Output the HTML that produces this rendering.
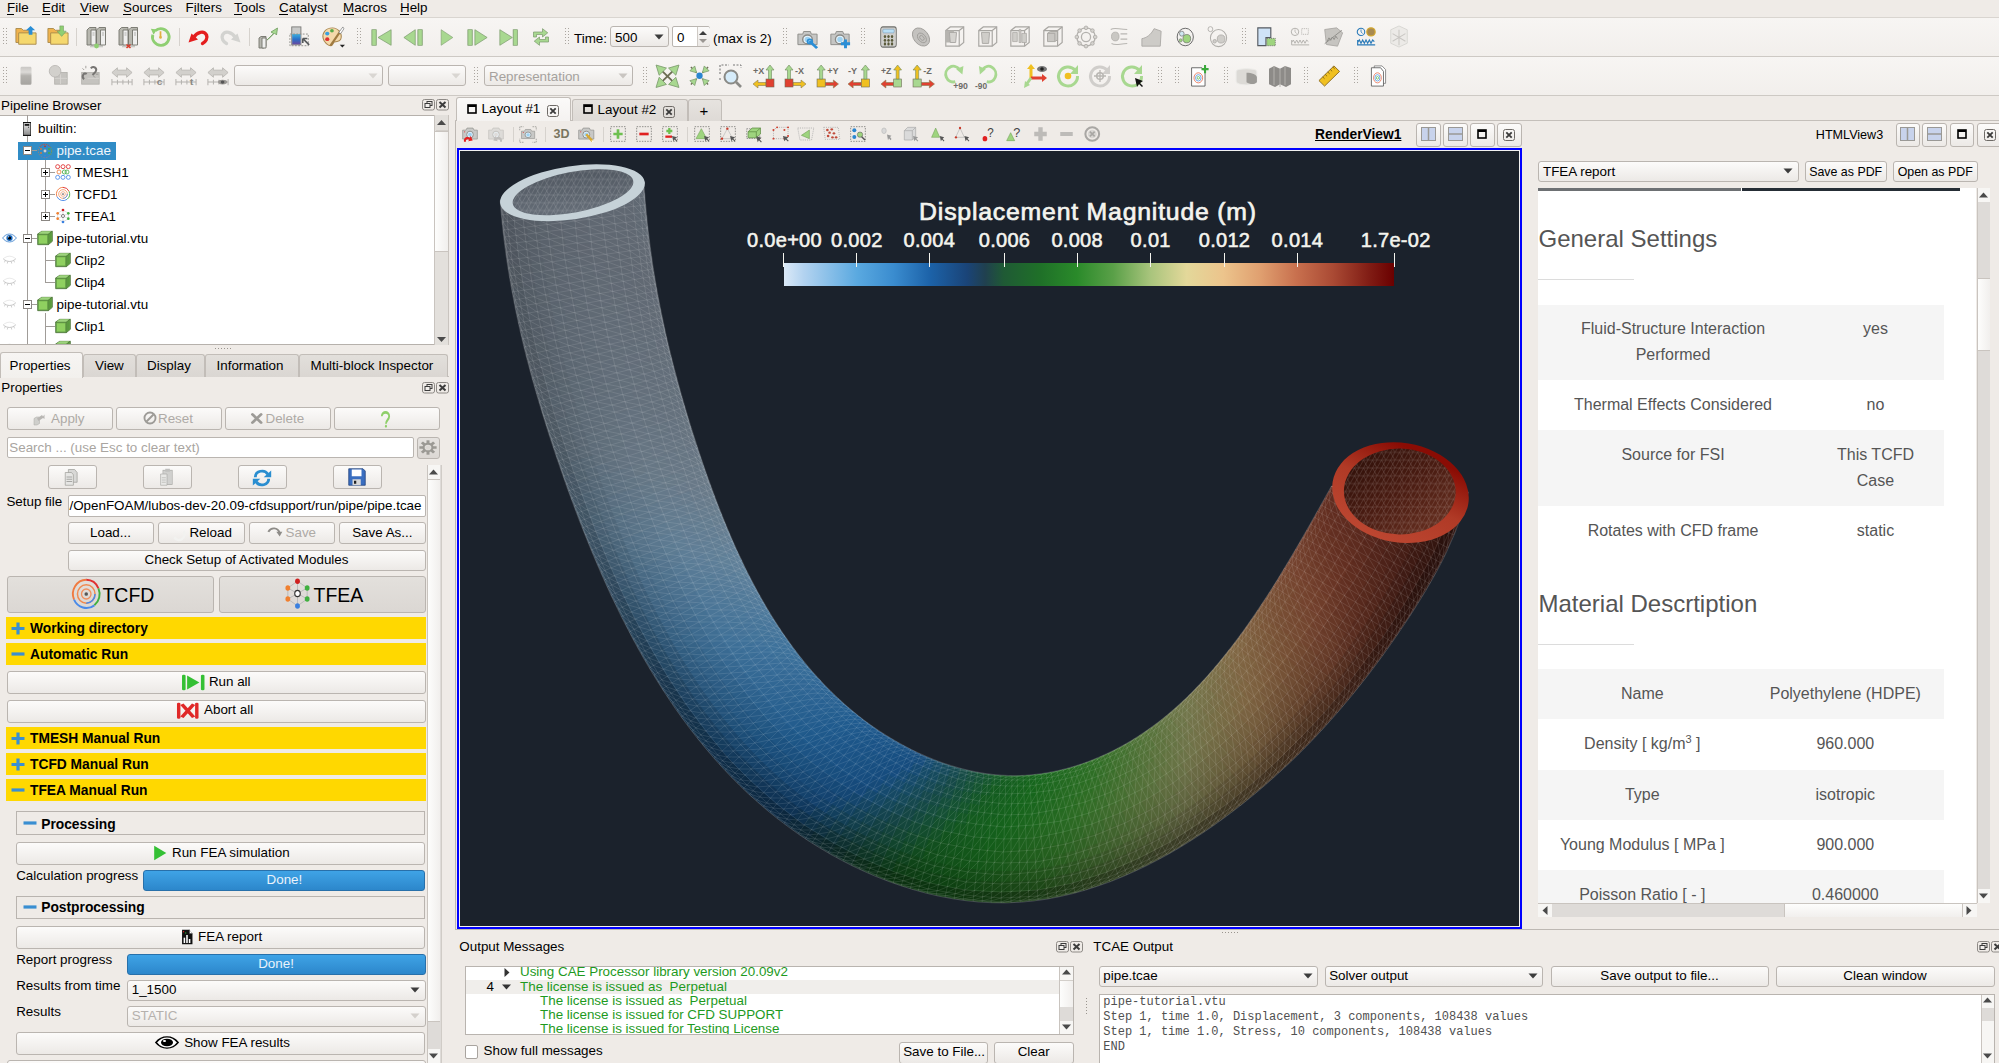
<!DOCTYPE html>
<html><head><meta charset="utf-8"><style>
html,body{margin:0;padding:0;width:1999px;height:1063px;overflow:hidden;background:#efebe7;}
.a{position:absolute;}
.t{white-space:nowrap;}
.btn{background:linear-gradient(#fcfbfa,#ece9e6);border:1px solid #bab5b0;border-radius:3px;box-sizing:border-box;}
.edit{background:#fff;border:1px solid #bab5b0;border-radius:2px;box-sizing:border-box;}
svg{overflow:visible}
</style></head><body>
<div class="a" style="left:0px;top:0px;width:1999px;height:17px;background:#efebe7"></div>
<div class="a" style="left:0px;top:17px;width:1999px;height:1px;background:#d9d5d0"></div>
<div class="a t" style="left:7px;top:-2px;font:normal 13.4px 'Liberation Sans',sans-serif;line-height:19px;color:#000;">File</div>
<div class="a t" style="left:42px;top:-2px;font:normal 13.4px 'Liberation Sans',sans-serif;line-height:19px;color:#000;">Edit</div>
<div class="a t" style="left:80px;top:-2px;font:normal 13.4px 'Liberation Sans',sans-serif;line-height:19px;color:#000;">View</div>
<div class="a t" style="left:123px;top:-2px;font:normal 13.4px 'Liberation Sans',sans-serif;line-height:19px;color:#000;">Sources</div>
<div class="a t" style="left:185.5px;top:-2px;font:normal 13.4px 'Liberation Sans',sans-serif;line-height:19px;color:#000;">Filters</div>
<div class="a t" style="left:234px;top:-2px;font:normal 13.4px 'Liberation Sans',sans-serif;line-height:19px;color:#000;">Tools</div>
<div class="a t" style="left:279px;top:-2px;font:normal 13.4px 'Liberation Sans',sans-serif;line-height:19px;color:#000;">Catalyst</div>
<div class="a t" style="left:343px;top:-2px;font:normal 13.4px 'Liberation Sans',sans-serif;line-height:19px;color:#000;">Macros</div>
<div class="a t" style="left:400px;top:-2px;font:normal 13.4px 'Liberation Sans',sans-serif;line-height:19px;color:#000;">Help</div>
<div class="a" style="left:7px;top:14px;width:7px;height:1px;background:#000"></div>
<div class="a" style="left:42px;top:14px;width:8px;height:1px;background:#000"></div>
<div class="a" style="left:80px;top:14px;width:9px;height:1px;background:#000"></div>
<div class="a" style="left:123px;top:14px;width:8px;height:1px;background:#000"></div>
<div class="a" style="left:194px;top:14px;width:3px;height:1px;background:#000"></div>
<div class="a" style="left:234px;top:14px;width:8px;height:1px;background:#000"></div>
<div class="a" style="left:279px;top:14px;width:9px;height:1px;background:#000"></div>
<div class="a" style="left:343px;top:14px;width:11px;height:1px;background:#000"></div>
<div class="a" style="left:400px;top:14px;width:9px;height:1px;background:#000"></div>
<div class="a" style="left:0px;top:18px;width:1999px;height:38px;background:linear-gradient(#f7f5f3,#f2efec)"></div>
<div class="a" style="left:0px;top:56px;width:1999px;height:1px;background:#cdc9c4"></div>
<div class="a" style="left:0px;top:57px;width:1999px;height:38px;background:linear-gradient(#f7f5f3,#f2efec)"></div>
<div class="a" style="left:0px;top:95px;width:1999px;height:1px;background:#cdc9c4"></div>
<svg class="a" style="left:3px;top:28px;" width="5" height="17" viewBox="0 0 5 17"><rect x="0" y="0" width="1" height="1" fill="#aaa59f"/><rect x="3" y="0" width="1" height="1" fill="#aaa59f"/><rect x="0" y="3" width="1" height="1" fill="#aaa59f"/><rect x="3" y="3" width="1" height="1" fill="#aaa59f"/><rect x="0" y="6" width="1" height="1" fill="#aaa59f"/><rect x="3" y="6" width="1" height="1" fill="#aaa59f"/><rect x="0" y="9" width="1" height="1" fill="#aaa59f"/><rect x="3" y="9" width="1" height="1" fill="#aaa59f"/><rect x="0" y="12" width="1" height="1" fill="#aaa59f"/><rect x="3" y="12" width="1" height="1" fill="#aaa59f"/><rect x="0" y="15" width="1" height="1" fill="#aaa59f"/><rect x="3" y="15" width="1" height="1" fill="#aaa59f"/></svg>
<div class="a" style="left:76px;top:28px;width:1px;height:18px;background:#d6d2cd"></div>
<div class="a" style="left:179px;top:28px;width:1px;height:18px;background:#d6d2cd"></div>
<div class="a" style="left:249px;top:28px;width:1px;height:18px;background:#d6d2cd"></div>
<svg class="a" style="left:357px;top:28px;" width="5" height="17" viewBox="0 0 5 17"><rect x="0" y="0" width="1" height="1" fill="#aaa59f"/><rect x="3" y="0" width="1" height="1" fill="#aaa59f"/><rect x="0" y="3" width="1" height="1" fill="#aaa59f"/><rect x="3" y="3" width="1" height="1" fill="#aaa59f"/><rect x="0" y="6" width="1" height="1" fill="#aaa59f"/><rect x="3" y="6" width="1" height="1" fill="#aaa59f"/><rect x="0" y="9" width="1" height="1" fill="#aaa59f"/><rect x="3" y="9" width="1" height="1" fill="#aaa59f"/><rect x="0" y="12" width="1" height="1" fill="#aaa59f"/><rect x="3" y="12" width="1" height="1" fill="#aaa59f"/><rect x="0" y="15" width="1" height="1" fill="#aaa59f"/><rect x="3" y="15" width="1" height="1" fill="#aaa59f"/></svg>
<svg class="a" style="left:565px;top:28px;" width="5" height="17" viewBox="0 0 5 17"><rect x="0" y="0" width="1" height="1" fill="#aaa59f"/><rect x="3" y="0" width="1" height="1" fill="#aaa59f"/><rect x="0" y="3" width="1" height="1" fill="#aaa59f"/><rect x="3" y="3" width="1" height="1" fill="#aaa59f"/><rect x="0" y="6" width="1" height="1" fill="#aaa59f"/><rect x="3" y="6" width="1" height="1" fill="#aaa59f"/><rect x="0" y="9" width="1" height="1" fill="#aaa59f"/><rect x="3" y="9" width="1" height="1" fill="#aaa59f"/><rect x="0" y="12" width="1" height="1" fill="#aaa59f"/><rect x="3" y="12" width="1" height="1" fill="#aaa59f"/><rect x="0" y="15" width="1" height="1" fill="#aaa59f"/><rect x="3" y="15" width="1" height="1" fill="#aaa59f"/></svg>
<svg class="a" style="left:783px;top:28px;" width="5" height="17" viewBox="0 0 5 17"><rect x="0" y="0" width="1" height="1" fill="#aaa59f"/><rect x="3" y="0" width="1" height="1" fill="#aaa59f"/><rect x="0" y="3" width="1" height="1" fill="#aaa59f"/><rect x="3" y="3" width="1" height="1" fill="#aaa59f"/><rect x="0" y="6" width="1" height="1" fill="#aaa59f"/><rect x="3" y="6" width="1" height="1" fill="#aaa59f"/><rect x="0" y="9" width="1" height="1" fill="#aaa59f"/><rect x="3" y="9" width="1" height="1" fill="#aaa59f"/><rect x="0" y="12" width="1" height="1" fill="#aaa59f"/><rect x="3" y="12" width="1" height="1" fill="#aaa59f"/><rect x="0" y="15" width="1" height="1" fill="#aaa59f"/><rect x="3" y="15" width="1" height="1" fill="#aaa59f"/></svg>
<svg class="a" style="left:861px;top:28px;" width="5" height="17" viewBox="0 0 5 17"><rect x="0" y="0" width="1" height="1" fill="#aaa59f"/><rect x="3" y="0" width="1" height="1" fill="#aaa59f"/><rect x="0" y="3" width="1" height="1" fill="#aaa59f"/><rect x="3" y="3" width="1" height="1" fill="#aaa59f"/><rect x="0" y="6" width="1" height="1" fill="#aaa59f"/><rect x="3" y="6" width="1" height="1" fill="#aaa59f"/><rect x="0" y="9" width="1" height="1" fill="#aaa59f"/><rect x="3" y="9" width="1" height="1" fill="#aaa59f"/><rect x="0" y="12" width="1" height="1" fill="#aaa59f"/><rect x="3" y="12" width="1" height="1" fill="#aaa59f"/><rect x="0" y="15" width="1" height="1" fill="#aaa59f"/><rect x="3" y="15" width="1" height="1" fill="#aaa59f"/></svg>
<svg class="a" style="left:1242px;top:28px;" width="5" height="17" viewBox="0 0 5 17"><rect x="0" y="0" width="1" height="1" fill="#aaa59f"/><rect x="3" y="0" width="1" height="1" fill="#aaa59f"/><rect x="0" y="3" width="1" height="1" fill="#aaa59f"/><rect x="3" y="3" width="1" height="1" fill="#aaa59f"/><rect x="0" y="6" width="1" height="1" fill="#aaa59f"/><rect x="3" y="6" width="1" height="1" fill="#aaa59f"/><rect x="0" y="9" width="1" height="1" fill="#aaa59f"/><rect x="3" y="9" width="1" height="1" fill="#aaa59f"/><rect x="0" y="12" width="1" height="1" fill="#aaa59f"/><rect x="3" y="12" width="1" height="1" fill="#aaa59f"/><rect x="0" y="15" width="1" height="1" fill="#aaa59f"/><rect x="3" y="15" width="1" height="1" fill="#aaa59f"/></svg>
<svg class="a" style="left:3px;top:67px;" width="5" height="17" viewBox="0 0 5 17"><rect x="0" y="0" width="1" height="1" fill="#aaa59f"/><rect x="3" y="0" width="1" height="1" fill="#aaa59f"/><rect x="0" y="3" width="1" height="1" fill="#aaa59f"/><rect x="3" y="3" width="1" height="1" fill="#aaa59f"/><rect x="0" y="6" width="1" height="1" fill="#aaa59f"/><rect x="3" y="6" width="1" height="1" fill="#aaa59f"/><rect x="0" y="9" width="1" height="1" fill="#aaa59f"/><rect x="3" y="9" width="1" height="1" fill="#aaa59f"/><rect x="0" y="12" width="1" height="1" fill="#aaa59f"/><rect x="3" y="12" width="1" height="1" fill="#aaa59f"/><rect x="0" y="15" width="1" height="1" fill="#aaa59f"/><rect x="3" y="15" width="1" height="1" fill="#aaa59f"/></svg>
<svg class="a" style="left:474px;top:67px;" width="5" height="17" viewBox="0 0 5 17"><rect x="0" y="0" width="1" height="1" fill="#aaa59f"/><rect x="3" y="0" width="1" height="1" fill="#aaa59f"/><rect x="0" y="3" width="1" height="1" fill="#aaa59f"/><rect x="3" y="3" width="1" height="1" fill="#aaa59f"/><rect x="0" y="6" width="1" height="1" fill="#aaa59f"/><rect x="3" y="6" width="1" height="1" fill="#aaa59f"/><rect x="0" y="9" width="1" height="1" fill="#aaa59f"/><rect x="3" y="9" width="1" height="1" fill="#aaa59f"/><rect x="0" y="12" width="1" height="1" fill="#aaa59f"/><rect x="3" y="12" width="1" height="1" fill="#aaa59f"/><rect x="0" y="15" width="1" height="1" fill="#aaa59f"/><rect x="3" y="15" width="1" height="1" fill="#aaa59f"/></svg>
<svg class="a" style="left:643px;top:67px;" width="5" height="17" viewBox="0 0 5 17"><rect x="0" y="0" width="1" height="1" fill="#aaa59f"/><rect x="3" y="0" width="1" height="1" fill="#aaa59f"/><rect x="0" y="3" width="1" height="1" fill="#aaa59f"/><rect x="3" y="3" width="1" height="1" fill="#aaa59f"/><rect x="0" y="6" width="1" height="1" fill="#aaa59f"/><rect x="3" y="6" width="1" height="1" fill="#aaa59f"/><rect x="0" y="9" width="1" height="1" fill="#aaa59f"/><rect x="3" y="9" width="1" height="1" fill="#aaa59f"/><rect x="0" y="12" width="1" height="1" fill="#aaa59f"/><rect x="3" y="12" width="1" height="1" fill="#aaa59f"/><rect x="0" y="15" width="1" height="1" fill="#aaa59f"/><rect x="3" y="15" width="1" height="1" fill="#aaa59f"/></svg>
<svg class="a" style="left:1011px;top:67px;" width="5" height="17" viewBox="0 0 5 17"><rect x="0" y="0" width="1" height="1" fill="#aaa59f"/><rect x="3" y="0" width="1" height="1" fill="#aaa59f"/><rect x="0" y="3" width="1" height="1" fill="#aaa59f"/><rect x="3" y="3" width="1" height="1" fill="#aaa59f"/><rect x="0" y="6" width="1" height="1" fill="#aaa59f"/><rect x="3" y="6" width="1" height="1" fill="#aaa59f"/><rect x="0" y="9" width="1" height="1" fill="#aaa59f"/><rect x="3" y="9" width="1" height="1" fill="#aaa59f"/><rect x="0" y="12" width="1" height="1" fill="#aaa59f"/><rect x="3" y="12" width="1" height="1" fill="#aaa59f"/><rect x="0" y="15" width="1" height="1" fill="#aaa59f"/><rect x="3" y="15" width="1" height="1" fill="#aaa59f"/></svg>
<svg class="a" style="left:1158px;top:67px;" width="5" height="17" viewBox="0 0 5 17"><rect x="0" y="0" width="1" height="1" fill="#aaa59f"/><rect x="3" y="0" width="1" height="1" fill="#aaa59f"/><rect x="0" y="3" width="1" height="1" fill="#aaa59f"/><rect x="3" y="3" width="1" height="1" fill="#aaa59f"/><rect x="0" y="6" width="1" height="1" fill="#aaa59f"/><rect x="3" y="6" width="1" height="1" fill="#aaa59f"/><rect x="0" y="9" width="1" height="1" fill="#aaa59f"/><rect x="3" y="9" width="1" height="1" fill="#aaa59f"/><rect x="0" y="12" width="1" height="1" fill="#aaa59f"/><rect x="3" y="12" width="1" height="1" fill="#aaa59f"/><rect x="0" y="15" width="1" height="1" fill="#aaa59f"/><rect x="3" y="15" width="1" height="1" fill="#aaa59f"/></svg>
<svg class="a" style="left:1175px;top:67px;" width="5" height="17" viewBox="0 0 5 17"><rect x="0" y="0" width="1" height="1" fill="#aaa59f"/><rect x="3" y="0" width="1" height="1" fill="#aaa59f"/><rect x="0" y="3" width="1" height="1" fill="#aaa59f"/><rect x="3" y="3" width="1" height="1" fill="#aaa59f"/><rect x="0" y="6" width="1" height="1" fill="#aaa59f"/><rect x="3" y="6" width="1" height="1" fill="#aaa59f"/><rect x="0" y="9" width="1" height="1" fill="#aaa59f"/><rect x="3" y="9" width="1" height="1" fill="#aaa59f"/><rect x="0" y="12" width="1" height="1" fill="#aaa59f"/><rect x="3" y="12" width="1" height="1" fill="#aaa59f"/><rect x="0" y="15" width="1" height="1" fill="#aaa59f"/><rect x="3" y="15" width="1" height="1" fill="#aaa59f"/></svg>
<svg class="a" style="left:1224px;top:67px;" width="5" height="17" viewBox="0 0 5 17"><rect x="0" y="0" width="1" height="1" fill="#aaa59f"/><rect x="3" y="0" width="1" height="1" fill="#aaa59f"/><rect x="0" y="3" width="1" height="1" fill="#aaa59f"/><rect x="3" y="3" width="1" height="1" fill="#aaa59f"/><rect x="0" y="6" width="1" height="1" fill="#aaa59f"/><rect x="3" y="6" width="1" height="1" fill="#aaa59f"/><rect x="0" y="9" width="1" height="1" fill="#aaa59f"/><rect x="3" y="9" width="1" height="1" fill="#aaa59f"/><rect x="0" y="12" width="1" height="1" fill="#aaa59f"/><rect x="3" y="12" width="1" height="1" fill="#aaa59f"/><rect x="0" y="15" width="1" height="1" fill="#aaa59f"/><rect x="3" y="15" width="1" height="1" fill="#aaa59f"/></svg>
<svg class="a" style="left:1304px;top:67px;" width="5" height="17" viewBox="0 0 5 17"><rect x="0" y="0" width="1" height="1" fill="#aaa59f"/><rect x="3" y="0" width="1" height="1" fill="#aaa59f"/><rect x="0" y="3" width="1" height="1" fill="#aaa59f"/><rect x="3" y="3" width="1" height="1" fill="#aaa59f"/><rect x="0" y="6" width="1" height="1" fill="#aaa59f"/><rect x="3" y="6" width="1" height="1" fill="#aaa59f"/><rect x="0" y="9" width="1" height="1" fill="#aaa59f"/><rect x="3" y="9" width="1" height="1" fill="#aaa59f"/><rect x="0" y="12" width="1" height="1" fill="#aaa59f"/><rect x="3" y="12" width="1" height="1" fill="#aaa59f"/><rect x="0" y="15" width="1" height="1" fill="#aaa59f"/><rect x="3" y="15" width="1" height="1" fill="#aaa59f"/></svg>
<svg class="a" style="left:1354px;top:67px;" width="5" height="17" viewBox="0 0 5 17"><rect x="0" y="0" width="1" height="1" fill="#aaa59f"/><rect x="3" y="0" width="1" height="1" fill="#aaa59f"/><rect x="0" y="3" width="1" height="1" fill="#aaa59f"/><rect x="3" y="3" width="1" height="1" fill="#aaa59f"/><rect x="0" y="6" width="1" height="1" fill="#aaa59f"/><rect x="3" y="6" width="1" height="1" fill="#aaa59f"/><rect x="0" y="9" width="1" height="1" fill="#aaa59f"/><rect x="3" y="9" width="1" height="1" fill="#aaa59f"/><rect x="0" y="12" width="1" height="1" fill="#aaa59f"/><rect x="3" y="12" width="1" height="1" fill="#aaa59f"/><rect x="0" y="15" width="1" height="1" fill="#aaa59f"/><rect x="3" y="15" width="1" height="1" fill="#aaa59f"/></svg>
<div class="a t" style="left:574px;top:29px;font:normal 13.4px 'Liberation Sans',sans-serif;line-height:19px;color:#000;">Time:</div>
<div class="a btn" style="left:610px;top:26px;width:59px;height:21px;"></div>
<div class="a t" style="left:615px;top:28px;font:normal 13.4px 'Liberation Sans',sans-serif;line-height:19px;color:#000;">500</div>
<svg class="a" style="left:653.5px;top:33.5px;" width="10" height="6" viewBox="0 0 10 6"><path d="M0.5 0.5h9l-4.5 5z" fill="#3c3c3c"/></svg>
<div class="a edit" style="left:672px;top:26px;width:38px;height:21px;"></div>
<div class="a" style="left:696.5px;top:27px;width:12.5px;height:19px;background:linear-gradient(#fbfaf9,#ebe8e5);border-left:1px solid #cfcac5;border-radius:0 2px 2px 0"></div>
<svg class="a" style="left:698px;top:29px;" width="10" height="16" viewBox="0 0 10 16"><path d="M1 6l4-4 4 4z" fill="#3c3c3c"/><path d="M1 10l4 4 4-4z" fill="#9a9692"/></svg>
<div class="a t" style="left:677px;top:28px;font:normal 13.4px 'Liberation Sans',sans-serif;line-height:19px;color:#000;">0</div>
<div class="a t" style="left:713px;top:29px;font:normal 13.4px 'Liberation Sans',sans-serif;line-height:19px;color:#000;">(max is 2)</div>
<div class="a btn" style="left:234px;top:65px;width:149px;height:21px;"></div>
<svg class="a" style="left:367.5px;top:72.5px;" width="10" height="6" viewBox="0 0 10 6"><path d="M0.5 0.5h9l-4.5 5z" fill="#d9d6d2"/></svg>
<div class="a btn" style="left:388px;top:65px;width:78px;height:21px;"></div>
<svg class="a" style="left:450.5px;top:72.5px;" width="10" height="6" viewBox="0 0 10 6"><path d="M0.5 0.5h9l-4.5 5z" fill="#d9d6d2"/></svg>
<div class="a btn" style="left:484px;top:65px;width:149px;height:21px;"></div>
<div class="a t" style="left:489px;top:67px;font:normal 13.4px 'Liberation Sans',sans-serif;line-height:19px;color:#a6a29e;">Representation</div>
<svg class="a" style="left:617.5px;top:72.5px;" width="10" height="6" viewBox="0 0 10 6"><path d="M0.5 0.5h9l-4.5 5z" fill="#c9c5c1"/></svg>
<div class="a t" style="left:1px;top:96px;font:normal 13.4px 'Liberation Sans',sans-serif;line-height:19px;color:#000;">Pipeline Browser</div>
<svg class="a" style="left:422px;top:99px;" width="28" height="12" viewBox="0 0 28 12"><rect x="0.5" y="0.5" width="12" height="10.5" rx="2" fill="none" stroke="#8e8a86"/><rect x="5" y="2.5" width="5" height="4" fill="none" stroke="#3c3c3c"/><rect x="3" y="4.5" width="5" height="4" fill="#f2efec" stroke="#3c3c3c"/><rect x="14.5" y="0.5" width="12" height="10.5" rx="2" fill="none" stroke="#8e8a86"/><path d="M17.5 3l6 5.5M23.5 3l-6 5.5" stroke="#3c3c3c" stroke-width="2"/></svg>
<div class="a" style="left:0px;top:115px;width:449px;height:230px;background:#fff;border-top:1px solid #b6b1ac;box-sizing:border-box"></div>
<div class="a" style="left:434px;top:115px;width:15px;height:230px;background:#e3e0dc;border-left:1px solid #c9c4bf;border-right:1px solid #c9c4bf;box-sizing:border-box"></div>
<div class="a" style="left:435px;top:131px;width:13px;height:121px;background:linear-gradient(90deg,#fdfdfc,#f1efed);border-top:1px solid #c9c4bf;border-bottom:1px solid #c9c4bf;box-sizing:border-box"></div>
<svg class="a" style="left:436px;top:118px;" width="11" height="10" viewBox="0 0 11 10"><path d="M1 7l4.5-5 4.5 5z" fill="#4a4a4a"/></svg>
<svg class="a" style="left:436px;top:335px;" width="11" height="10" viewBox="0 0 11 10"><path d="M1 2l4.5 5 4.5-5z" fill="#4a4a4a"/></svg>
<div class="a" style="left:436px;top:116px;width:12px;height:15px;border-bottom:1px solid #d3cfca;box-sizing:border-box"></div>
<div class="a" style="left:27px;top:115px;width:1px;height:230px;background:#a09c98"></div>
<div class="a" style="left:45px;top:159px;width:1px;height:62px;background:#a09c98"></div>
<div class="a" style="left:45px;top:172px;width:10px;height:1px;background:#a09c98"></div>
<div class="a" style="left:45px;top:194px;width:10px;height:1px;background:#a09c98"></div>
<div class="a" style="left:45px;top:216px;width:10px;height:1px;background:#a09c98"></div>
<div class="a" style="left:45px;top:247px;width:1px;height:35px;background:#a09c98"></div>
<div class="a" style="left:45px;top:260px;width:10px;height:1px;background:#a09c98"></div>
<div class="a" style="left:45px;top:282px;width:10px;height:1px;background:#a09c98"></div>
<div class="a" style="left:45px;top:313px;width:1px;height:32px;background:#a09c98"></div>
<div class="a" style="left:45px;top:326px;width:10px;height:1px;background:#a09c98"></div>
<div class="a" style="left:31px;top:238px;width:6px;height:1px;background:#a09c98"></div>
<div class="a" style="left:31px;top:304px;width:6px;height:1px;background:#a09c98"></div>
<div class="a" style="left:18px;top:142px;width:98px;height:18px;background:#308cc6"></div>
<div class="a t" style="left:38px;top:118.5px;font:normal 13.4px 'Liberation Sans',sans-serif;line-height:19px;color:#000;">builtin:</div>
<div class="a t" style="left:56.5px;top:141px;font:normal 13.4px 'Liberation Sans',sans-serif;line-height:19px;color:#f0f6fb;">pipe.tcae</div>
<div class="a t" style="left:74.4px;top:162.7px;font:normal 13.4px 'Liberation Sans',sans-serif;line-height:19px;color:#000;">TMESH1</div>
<div class="a t" style="left:74.4px;top:184.6px;font:normal 13.4px 'Liberation Sans',sans-serif;line-height:19px;color:#000;">TCFD1</div>
<div class="a t" style="left:74.4px;top:206.5px;font:normal 13.4px 'Liberation Sans',sans-serif;line-height:19px;color:#000;">TFEA1</div>
<div class="a t" style="left:56.6px;top:228.5px;font:normal 13.4px 'Liberation Sans',sans-serif;line-height:19px;color:#000;">pipe-tutorial.vtu</div>
<div class="a t" style="left:74.4px;top:250.5px;font:normal 13.4px 'Liberation Sans',sans-serif;line-height:19px;color:#000;">Clip2</div>
<div class="a t" style="left:74.4px;top:272.5px;font:normal 13.4px 'Liberation Sans',sans-serif;line-height:19px;color:#000;">Clip4</div>
<div class="a t" style="left:56.6px;top:294.5px;font:normal 13.4px 'Liberation Sans',sans-serif;line-height:19px;color:#000;">pipe-tutorial.vtu</div>
<div class="a t" style="left:74.4px;top:316.5px;font:normal 13.4px 'Liberation Sans',sans-serif;line-height:19px;color:#000;">Clip1</div>
<svg class="a" style="left:23px;top:146px;" width="9" height="9" viewBox="0 0 9 9"><rect x="0.5" y="0.5" width="8" height="8" fill="#fff" stroke="#8a8682"/><path d="M2 4.5h5" stroke="#000"/></svg>
<svg class="a" style="left:41px;top:168px;" width="9" height="9" viewBox="0 0 9 9"><rect x="0.5" y="0.5" width="8" height="8" fill="#fff" stroke="#8a8682"/><path d="M2 4.5h5" stroke="#000"/><path d="M4.5 2v5" stroke="#000"/></svg>
<svg class="a" style="left:41px;top:190px;" width="9" height="9" viewBox="0 0 9 9"><rect x="0.5" y="0.5" width="8" height="8" fill="#fff" stroke="#8a8682"/><path d="M2 4.5h5" stroke="#000"/><path d="M4.5 2v5" stroke="#000"/></svg>
<svg class="a" style="left:41px;top:212px;" width="9" height="9" viewBox="0 0 9 9"><rect x="0.5" y="0.5" width="8" height="8" fill="#fff" stroke="#8a8682"/><path d="M2 4.5h5" stroke="#000"/><path d="M4.5 2v5" stroke="#000"/></svg>
<svg class="a" style="left:23px;top:234px;" width="9" height="9" viewBox="0 0 9 9"><rect x="0.5" y="0.5" width="8" height="8" fill="#fff" stroke="#8a8682"/><path d="M2 4.5h5" stroke="#000"/></svg>
<svg class="a" style="left:23px;top:300px;" width="9" height="9" viewBox="0 0 9 9"><rect x="0.5" y="0.5" width="8" height="8" fill="#fff" stroke="#8a8682"/><path d="M2 4.5h5" stroke="#000"/></svg>
<div class="a" style="left:32px;top:150px;width:5px;height:1px;background:#a09c98"></div>
<div class="a" style="left:50px;top:172px;width:5px;height:1px;background:#a09c98"></div>
<div class="a" style="left:50px;top:194px;width:5px;height:1px;background:#a09c98"></div>
<div class="a" style="left:50px;top:216px;width:5px;height:1px;background:#a09c98"></div>
<svg class="a" style="left:215px;top:348px;" width="18" height="2" viewBox="0 0 18 2"><rect x="0" y="0" width="1" height="1" fill="#9a958f"/><rect x="3" y="0" width="1" height="1" fill="#9a958f"/><rect x="6" y="0" width="1" height="1" fill="#9a958f"/><rect x="9" y="0" width="1" height="1" fill="#9a958f"/><rect x="12" y="0" width="1" height="1" fill="#9a958f"/><rect x="15" y="0" width="1" height="1" fill="#9a958f"/></svg>
<div class="a" style="left:0px;top:376px;width:449px;height:1px;background:#c4bfba"></div>
<div class="a" style="left:83px;top:354px;width:52.5px;height:23px;background:linear-gradient(#e2dfdb,#dad6d2);border:1px solid #c2bdb8;border-bottom:none;border-radius:3px 3px 0 0;box-sizing:border-box"></div>
<div class="a t" style="left:95px;top:356px;font:normal 13.4px 'Liberation Sans',sans-serif;line-height:19px;color:#000;">View</div>
<div class="a" style="left:135.5px;top:354px;width:69.0px;height:23px;background:linear-gradient(#e2dfdb,#dad6d2);border:1px solid #c2bdb8;border-bottom:none;border-radius:3px 3px 0 0;box-sizing:border-box"></div>
<div class="a t" style="left:147px;top:356px;font:normal 13.4px 'Liberation Sans',sans-serif;line-height:19px;color:#000;">Display</div>
<div class="a" style="left:204.5px;top:354px;width:94.0px;height:23px;background:linear-gradient(#e2dfdb,#dad6d2);border:1px solid #c2bdb8;border-bottom:none;border-radius:3px 3px 0 0;box-sizing:border-box"></div>
<div class="a t" style="left:216.5px;top:356px;font:normal 13.4px 'Liberation Sans',sans-serif;line-height:19px;color:#000;">Information</div>
<div class="a" style="left:298.5px;top:354px;width:149.5px;height:23px;background:linear-gradient(#e2dfdb,#dad6d2);border:1px solid #c2bdb8;border-bottom:none;border-radius:3px 3px 0 0;box-sizing:border-box"></div>
<div class="a t" style="left:310.5px;top:356px;font:normal 13.4px 'Liberation Sans',sans-serif;line-height:19px;color:#000;">Multi-block Inspector</div>
<div class="a" style="left:0px;top:352px;width:82.5px;height:26px;background:linear-gradient(#f7f5f3,#f2f0ed);border:1px solid #c2bdb8;border-bottom:none;border-radius:3px 3px 0 0;box-sizing:border-box"></div>
<div class="a t" style="left:9.5px;top:356px;font:normal 13.4px 'Liberation Sans',sans-serif;line-height:19px;color:#000;">Properties</div>
<div class="a t" style="left:1.3px;top:377.8px;font:normal 13.4px 'Liberation Sans',sans-serif;line-height:19px;color:#000;">Properties</div>
<svg class="a" style="left:422px;top:382px;" width="28" height="12" viewBox="0 0 28 12"><rect x="0.5" y="0.5" width="12" height="10.5" rx="2" fill="none" stroke="#8e8a86"/><rect x="5" y="2.5" width="5" height="4" fill="none" stroke="#3c3c3c"/><rect x="3" y="4.5" width="5" height="4" fill="#f2efec" stroke="#3c3c3c"/><rect x="14.5" y="0.5" width="12" height="10.5" rx="2" fill="none" stroke="#8e8a86"/><path d="M17.5 3l6 5.5M23.5 3l-6 5.5" stroke="#3c3c3c" stroke-width="2"/></svg>
<div class="a btn" style="left:6.5px;top:406.5px;width:106.0px;height:23.0px;"></div>
<div class="a btn" style="left:115.5px;top:406.5px;width:106.0px;height:23.0px;"></div>
<div class="a btn" style="left:224.5px;top:406.5px;width:106.0px;height:23.0px;"></div>
<div class="a btn" style="left:333.5px;top:406.5px;width:106.0px;height:23.0px;"></div>
<div class="a t" style="left:51px;top:408.6px;font:normal 13.4px 'Liberation Sans',sans-serif;line-height:19px;color:#aeaaa6;">Apply</div>
<div class="a t" style="left:158px;top:408.6px;font:normal 13.4px 'Liberation Sans',sans-serif;line-height:19px;color:#aeaaa6;">Reset</div>
<div class="a t" style="left:265.5px;top:408.6px;font:normal 13.4px 'Liberation Sans',sans-serif;line-height:19px;color:#aeaaa6;">Delete</div>
<div class="a edit" style="left:6.5px;top:436.5px;width:407.0px;height:21.0px;"></div>
<div class="a t" style="left:9.3px;top:437.5px;font:normal 13.4px 'Liberation Sans',sans-serif;line-height:19px;color:#a9a5a1;">Search ... (use Esc to clear text)</div>
<div class="a btn" style="left:416.5px;top:436.5px;width:23.0px;height:22.0px;background:linear-gradient(#e6e3e0,#dcd8d4)"></div>
<div class="a" style="left:426.5px;top:465px;width:14px;height:598px;background:#dedbd8;border-left:1px solid #c9c4bf;box-sizing:border-box"></div>
<div class="a" style="left:427.5px;top:479px;width:12px;height:543px;background:linear-gradient(90deg,#fdfdfc,#f1efed);border-top:1px solid #c9c4bf;border-bottom:1px solid #c9c4bf;box-sizing:border-box"></div>
<div class="a" style="left:427.5px;top:465px;width:12px;height:14px;background:#f7f6f4"></div>
<svg class="a" style="left:428px;top:468px;" width="11" height="8" viewBox="0 0 11 8"><path d="M1 6.5l4.5-5 4.5 5z" fill="#4a4a4a"/></svg>
<div class="a" style="left:427.5px;top:1049px;width:12px;height:14px;background:#f7f6f4"></div>
<svg class="a" style="left:428px;top:1052px;" width="11" height="8" viewBox="0 0 11 8"><path d="M1 1.5l4.5 5 4.5-5z" fill="#4a4a4a"/></svg>
<div class="a" style="left:441px;top:465px;width:1px;height:598px;background:#d0ccc7"></div>
<div class="a btn" style="left:47.5px;top:465px;width:49.0px;height:23.5px;"></div>
<div class="a btn" style="left:142.5px;top:465px;width:49.0px;height:23.5px;"></div>
<div class="a btn" style="left:237.5px;top:465px;width:49.0px;height:23.5px;"></div>
<div class="a btn" style="left:332.5px;top:465px;width:49.0px;height:23.5px;"></div>
<div class="a t" style="left:6.4px;top:492.4px;font:normal 13.4px 'Liberation Sans',sans-serif;line-height:19px;color:#000;">Setup file</div>
<div class="a edit" style="left:67.5px;top:495px;width:358.0px;height:21.5px;"></div>
<div class="a" style="left:68.5px;top:496px;width:356px;height:20px;overflow:hidden"><div class="a t" style="right:3px;top:0px;font:13.4px 'Liberation Sans',sans-serif;line-height:20px;white-space:nowrap">/OpenFOAM/lubos-dev-20.09-cfdsupport/run/pipe/pipe.tcae</div></div>
<div class="a btn" style="left:67.5px;top:521.5px;width:86.0px;height:22.5px;"></div>
<div class="a btn" style="left:158px;top:521.5px;width:86.5px;height:22.5px;"></div>
<div class="a btn" style="left:249px;top:521.5px;width:85.5px;height:22.5px;"></div>
<div class="a btn" style="left:339px;top:521.5px;width:86.5px;height:22.5px;"></div>
<div class="a t" style="left:-189.5px;width:600px;text-align:center;top:523.4px;font:normal 13.4px 'Liberation Sans',sans-serif;line-height:19px;color:#000;">Load...</div>
<div class="a t" style="left:189.4px;top:523.4px;font:normal 13.4px 'Liberation Sans',sans-serif;line-height:19px;color:#000;">Reload</div>
<div class="a t" style="left:285.5px;top:523.4px;font:normal 13.4px 'Liberation Sans',sans-serif;line-height:19px;color:#aeaaa6;">Save</div>
<div class="a t" style="left:82.30000000000001px;width:600px;text-align:center;top:523.4px;font:normal 13.4px 'Liberation Sans',sans-serif;line-height:19px;color:#000;">Save As...</div>
<div class="a btn" style="left:67.5px;top:549.5px;width:358.0px;height:21.0px;"></div>
<div class="a t" style="left:-53.5px;width:600px;text-align:center;top:550.4px;font:normal 13.4px 'Liberation Sans',sans-serif;line-height:19px;color:#000;">Check Setup of Activated Modules</div>
<div class="a btn" style="left:6.5px;top:575.5px;width:207.0px;height:37.0px;background:linear-gradient(#e3e0dc,#dbd7d3)"></div>
<div class="a btn" style="left:218.5px;top:575.5px;width:207.0px;height:37.0px;background:linear-gradient(#e3e0dc,#dbd7d3)"></div>
<div class="a t" style="left:102.4px;top:581px;font:normal 19.5px 'Liberation Sans',sans-serif;line-height:28px;color:#000;">TCFD</div>
<div class="a t" style="left:313.5px;top:581px;font:normal 19.5px 'Liberation Sans',sans-serif;line-height:28px;color:#000;">TFEA</div>
<div class="a" style="left:6px;top:617px;width:420px;height:22px;background:#ffd800"></div>
<svg class="a" style="left:11px;top:621.5px;" width="14" height="13" viewBox="0 0 14 13"><path d="M7 0.5v12M0.5 6.5h13" stroke="#3a8fd2" stroke-width="3.2"/></svg>
<div class="a t" style="left:30px;top:619px;font:bold 13.8px 'Liberation Sans',sans-serif;line-height:20px;color:#000;">Working directory</div>
<div class="a" style="left:6px;top:643px;width:420px;height:22px;background:#ffd800"></div>
<svg class="a" style="left:11px;top:652.0px;" width="14" height="4" viewBox="0 0 14 4"><path d="M0.5 2h13" stroke="#3a8fd2" stroke-width="3.2"/></svg>
<div class="a t" style="left:30px;top:645px;font:bold 13.8px 'Liberation Sans',sans-serif;line-height:20px;color:#000;">Automatic Run</div>
<div class="a btn" style="left:6.5px;top:671px;width:419.0px;height:23px;"></div>
<div class="a t" style="left:208.9px;top:672.4px;font:normal 13.4px 'Liberation Sans',sans-serif;line-height:19px;color:#000;">Run all</div>
<div class="a btn" style="left:6.5px;top:699.5px;width:419.0px;height:23.0px;"></div>
<div class="a t" style="left:204px;top:700.3px;font:normal 13.4px 'Liberation Sans',sans-serif;line-height:19px;color:#000;">Abort all</div>
<div class="a" style="left:6px;top:727px;width:420px;height:22px;background:#ffd800"></div>
<svg class="a" style="left:11px;top:731.5px;" width="14" height="13" viewBox="0 0 14 13"><path d="M7 0.5v12M0.5 6.5h13" stroke="#3a8fd2" stroke-width="3.2"/></svg>
<div class="a t" style="left:30px;top:729px;font:bold 13.8px 'Liberation Sans',sans-serif;line-height:20px;color:#000;">TMESH Manual Run</div>
<div class="a" style="left:6px;top:753px;width:420px;height:22px;background:#ffd800"></div>
<svg class="a" style="left:11px;top:757.5px;" width="14" height="13" viewBox="0 0 14 13"><path d="M7 0.5v12M0.5 6.5h13" stroke="#3a8fd2" stroke-width="3.2"/></svg>
<div class="a t" style="left:30px;top:755px;font:bold 13.8px 'Liberation Sans',sans-serif;line-height:20px;color:#000;">TCFD Manual Run</div>
<div class="a" style="left:6px;top:779px;width:420px;height:22px;background:#ffd800"></div>
<svg class="a" style="left:11px;top:788.0px;" width="14" height="4" viewBox="0 0 14 4"><path d="M0.5 2h13" stroke="#3a8fd2" stroke-width="3.2"/></svg>
<div class="a t" style="left:30px;top:781px;font:bold 13.8px 'Liberation Sans',sans-serif;line-height:20px;color:#000;">TFEA Manual Run</div>
<div class="a" style="left:16.2px;top:811px;width:409.3px;height:24px;background:#efebe7;border:1px solid #b9b4af;box-sizing:border-box"></div>
<svg class="a" style="left:22.5px;top:821.0px;" width="14" height="4" viewBox="0 0 14 4"><path d="M0.5 2h13" stroke="#3a8fd2" stroke-width="3.2"/></svg>
<div class="a t" style="left:41.2px;top:814.7px;font:bold 13.8px 'Liberation Sans',sans-serif;line-height:20px;color:#000;">Processing</div>
<div class="a btn" style="left:16.2px;top:841.5px;width:409.3px;height:23.0px;"></div>
<div class="a t" style="left:172px;top:843px;font:normal 13.4px 'Liberation Sans',sans-serif;line-height:19px;color:#000;">Run FEA simulation</div>
<div class="a t" style="left:16.2px;top:865.7px;font:normal 13.4px 'Liberation Sans',sans-serif;line-height:19px;color:#000;">Calculation progress</div>
<div class="a" style="left:143.3px;top:869.5px;width:282.2px;height:21.0px;background:linear-gradient(#3fa3e6,#2c87cb);border:1px solid #2870aa;border-radius:3px;box-sizing:border-box"></div>
<div class="a t" style="left:-15.600000000000023px;width:600px;text-align:center;top:869.5px;font:normal 13.4px 'Liberation Sans',sans-serif;line-height:19px;color:#eaf3fb;">Done!</div>
<div class="a" style="left:16.2px;top:895.5px;width:409.3px;height:23.200000000000045px;background:#efebe7;border:1px solid #b9b4af;box-sizing:border-box"></div>
<svg class="a" style="left:22.5px;top:905.1px;" width="14" height="4" viewBox="0 0 14 4"><path d="M0.5 2h13" stroke="#3a8fd2" stroke-width="3.2"/></svg>
<div class="a t" style="left:41.2px;top:898.4000000000001px;font:bold 13.8px 'Liberation Sans',sans-serif;line-height:20px;color:#000;">Postprocessing</div>
<div class="a btn" style="left:16.2px;top:925.5px;width:409.3px;height:23.0px;"></div>
<div class="a t" style="left:198.1px;top:927.3px;font:normal 13.4px 'Liberation Sans',sans-serif;line-height:19px;color:#000;">FEA report</div>
<div class="a t" style="left:16.2px;top:949.8px;font:normal 13.4px 'Liberation Sans',sans-serif;line-height:19px;color:#000;">Report progress</div>
<div class="a" style="left:126.5px;top:953.5px;width:299.0px;height:21.5px;background:linear-gradient(#3fa3e6,#2c87cb);border:1px solid #2870aa;border-radius:3px;box-sizing:border-box"></div>
<div class="a t" style="left:-24.0px;width:600px;text-align:center;top:954px;font:normal 13.4px 'Liberation Sans',sans-serif;line-height:19px;color:#eaf3fb;">Done!</div>
<div class="a t" style="left:16.2px;top:975.7px;font:normal 13.4px 'Liberation Sans',sans-serif;line-height:19px;color:#000;">Results from time</div>
<div class="a btn" style="left:126.5px;top:979.5px;width:299.0px;height:21.5px;"></div>
<div class="a t" style="left:131.7px;top:980px;font:normal 13.4px 'Liberation Sans',sans-serif;line-height:19px;color:#000;">1_1500</div>
<svg class="a" style="left:410.0px;top:987.25px;" width="10" height="6" viewBox="0 0 10 6"><path d="M0.5 0.5h9l-4.5 5z" fill="#3c3c3c"/></svg>
<div class="a t" style="left:16.2px;top:1002px;font:normal 13.4px 'Liberation Sans',sans-serif;line-height:19px;color:#000;">Results</div>
<div class="a btn" style="left:126.5px;top:1005.5px;width:299.0px;height:21.0px;"></div>
<div class="a t" style="left:131.7px;top:1006px;font:normal 13.4px 'Liberation Sans',sans-serif;line-height:19px;color:#b5b1ad;">STATIC</div>
<svg class="a" style="left:410.0px;top:1013.0px;" width="10" height="6" viewBox="0 0 10 6"><path d="M0.5 0.5h9l-4.5 5z" fill="#d4d0cc"/></svg>
<div class="a btn" style="left:16.2px;top:1031.5px;width:409.3px;height:23.0px;"></div>
<div class="a t" style="left:184.2px;top:1033px;font:normal 13.4px 'Liberation Sans',sans-serif;line-height:19px;color:#000;">Show FEA results</div>
<div class="a btn" style="left:6.5px;top:1059.5px;width:419.0px;height:20.5px;"></div>
<div class="a" style="left:455px;top:120px;width:1544px;height:1px;background:#c4bfba"></div>
<div class="a" style="left:571.5px;top:99px;width:116.0px;height:22px;background:linear-gradient(#e6e3df,#dedad6);border:1px solid #c2bdb8;border-bottom:none;border-radius:3px 3px 0 0;box-sizing:border-box"></div>
<div class="a" style="left:687.5px;top:99px;width:34.0px;height:22px;background:linear-gradient(#e6e3df,#dedad6);border:1px solid #c2bdb8;border-bottom:none;border-radius:3px 3px 0 0;box-sizing:border-box"></div>
<div class="a" style="left:455.8px;top:97px;width:115.69999999999999px;height:25px;background:linear-gradient(#fbfaf9,#f4f2f0);border:1px solid #c2bdb8;border-bottom:none;border-radius:3px 3px 0 0;box-sizing:border-box"></div>
<svg class="a" style="left:467px;top:104px;" width="10" height="10" viewBox="0 0 10 10"><rect x="1" y="1" width="8" height="8" fill="none" stroke="#000" stroke-width="1.6"/><rect x="1" y="1" width="8" height="2" fill="#000"/></svg>
<div class="a t" style="left:481.5px;top:98.8px;font:normal 13.4px 'Liberation Sans',sans-serif;line-height:19px;color:#000;">Layout #1</div>
<svg class="a" style="left:547px;top:104.5px;" width="12" height="12" viewBox="0 0 12 12"><rect x="0.5" y="0.5" width="11" height="11" rx="2" fill="none" stroke="#6e6a66"/><path d="M3.3 3.3l5.4 5.4M8.7 3.3l-5.4 5.4" stroke="#3a3a3a" stroke-width="1.8"/></svg>
<svg class="a" style="left:583px;top:104px;" width="10" height="10" viewBox="0 0 10 10"><rect x="1" y="1" width="8" height="8" fill="none" stroke="#000" stroke-width="1.6"/><rect x="1" y="1" width="8" height="2" fill="#000"/></svg>
<div class="a t" style="left:597.5px;top:100px;font:normal 13.4px 'Liberation Sans',sans-serif;line-height:19px;color:#000;">Layout #2</div>
<svg class="a" style="left:663px;top:105.5px;" width="12" height="12" viewBox="0 0 12 12"><rect x="0.5" y="0.5" width="11" height="11" rx="2" fill="none" stroke="#6e6a66"/><path d="M3.3 3.3l5.4 5.4M8.7 3.3l-5.4 5.4" stroke="#3a3a3a" stroke-width="1.8"/></svg>
<div class="a t" style="left:404px;width:600px;text-align:center;top:99.5px;font:normal 15px 'Liberation Sans',sans-serif;line-height:21px;color:#000;">+</div>
<div class="a" style="left:456px;top:121px;width:1543px;height:27px;background:#efebe7"></div>
<div class="a" style="left:455px;top:121px;width:1px;height:808px;background:#bdb8b3"></div>
<div class="a t" style="left:1315px;top:125px;font:bold 13.8px 'Liberation Sans',sans-serif;line-height:20px;color:#000;text-decoration:underline">RenderView1</div>
<div class="a btn" style="left:1415.5px;top:122.5px;width:25.0px;height:24.0px;"></div>
<svg class="a" style="left:1420.5px;top:127px;" width="15" height="14" viewBox="0 0 15 14"><rect x="0.5" y="0.5" width="14" height="13" fill="#c8d3ec" stroke="#9a9996"/><path d="M7.5 0.5v13" stroke="#9a9996" stroke-width="1.5"/></svg>
<div class="a btn" style="left:1442.5px;top:122.5px;width:25.0px;height:24.0px;"></div>
<svg class="a" style="left:1447.5px;top:127px;" width="15" height="14" viewBox="0 0 15 14"><rect x="0.5" y="0.5" width="14" height="13" fill="#c8d3ec" stroke="#9a9996"/><path d="M0.5 7h14" stroke="#9a9996" stroke-width="1.5"/></svg>
<div class="a btn" style="left:1469.5px;top:122.5px;width:25.0px;height:24.0px;"></div>
<svg class="a" style="left:1477.0px;top:129px;" width="10" height="10" viewBox="0 0 10 10"><rect x="1" y="1" width="8" height="8" fill="none" stroke="#000" stroke-width="1.6"/><rect x="1" y="1" width="8" height="2" fill="#000"/></svg>
<div class="a btn" style="left:1496.5px;top:122.5px;width:25.0px;height:24.0px;"></div>
<svg class="a" style="left:1503.0px;top:128.5px;" width="12" height="12" viewBox="0 0 12 12"><rect x="0.5" y="0.5" width="11" height="11" rx="2" fill="none" stroke="#6e6a66"/><path d="M3.3 3.3l5.4 5.4M8.7 3.3l-5.4 5.4" stroke="#3a3a3a" stroke-width="1.8"/></svg>
<div class="a t" style="left:1815.8px;top:126px;font:normal 12.6px 'Liberation Sans',sans-serif;line-height:18px;color:#000;">HTMLView3</div>
<div class="a btn" style="left:1895.5px;top:122.5px;width:24.5px;height:24.0px;"></div>
<svg class="a" style="left:1900.25px;top:127px;" width="15" height="14" viewBox="0 0 15 14"><rect x="0.5" y="0.5" width="14" height="13" fill="#c8d3ec" stroke="#9a9996"/><path d="M7.5 0.5v13" stroke="#9a9996" stroke-width="1.5"/></svg>
<div class="a btn" style="left:1922px;top:122.5px;width:24.5px;height:24.0px;"></div>
<svg class="a" style="left:1926.75px;top:127px;" width="15" height="14" viewBox="0 0 15 14"><rect x="0.5" y="0.5" width="14" height="13" fill="#c8d3ec" stroke="#9a9996"/><path d="M0.5 7h14" stroke="#9a9996" stroke-width="1.5"/></svg>
<div class="a btn" style="left:1949.5px;top:122.5px;width:24.5px;height:24.0px;"></div>
<svg class="a" style="left:1956.75px;top:129px;" width="10" height="10" viewBox="0 0 10 10"><rect x="1" y="1" width="8" height="8" fill="none" stroke="#000" stroke-width="1.6"/><rect x="1" y="1" width="8" height="2" fill="#000"/></svg>
<div class="a btn" style="left:1977px;top:122.5px;width:25px;height:24.0px;"></div>
<svg class="a" style="left:1983.5px;top:128.5px;" width="12" height="12" viewBox="0 0 12 12"><rect x="0.5" y="0.5" width="11" height="11" rx="2" fill="none" stroke="#6e6a66"/><path d="M3.3 3.3l5.4 5.4M8.7 3.3l-5.4 5.4" stroke="#3a3a3a" stroke-width="1.8"/></svg>
<div class="a" style="left:457px;top:148px;width:1065px;height:781px;background:#0000ff"></div>
<div class="a" style="left:459px;top:150px;width:1061px;height:777px;background:#f2f2f2"></div>
<div class="a" style="left:460px;top:151px;width:1059px;height:775px;background:#1b222c"></div>
<svg class="a" style="left:460px;top:151px" width="1059" height="775" viewBox="460 151 1059 775"><defs><clipPath id="tube"><path d="M500.2 200.5 L501.0 211.0 L502.0 221.5 L503.1 231.9 L504.4 242.4 L505.9 254.0 L507.6 265.6 L509.5 277.1 L511.5 288.6 L513.7 300.1 L515.7 310.5 L518.2 321.9 L520.7 333.3 L523.4 344.7 L526.2 356.1 L529.2 367.4 L532.2 378.7 L535.4 389.9 L538.6 400.8 L541.7 411.2 L545.2 422.4 L548.7 433.6 L552.4 444.7 L555.7 454.7 L559.5 465.8 L563.3 476.8 L567.1 487.6 L570.8 497.7 L574.9 508.7 L579.0 519.6 L583.2 530.3 L587.2 540.3 L591.6 551.1 L596.2 561.9 L600.8 572.7 L605.6 583.4 L610.4 594.0 L615.5 604.6 L620.6 615.1 L625.9 625.5 L631.8 636.9 L637.4 647.2 L643.1 657.4 L649.0 667.5 L655.7 678.5 L661.9 688.4 L668.3 698.2 L675.5 708.9 L682.3 718.4 L690.0 728.8 L697.4 738.3 L705.3 748.0 L713.6 757.8 L721.4 766.5 L730.2 775.9 L739.3 785.1 L747.7 793.2 L757.3 801.8 L767.0 810.2 L777.0 818.3 L787.3 826.1 L797.7 833.6 L808.2 840.7 L818.4 847.1 L830.4 854.2 L841.4 860.2 L852.1 865.7 L864.8 871.7 L876.2 876.6 L888.6 881.4 L900.8 885.7 L913.1 889.6 L925.5 893.0 L938.2 896.0 L951.8 898.6 L964.5 900.5 L978.5 902.0 L991.4 902.7 L1005.4 902.9 L1019.5 902.3 L1032.3 901.1 L1045.8 899.3 L1058.9 896.8 L1072.5 893.7 L1085.0 890.2 L1097.2 886.3 L1110.5 881.6 L1122.4 876.8 L1134.2 871.6 L1145.8 866.1 L1157.3 860.2 L1168.6 854.1 L1179.7 847.6 L1190.7 840.8 L1201.5 833.8 L1212.1 826.6 L1221.9 819.6 L1232.0 812.1 L1242.2 804.2 L1252.2 796.1 L1261.5 788.3 L1270.9 780.1 L1279.5 772.3 L1289.0 763.5 L1297.4 755.4 L1306.5 746.3 L1314.6 737.8 L1322.6 729.3 L1330.4 720.6 L1338.2 711.8 L1345.9 702.7 L1353.6 693.4 L1361.1 684.0 L1368.5 674.6 L1374.8 666.2 L1381.8 656.8 L1388.6 647.3 L1395.3 637.7 L1401.9 628.0 L1407.8 619.3 L1414.1 609.5 L1419.7 600.5 L1425.8 590.5 L1431.1 581.4 L1436.8 571.2 L1441.7 561.9 L1446.3 552.5 L1454.8 533.2 L1462.4 512.9 L1468.4 492.0 L1331.5 486.0 L1331.5 486.0 L1331.5 486.0 L1331.2 486.6 L1325.7 496.4 L1320.2 506.2 L1315.3 514.9 L1309.8 524.7 L1304.8 533.4 L1299.2 543.1 L1294.1 551.8 L1288.4 561.4 L1283.2 570.0 L1278.0 578.6 L1272.7 587.1 L1267.3 595.5 L1261.1 604.9 L1255.7 613.0 L1250.2 621.0 L1244.6 629.0 L1238.8 636.9 L1232.8 644.9 L1226.6 652.8 L1220.3 660.6 L1213.9 668.3 L1208.1 675.0 L1201.3 682.4 L1195.2 688.8 L1188.1 696.0 L1181.4 702.4 L1174.3 708.8 L1167.6 714.6 L1160.7 720.2 L1153.4 725.7 L1145.5 731.3 L1138.1 736.3 L1130.6 741.0 L1122.9 745.4 L1115.1 749.6 L1107.2 753.5 L1099.1 757.1 L1090.9 760.5 L1082.6 763.6 L1074.2 766.3 L1066.8 768.4 L1058.2 770.6 L1049.5 772.3 L1041.9 773.6 L1033.5 774.6 L1025.5 775.3 L1016.6 775.6 L1008.9 775.5 L1001.3 775.2 L992.5 774.4 L984.8 773.4 L976.1 771.9 L968.5 770.3 L960.0 768.2 L951.5 765.7 L943.1 763.0 L934.8 759.9 L927.0 756.7 L918.5 752.9 L911.6 749.6 L903.0 745.1 L895.0 740.6 L888.3 736.6 L880.1 731.4 L872.6 726.3 L865.4 721.1 L858.4 715.7 L851.6 710.1 L844.8 704.3 L838.3 698.3 L831.1 691.4 L824.8 685.1 L818.8 678.6 L812.1 671.2 L806.4 664.4 L800.6 657.2 L794.7 649.6 L789.5 642.4 L783.7 634.2 L778.8 626.9 L773.3 618.4 L768.1 609.9 L763.6 602.2 L758.7 593.5 L753.9 584.7 L749.3 575.8 L745.3 567.9 L741.0 558.8 L736.7 549.7 L732.6 540.6 L728.7 531.3 L724.8 522.1 L721.1 512.8 L717.4 503.4 L713.9 494.1 L710.1 483.7 L706.6 474.1 L703.3 464.6 L700.1 455.1 L696.7 444.7 L693.5 434.9 L690.5 425.4 L687.6 415.8 L684.4 405.0 L681.6 395.4 L678.9 385.7 L676.3 376.0 L673.5 365.6 L671.0 355.5 L668.6 345.7 L666.3 336.0 L664.2 326.2 L662.1 316.3 L660.1 306.5 L658.2 296.7 L656.4 286.8 L654.5 275.7 L652.9 265.8 L651.5 255.9 L650.1 246.0 L648.9 236.0 L647.7 226.1 L646.6 214.9 L645.5 203.8 L644.6 192.6 L643.9 181.4z"/></clipPath><pattern id="mesh" width="9" height="7.8" patternUnits="userSpaceOnUse"><path d="M0 0H9M0 7.8H9M0 7.8L4.5 0L9 7.8M-4.5 0L0 7.8M4.5 7.8L9 0" stroke="#fff" stroke-width="0.5" fill="none"/></pattern><linearGradient id="rring" x1="0" y1="0" x2="1" y2="0.4"><stop offset="0" stop-color="#c04a34"/><stop offset="0.6" stop-color="#b03a26"/><stop offset="1" stop-color="#8a0c04"/></linearGradient><linearGradient id="rin" x1="1" y1="0" x2="0" y2="1"><stop offset="0" stop-color="#2a0e08"/><stop offset="0.5" stop-color="#4a1c12"/><stop offset="1" stop-color="#6e3424"/></linearGradient><linearGradient id="tin" x1="0" y1="0" x2="1" y2="0.3"><stop offset="0" stop-color="#4e555e"/><stop offset="1" stop-color="#646c76"/></linearGradient></defs><g clip-path="url(#tube)"><g stroke-width="0.7"><path d="M500.2 200.5L501.3 214.7 517.5 212.6 516.4 198.3z" fill="#50565f"/><path d="M512.2 198.9L513.3 213.1 529.5 211.1 528.3 196.8z" fill="#545b64"/><path d="M524.1 197.3L525.3 211.6 541.4 209.6 540.3 195.2z" fill="#575f68"/><path d="M536.1 195.7L537.2 210.1 553.4 208.1 552.3 193.6z" fill="#5a626b"/><path d="M548.1 194.1L549.2 208.6 565.3 206.6 564.3 192.0z" fill="#5c646d"/><path d="M560.1 192.5L561.2 207.1 577.3 205.0 576.2 190.4z" fill="#5d656f"/><path d="M572.0 190.9L573.1 205.6 589.3 203.5 588.2 188.8z" fill="#5f6670"/><path d="M584.0 189.4L585.1 204.1 601.2 202.0 600.2 187.2z" fill="#606872"/><path d="M596.0 187.8L597.1 202.5 613.2 200.5 612.2 185.6z" fill="#606872"/><path d="M608.0 186.2L609.0 201.0 625.2 199.0 624.1 184.0z" fill="#606872"/><path d="M619.9 184.6L621.0 199.5 637.1 197.5 636.1 182.4z" fill="#606872"/><path d="M631.9 183.0L632.9 198.0 644.9 196.5 643.9 181.4z" fill="#606873"/><path d="M501.0 211.0L502.4 225.1 518.5 223.2 517.2 208.9z" fill="#4f565e"/><path d="M513.0 209.5L514.3 223.7 530.5 221.7 529.2 207.4z" fill="#545b64"/><path d="M525.0 207.9L526.3 222.2 542.4 220.3 541.1 205.8z" fill="#575e68"/><path d="M536.9 206.4L538.2 220.8 554.4 218.8 553.1 204.3z" fill="#5a626b"/><path d="M548.9 204.9L550.2 219.3 566.3 217.3 565.1 202.8z" fill="#5c646d"/><path d="M560.9 203.3L562.2 217.9 578.3 215.9 577.0 201.2z" fill="#5d656f"/><path d="M572.8 201.8L574.1 216.4 590.2 214.4 589.0 199.7z" fill="#5f6670"/><path d="M584.8 200.2L586.1 214.9 602.2 213.0 601.0 198.2z" fill="#606872"/><path d="M596.8 198.7L598.0 213.5 614.2 211.5 612.9 196.6z" fill="#606872"/><path d="M608.7 197.2L610.0 212.0 626.1 210.1 624.9 195.1z" fill="#606872"/><path d="M620.7 195.6L621.9 210.6 638.1 208.6 636.9 193.6z" fill="#606872"/><path d="M632.7 194.1L633.9 209.1 645.8 207.7 644.6 192.6z" fill="#606973"/><path d="M502.0 221.5L503.5 235.6 519.7 233.7 518.2 219.5z" fill="#4f565f"/><path d="M514.0 220.0L515.5 234.2 531.6 232.3 530.1 218.0z" fill="#545b64"/><path d="M525.9 218.5L527.4 232.8 543.6 230.9 542.1 216.5z" fill="#575e67"/><path d="M537.9 217.0L539.4 231.4 555.5 229.5 554.0 215.0z" fill="#5a626b"/><path d="M549.9 215.6L551.3 230.0 567.5 228.1 566.0 213.6z" fill="#5c636d"/><path d="M561.8 214.1L563.3 228.6 579.4 226.7 578.0 212.1z" fill="#5d656f"/><path d="M573.8 212.6L575.2 227.2 591.4 225.3 589.9 210.6z" fill="#5f6670"/><path d="M585.7 211.1L587.2 225.8 603.3 223.9 601.9 209.1z" fill="#606872"/><path d="M597.7 209.7L599.1 224.4 615.2 222.5 613.8 207.7z" fill="#606872"/><path d="M609.7 208.2L611.1 223.0 627.2 221.1 625.8 206.2z" fill="#606872"/><path d="M621.6 206.7L623.0 221.6 639.1 219.7 637.8 204.7z" fill="#606872"/><path d="M633.6 205.2L635.0 220.2 646.9 218.8 645.5 203.8z" fill="#606973"/><path d="M503.1 231.9L504.8 246.0 520.9 244.2 519.3 230.0z" fill="#4f565f"/><path d="M515.1 230.5L516.8 244.7 532.9 242.9 531.2 228.6z" fill="#545b64"/><path d="M527.0 229.1L528.7 243.4 544.8 241.5 543.2 227.2z" fill="#575f68"/><path d="M539.0 227.7L540.7 242.0 556.8 240.2 555.1 225.8z" fill="#5a626b"/><path d="M550.9 226.3L552.6 240.7 568.7 238.9 567.1 224.3z" fill="#5c636d"/><path d="M562.9 224.8L564.5 239.3 580.7 237.5 579.0 222.9z" fill="#5d656f"/><path d="M574.8 223.4L576.5 238.0 592.6 236.2 591.0 221.5z" fill="#5f6670"/><path d="M586.8 222.0L588.4 236.7 604.5 234.8 602.9 220.1z" fill="#606872"/><path d="M598.8 220.6L600.4 235.3 616.5 233.5 614.9 218.7z" fill="#606872"/><path d="M610.7 219.2L612.3 234.0 628.4 232.2 626.8 217.2z" fill="#606872"/><path d="M622.7 217.7L624.2 232.6 640.4 230.8 638.8 215.8z" fill="#606872"/><path d="M634.6 216.3L636.2 231.3 648.1 230.0 646.6 214.9z" fill="#606973"/><path d="M504.4 242.4L506.5 258.0 522.5 256.0 520.5 240.5z" fill="#4f565f"/><path d="M516.3 241.0L518.4 256.5 534.4 254.4 532.5 239.2z" fill="#545c65"/><path d="M528.3 239.7L530.3 254.9 546.3 252.9 544.4 237.8z" fill="#575f68"/><path d="M540.2 238.3L542.2 253.4 558.2 251.3 556.3 236.5z" fill="#5a626c"/><path d="M552.2 236.9L554.1 251.9 570.1 249.8 568.3 235.1z" fill="#5c646d"/><path d="M564.1 235.6L566.0 250.3 582.0 248.2 580.2 233.7z" fill="#5d656f"/><path d="M576.1 234.2L577.9 248.8 593.9 246.7 592.2 232.4z" fill="#5e6670"/><path d="M588.0 232.9L589.8 247.2 605.8 245.1 604.1 231.0z" fill="#606872"/><path d="M599.9 231.5L601.7 245.7 617.7 243.6 616.1 229.7z" fill="#606872"/><path d="M611.9 230.1L613.6 244.1 629.6 242.1 628.0 228.3z" fill="#606872"/><path d="M623.8 228.8L625.5 242.6 641.5 240.5 639.9 226.9z" fill="#606872"/><path d="M635.8 227.4L637.4 241.1 649.3 239.5 647.7 226.1z" fill="#606973"/><path d="M505.9 254.0L508.2 269.6 524.2 267.3 522.0 252.0z" fill="#4f565f"/><path d="M517.8 252.5L520.1 267.9 536.1 265.7 533.9 250.5z" fill="#545c65"/><path d="M529.8 251.0L532.0 266.2 548.0 264.0 545.8 249.0z" fill="#575f69"/><path d="M541.7 249.5L543.8 264.6 559.8 262.3 557.7 247.5z" fill="#5b636c"/><path d="M553.6 248.0L555.7 262.9 571.7 260.6 569.7 246.0z" fill="#5c646e"/><path d="M565.5 246.5L567.5 261.2 583.5 258.9 581.6 244.5z" fill="#5d656f"/><path d="M577.4 245.0L579.4 259.5 595.4 257.3 593.5 243.0z" fill="#5f6670"/><path d="M589.3 243.5L591.3 257.9 607.3 255.6 605.4 241.5z" fill="#606872"/><path d="M601.2 242.0L603.1 256.2 619.1 253.9 617.3 240.0z" fill="#606872"/><path d="M613.1 240.5L615.0 254.5 631.0 252.2 629.2 238.5z" fill="#606872"/><path d="M625.0 239.0L626.8 252.8 642.8 250.5 641.1 237.0z" fill="#606872"/><path d="M637.0 237.5L638.7 251.1 650.6 249.5 648.9 236.0z" fill="#616973"/><path d="M507.6 265.6L510.1 281.1 526.1 278.7 523.7 263.4z" fill="#4f575f"/><path d="M519.5 263.9L522.0 279.3 537.9 276.9 535.5 261.7z" fill="#545c65"/><path d="M531.4 262.3L533.8 277.5 549.7 275.1 547.4 260.1z" fill="#576069"/><path d="M543.3 260.7L545.6 275.7 561.5 273.3 559.3 258.5z" fill="#5b636d"/><path d="M555.1 259.0L557.4 273.9 573.4 271.4 571.2 256.8z" fill="#5c656f"/><path d="M567.0 257.4L569.2 272.1 585.2 269.6 583.0 255.2z" fill="#5d6670"/><path d="M578.9 255.8L581.0 270.3 597.0 267.8 594.9 253.6z" fill="#5f6771"/><path d="M590.7 254.1L592.9 268.5 608.8 266.0 606.8 251.9z" fill="#606872"/><path d="M602.6 252.5L604.7 266.6 620.6 264.2 618.7 250.3z" fill="#606872"/><path d="M614.5 250.9L616.5 264.8 632.5 262.4 630.5 248.7z" fill="#606872"/><path d="M626.4 249.2L628.3 263.0 644.3 260.6 642.4 247.0z" fill="#606872"/><path d="M638.2 247.6L640.1 261.2 652.0 259.4 650.1 246.0z" fill="#616973"/><path d="M509.5 277.1L512.2 292.7 528.1 290.0 525.5 274.7z" fill="#4f575f"/><path d="M521.3 275.3L524.0 290.7 539.9 288.1 537.3 273.0z" fill="#545c66"/><path d="M533.2 273.6L535.7 288.8 551.6 286.1 549.1 271.2z" fill="#57606a"/><path d="M545.0 271.8L547.5 286.8 563.4 284.2 561.0 269.4z" fill="#5b646d"/><path d="M556.8 270.0L559.3 284.9 575.2 282.3 572.8 267.7z" fill="#5c656f"/><path d="M568.7 268.3L571.1 282.9 587.0 280.3 584.6 265.9z" fill="#5e6670"/><path d="M580.5 266.5L582.8 281.0 598.7 278.4 596.5 264.1z" fill="#5f6872"/><path d="M592.3 264.7L594.6 279.0 610.5 276.4 608.3 262.4z" fill="#606873"/><path d="M604.2 263.0L606.4 277.1 622.3 274.5 620.1 260.6z" fill="#606872"/><path d="M616.0 261.2L618.1 275.1 634.0 272.5 632.0 258.8z" fill="#606872"/><path d="M627.8 259.4L629.9 273.2 645.8 270.6 643.8 257.1z" fill="#606872"/><path d="M639.6 257.7L641.7 271.3 653.5 269.3 651.5 255.9z" fill="#616973"/><path d="M511.5 288.6L514.4 304.2 530.2 301.3 527.4 286.1z" fill="#4e5760"/><path d="M523.3 286.7L526.1 302.1 542.0 299.3 539.2 284.2z" fill="#545d66"/><path d="M535.1 284.8L537.9 300.0 553.7 297.2 551.0 282.3z" fill="#57606a"/><path d="M546.9 282.9L549.6 297.9 565.4 295.1 562.8 280.4z" fill="#5b646e"/><path d="M558.6 281.0L561.3 295.8 577.1 293.0 574.6 278.5z" fill="#5d6570"/><path d="M570.4 279.1L573.0 293.8 588.8 291.0 586.3 276.6z" fill="#5e6771"/><path d="M582.2 277.2L584.7 291.7 600.6 288.9 598.1 274.7z" fill="#5f6872"/><path d="M594.0 275.3L596.5 289.6 612.3 286.8 609.9 272.8z" fill="#606973"/><path d="M605.8 273.4L608.2 287.5 624.0 284.7 621.7 270.9z" fill="#606973"/><path d="M617.6 271.5L619.9 285.4 635.7 282.6 633.5 269.0z" fill="#606973"/><path d="M629.4 269.6L631.6 283.4 647.5 280.6 645.3 267.1z" fill="#606873"/><path d="M641.2 267.7L643.4 281.3 655.1 279.2 652.9 265.8z" fill="#616973"/><path d="M513.7 300.1L516.4 314.1 532.3 311.4 529.5 297.4z" fill="#4e5760"/><path d="M525.4 298.1L528.2 312.1 544.0 309.5 541.2 295.4z" fill="#545d66"/><path d="M537.1 296.1L539.9 310.2 555.7 307.5 553.0 293.3z" fill="#58616a"/><path d="M548.9 294.0L551.6 308.2 567.4 305.6 564.7 291.3z" fill="#5b646f"/><path d="M560.6 292.0L563.3 306.3 579.1 303.6 576.5 289.3z" fill="#5d6670"/><path d="M572.4 290.0L575.0 304.3 590.9 301.7 588.2 287.2z" fill="#5e6772"/><path d="M584.1 287.9L586.8 302.4 602.6 299.7 599.9 285.2z" fill="#606973"/><path d="M595.8 285.9L598.5 300.4 614.3 297.8 611.7 283.2z" fill="#616a74"/><path d="M607.6 283.9L610.2 298.5 626.0 295.8 623.4 281.1z" fill="#616974"/><path d="M619.3 281.8L621.9 296.5 637.7 293.9 635.2 279.1z" fill="#616974"/><path d="M631.0 279.8L633.6 294.6 649.4 291.9 646.9 277.1z" fill="#616973"/><path d="M642.8 277.8L645.3 292.6 657.1 290.7 654.5 275.7z" fill="#616973"/><path d="M515.7 310.5L519.0 325.9 534.7 323.0 531.5 307.8z" fill="#4e5760"/><path d="M527.4 308.5L530.7 323.8 546.4 320.9 543.3 305.8z" fill="#545d67"/><path d="M539.2 306.5L542.3 321.6 558.0 318.7 555.0 303.8z" fill="#58616b"/><path d="M550.9 304.5L554.0 319.5 569.7 316.6 566.7 301.9z" fill="#5b656f"/><path d="M562.6 302.6L565.6 317.3 581.3 314.4 578.4 299.9z" fill="#5d6671"/><path d="M574.3 300.6L577.3 315.2 593.0 312.3 590.2 297.9z" fill="#5e6872"/><path d="M586.1 298.6L588.9 313.0 604.6 310.1 601.9 296.0z" fill="#606974"/><path d="M597.8 296.6L600.6 310.9 616.3 308.0 613.6 294.0z" fill="#616a75"/><path d="M609.5 294.7L612.2 308.7 627.9 305.8 625.3 292.0z" fill="#616a74"/><path d="M621.2 292.7L623.9 306.6 639.6 303.7 637.1 290.0z" fill="#616a74"/><path d="M633.0 290.7L635.5 304.4 651.2 301.5 648.8 288.1z" fill="#616a74"/><path d="M644.7 288.8L647.2 302.3 658.8 300.1 656.4 286.8z" fill="#616974"/><path d="M518.2 321.9L521.6 337.3 537.3 334.2 533.9 319.1z" fill="#4e5760"/><path d="M529.8 319.8L533.2 335.0 548.9 332.0 545.6 317.0z" fill="#545d67"/><path d="M541.5 317.7L544.8 332.8 560.5 329.7 557.2 314.9z" fill="#58616b"/><path d="M553.2 315.6L556.4 330.5 572.0 327.4 568.9 312.7z" fill="#5b6570"/><path d="M564.8 313.5L568.0 328.2 583.6 325.1 580.6 310.6z" fill="#5d6771"/><path d="M576.5 311.4L579.6 325.9 595.2 322.8 592.3 308.5z" fill="#5f6873"/><path d="M588.2 309.3L591.2 323.6 606.8 320.6 603.9 306.4z" fill="#606a74"/><path d="M599.8 307.2L602.8 321.4 618.4 318.3 615.6 304.3z" fill="#616b75"/><path d="M611.5 305.1L614.4 319.1 630.0 316.0 627.3 302.2z" fill="#616b75"/><path d="M623.2 303.0L626.0 316.8 641.6 313.7 638.9 300.1z" fill="#616a75"/><path d="M634.9 300.9L637.6 314.5 653.2 311.4 650.6 298.0z" fill="#616a75"/><path d="M646.5 298.8L649.1 312.2 660.7 310.0 658.2 296.7z" fill="#616a75"/><path d="M520.7 333.3L524.4 348.7 539.9 345.4 536.4 330.3z" fill="#4e5760"/><path d="M532.3 331.1L535.9 346.3 551.5 343.0 548.0 328.1z" fill="#545d67"/><path d="M543.9 328.8L547.4 343.9 563.0 340.6 559.6 325.8z" fill="#58616c"/><path d="M555.6 326.6L559.0 341.5 574.5 338.2 571.2 323.6z" fill="#5c6670"/><path d="M567.2 324.4L570.5 339.1 586.1 335.8 582.8 321.4z" fill="#5d6772"/><path d="M578.8 322.1L582.0 336.6 597.6 333.4 594.5 319.1z" fill="#5f6974"/><path d="M590.4 319.9L593.6 334.2 609.1 331.0 606.1 316.9z" fill="#606a75"/><path d="M602.0 317.7L605.1 331.8 620.7 328.6 617.7 314.7z" fill="#616b76"/><path d="M613.6 315.4L616.6 329.4 632.2 326.2 629.3 312.4z" fill="#616b76"/><path d="M625.2 313.2L628.2 327.0 643.7 323.8 640.9 310.2z" fill="#626b76"/><path d="M636.9 311.0L639.7 324.6 655.3 321.4 652.5 308.0z" fill="#626b76"/><path d="M648.5 308.7L651.2 322.2 662.8 319.8 660.1 306.5z" fill="#626b75"/><path d="M523.4 344.7L527.2 360.0 542.7 356.6 539.0 341.5z" fill="#4e5760"/><path d="M535.0 342.3L538.7 357.5 554.2 354.1 550.6 339.1z" fill="#545e67"/><path d="M546.5 340.0L550.2 355.0 565.7 351.5 562.1 336.8z" fill="#58626c"/><path d="M558.1 337.6L561.6 352.4 577.1 349.0 573.7 334.4z" fill="#5c6671"/><path d="M569.6 335.2L573.1 349.9 588.6 346.5 585.2 332.1z" fill="#5e6873"/><path d="M581.2 332.9L584.6 347.3 600.1 343.9 596.8 329.7z" fill="#5f6974"/><path d="M592.7 330.5L596.1 344.8 611.5 341.4 608.3 327.3z" fill="#616b76"/><path d="M604.3 328.2L607.5 342.3 623.0 338.9 619.9 325.0z" fill="#626c77"/><path d="M615.8 325.8L619.0 339.7 634.5 336.3 631.4 322.6z" fill="#626c77"/><path d="M627.4 323.4L630.5 337.2 646.0 333.8 643.0 320.2z" fill="#626c76"/><path d="M639.0 321.1L641.9 334.7 657.4 331.2 654.6 317.9z" fill="#626b76"/><path d="M650.5 318.7L653.4 332.1 664.9 329.6 662.1 316.3z" fill="#626b76"/><path d="M526.2 356.1L530.2 371.3 545.6 367.7 541.7 352.7z" fill="#4e5760"/><path d="M537.7 353.6L541.6 368.7 557.0 365.1 553.2 350.2z" fill="#545e68"/><path d="M549.2 351.1L553.0 366.0 568.4 362.4 564.7 347.7z" fill="#58626d"/><path d="M560.7 348.6L564.4 363.4 579.8 359.8 576.2 345.2z" fill="#5c6671"/><path d="M572.2 346.1L575.8 360.7 591.2 357.1 587.7 342.7z" fill="#5e6873"/><path d="M583.7 343.6L587.2 358.0 602.6 354.4 599.2 340.2z" fill="#5f6a75"/><path d="M595.2 341.1L598.7 355.4 614.1 351.8 610.7 337.7z" fill="#616b76"/><path d="M606.7 338.6L610.1 352.7 625.5 349.1 622.2 335.3z" fill="#626c78"/><path d="M618.2 336.1L621.5 350.0 636.9 346.4 633.7 332.8z" fill="#626c77"/><path d="M629.7 333.6L632.9 347.4 648.3 343.8 645.2 330.3z" fill="#626c77"/><path d="M641.2 331.1L644.3 344.7 659.7 341.1 656.7 327.8z" fill="#626c77"/><path d="M652.7 328.6L655.7 342.0 667.1 339.4 664.2 326.2z" fill="#626c77"/><path d="M529.2 367.4L533.3 382.6 548.6 378.9 544.6 363.8z" fill="#4e5761"/><path d="M540.6 364.8L544.6 379.8 560.0 376.1 556.0 361.2z" fill="#545e68"/><path d="M552.0 362.1L556.0 377.0 571.3 373.3 567.5 358.6z" fill="#58626d"/><path d="M563.5 359.5L567.3 374.3 582.6 370.5 578.9 356.0z" fill="#5c6772"/><path d="M574.9 356.9L578.7 371.5 594.0 367.7 590.3 353.4z" fill="#5e6974"/><path d="M586.3 354.3L590.0 368.7 605.3 364.9 601.8 350.7z" fill="#606a75"/><path d="M597.8 351.7L601.4 365.9 616.7 362.1 613.2 348.1z" fill="#616c77"/><path d="M609.2 349.0L612.7 363.1 628.0 359.3 624.6 345.5z" fill="#626d78"/><path d="M620.6 346.4L624.0 360.3 639.3 356.5 636.0 342.9z" fill="#626d78"/><path d="M632.0 343.8L635.4 357.5 650.7 353.7 647.5 340.3z" fill="#626d78"/><path d="M643.5 341.2L646.7 354.7 662.0 351.0 658.9 337.7z" fill="#626d78"/><path d="M654.9 338.6L658.1 351.9 669.4 349.1 666.3 336.0z" fill="#636c78"/><path d="M532.2 378.7L536.5 393.9 551.7 389.9 547.6 375.0z" fill="#4e5861"/><path d="M543.6 375.9L547.8 391.0 563.0 387.0 558.9 372.2z" fill="#545f69"/><path d="M555.0 373.2L559.1 388.0 574.3 384.1 570.3 369.5z" fill="#58636d"/><path d="M566.3 370.4L570.3 385.1 585.6 381.2 581.7 366.7z" fill="#5c6772"/><path d="M577.7 367.7L581.6 382.2 596.8 378.3 593.0 364.0z" fill="#5e6974"/><path d="M589.1 364.9L592.9 379.3 608.1 375.4 604.4 361.2z" fill="#606b76"/><path d="M600.4 362.2L604.2 376.4 619.4 372.4 615.8 358.5z" fill="#616c78"/><path d="M611.8 359.5L615.4 373.5 630.6 369.5 627.1 355.7z" fill="#636e79"/><path d="M623.1 356.7L626.7 370.5 641.9 366.6 638.5 353.0z" fill="#636d79"/><path d="M634.5 354.0L638.0 367.6 653.2 363.7 649.9 350.3z" fill="#636d79"/><path d="M645.9 351.2L649.2 364.7 664.5 360.8 661.2 347.5z" fill="#636d78"/><path d="M657.2 348.5L660.5 361.8 671.8 358.9 668.6 345.7z" fill="#636d78"/><path d="M535.4 389.9L539.7 404.6 554.8 400.6 550.7 386.1z" fill="#4e5862"/><path d="M546.7 387.1L550.9 401.6 566.1 397.7 562.0 383.2z" fill="#545f6a"/><path d="M558.0 384.2L562.1 398.7 577.3 394.7 573.3 380.3z" fill="#58646e"/><path d="M569.3 381.3L573.4 395.7 588.5 391.7 584.5 377.4z" fill="#5c6873"/><path d="M580.6 378.4L584.6 392.8 599.7 388.8 595.8 374.6z" fill="#5e6a75"/><path d="M591.9 375.6L595.8 389.8 611.0 385.8 607.1 371.7z" fill="#606b77"/><path d="M603.2 372.7L607.0 386.9 622.2 382.9 618.4 368.8z" fill="#626d79"/><path d="M614.5 369.8L618.3 383.9 633.4 379.9 629.7 366.0z" fill="#636e7a"/><path d="M625.8 367.0L629.5 380.9 644.7 376.9 641.0 363.1z" fill="#636e7a"/><path d="M637.1 364.1L640.7 378.0 655.9 374.0 652.3 360.2z" fill="#636e79"/><path d="M648.4 361.2L651.9 375.0 667.1 371.0 663.6 357.3z" fill="#636e79"/><path d="M659.7 358.3L663.2 372.1 674.4 369.1 671.0 355.5z" fill="#636e79"/><path d="M538.6 400.8L542.8 414.9 557.9 410.9 553.8 396.8z" fill="#4e5963"/><path d="M549.8 397.9L554.0 412.0 569.1 408.0 565.0 393.9z" fill="#54606b"/><path d="M561.1 394.9L565.2 409.0 580.3 405.1 576.2 391.0z" fill="#59646f"/><path d="M572.3 392.0L576.4 406.1 591.5 402.1 587.5 388.0z" fill="#5d6974"/><path d="M583.6 389.1L587.6 403.2 602.7 399.2 598.7 385.1z" fill="#5f6a76"/><path d="M594.8 386.1L598.8 400.2 613.9 396.3 610.0 382.2z" fill="#606c77"/><path d="M606.0 383.2L610.0 397.3 625.1 393.3 621.2 379.2z" fill="#626e79"/><path d="M617.3 380.3L621.2 394.4 636.3 390.4 632.5 376.3z" fill="#636f7a"/><path d="M628.5 377.3L632.4 391.4 647.5 387.5 643.7 373.4z" fill="#636f7a"/><path d="M639.8 374.4L643.6 388.5 658.7 384.5 655.0 370.4z" fill="#636e7a"/><path d="M651.0 371.4L654.8 385.6 669.9 381.6 666.2 367.5z" fill="#636e7a"/><path d="M662.3 368.5L666.0 382.6 677.2 379.7 673.5 365.6z" fill="#636e7a"/><path d="M541.7 411.2L546.4 426.3 561.4 422.2 556.8 407.3z" fill="#4e5963"/><path d="M552.9 408.3L557.5 423.2 572.5 419.0 568.1 404.4z" fill="#55606b"/><path d="M564.1 405.4L568.6 420.1 583.6 415.9 579.3 401.4z" fill="#596570"/><path d="M575.3 402.4L579.7 417.0 594.7 412.8 590.5 398.5z" fill="#5d6a75"/><path d="M586.6 399.5L590.9 413.9 605.9 409.7 601.7 395.6z" fill="#5f6b77"/><path d="M597.8 396.6L602.0 410.8 617.0 406.6 612.9 392.6z" fill="#616d79"/><path d="M609.0 393.6L613.1 407.7 628.1 403.5 624.1 389.7z" fill="#626e7a"/><path d="M620.2 390.7L624.2 404.6 639.2 400.4 635.3 386.8z" fill="#636f7b"/><path d="M631.4 387.8L635.3 401.5 650.3 397.3 646.5 383.8z" fill="#646f7b"/><path d="M642.6 384.8L646.4 398.4 661.5 394.2 657.8 380.9z" fill="#646f7b"/><path d="M653.8 381.9L657.6 395.3 672.6 391.1 669.0 378.0z" fill="#646f7b"/><path d="M665.0 379.0L668.7 392.2 679.8 389.1 676.3 376.0z" fill="#646f7b"/><path d="M545.2 422.4L550.0 437.5 564.9 433.1 560.2 418.3z" fill="#4d5963"/><path d="M556.3 419.4L561.0 434.3 575.9 429.9 571.4 415.2z" fill="#54616c"/><path d="M567.5 416.3L572.1 431.0 587.0 426.7 582.5 412.2z" fill="#596671"/><path d="M578.6 413.3L583.1 427.8 598.0 423.4 593.6 409.1z" fill="#5d6a76"/><path d="M589.7 410.2L594.2 424.6 609.1 420.2 604.8 406.1z" fill="#5f6c78"/><path d="M600.9 407.1L605.2 421.3 620.1 417.0 615.9 403.0z" fill="#616e7a"/><path d="M612.0 404.1L616.3 418.1 631.2 413.8 627.1 399.9z" fill="#636f7b"/><path d="M623.2 401.0L627.3 414.9 642.2 410.5 638.2 396.9z" fill="#64707c"/><path d="M634.3 398.0L638.3 411.7 653.3 407.3 649.4 393.8z" fill="#64707c"/><path d="M645.5 394.9L649.4 408.4 664.3 404.1 660.5 390.8z" fill="#64707c"/><path d="M656.6 391.8L660.4 405.2 675.4 400.9 671.6 387.7z" fill="#64707b"/><path d="M667.7 388.8L671.5 402.0 682.5 398.8 678.9 385.7z" fill="#64707b"/><path d="M548.7 433.6L553.6 448.6 568.4 444.1 563.7 429.3z" fill="#4d5963"/><path d="M559.8 430.4L564.6 445.2 579.4 440.7 574.7 426.1z" fill="#54616c"/><path d="M570.9 427.2L575.6 441.9 590.4 437.4 585.8 422.9z" fill="#596672"/><path d="M581.9 424.0L586.6 438.5 601.4 434.0 596.9 419.7z" fill="#5e6b77"/><path d="M593.0 420.8L597.5 435.2 612.4 430.7 608.0 416.5z" fill="#606d79"/><path d="M604.1 417.7L608.5 431.8 623.3 427.3 619.0 413.4z" fill="#626f7b"/><path d="M615.2 414.5L619.5 428.5 634.3 424.0 630.1 410.2z" fill="#63707d"/><path d="M626.2 411.3L630.5 425.1 645.3 420.6 641.2 407.0z" fill="#64717e"/><path d="M637.3 408.1L641.4 421.8 656.3 417.3 652.2 403.8z" fill="#64717d"/><path d="M648.4 404.9L652.4 418.4 667.2 413.9 663.3 400.6z" fill="#64707c"/><path d="M659.4 401.8L663.4 415.1 678.2 410.6 674.4 397.5z" fill="#64707c"/><path d="M670.5 398.6L674.4 411.7 685.4 408.4 681.6 395.4z" fill="#64707c"/><path d="M552.4 444.7L556.9 458.2 571.7 453.8 567.2 440.2z" fill="#4b5863"/><path d="M563.4 441.4L567.8 455.0 582.7 450.6 578.2 436.9z" fill="#54616c"/><path d="M574.4 438.1L578.8 451.7 593.7 447.4 589.2 433.6z" fill="#596672"/><path d="M585.4 434.8L589.8 448.5 604.7 444.2 600.2 430.3z" fill="#5e6c78"/><path d="M596.4 431.5L600.8 445.3 615.6 440.9 611.2 427.0z" fill="#606e7a"/><path d="M607.4 428.2L611.8 442.1 626.6 437.7 622.2 423.7z" fill="#62707c"/><path d="M618.4 424.9L622.8 438.8 637.6 434.5 633.2 420.4z" fill="#64717e"/><path d="M629.4 421.6L633.8 435.6 648.6 431.3 644.2 417.1z" fill="#65727f"/><path d="M640.4 418.2L644.8 432.4 659.6 428.1 655.2 413.8z" fill="#65727e"/><path d="M651.4 414.9L655.7 429.2 670.6 424.8 666.2 410.5z" fill="#65717e"/><path d="M662.4 411.6L666.7 426.0 681.6 421.6 677.2 407.2z" fill="#65717d"/><path d="M673.4 408.3L677.7 422.7 688.7 419.5 684.4 405.0z" fill="#65717d"/><path d="M555.7 454.7L560.8 469.6 575.5 465.0 570.5 450.3z" fill="#4a5863"/><path d="M566.7 451.4L571.7 466.2 586.4 461.6 581.5 447.1z" fill="#53616d"/><path d="M577.7 448.2L582.6 462.8 597.3 458.2 592.5 443.8z" fill="#596773"/><path d="M588.7 445.0L593.5 459.4 608.2 454.8 603.5 440.6z" fill="#5e6c79"/><path d="M599.7 441.7L604.4 456.0 619.1 451.4 614.5 437.3z" fill="#606f7b"/><path d="M610.6 438.5L615.3 452.6 630.0 448.0 625.5 434.1z" fill="#62717d"/><path d="M621.6 435.2L626.2 449.2 640.9 444.6 636.5 430.8z" fill="#64727f"/><path d="M632.6 432.0L637.1 445.8 651.8 441.2 647.5 427.6z" fill="#667380"/><path d="M643.6 428.7L648.0 442.4 662.7 437.7 658.5 424.4z" fill="#657380"/><path d="M654.6 425.5L658.9 438.9 673.6 434.3 669.4 421.1z" fill="#65737f"/><path d="M665.6 422.2L669.8 435.5 684.5 430.9 680.4 417.9z" fill="#65727f"/><path d="M676.6 419.0L680.7 432.1 691.5 428.7 687.6 415.8z" fill="#65727e"/><path d="M559.5 465.8L564.7 480.7 579.3 475.9 574.2 461.2z" fill="#485763"/><path d="M570.4 462.4L575.5 477.1 590.1 472.4 585.1 457.8z" fill="#51616e"/><path d="M581.3 459.0L586.3 473.6 600.9 468.8 596.1 454.5z" fill="#576774"/><path d="M592.2 455.7L597.1 470.1 611.8 465.3 607.0 451.1z" fill="#5e6d7a"/><path d="M603.2 452.3L608.0 466.5 622.6 461.8 617.9 447.7z" fill="#61707d"/><path d="M614.1 448.9L618.8 463.0 633.4 458.2 628.8 444.4z" fill="#63727f"/><path d="M625.0 445.6L629.6 459.5 644.2 454.7 639.7 441.0z" fill="#657381"/><path d="M635.9 442.2L640.4 455.9 655.1 451.2 650.7 437.6z" fill="#667582"/><path d="M646.8 438.8L651.3 452.4 665.9 447.6 661.6 434.3z" fill="#667481"/><path d="M657.8 435.5L662.1 448.9 676.7 444.1 672.5 430.9z" fill="#667481"/><path d="M668.7 432.1L672.9 445.3 687.5 440.6 683.4 427.5z" fill="#667380"/><path d="M679.6 428.7L683.8 441.8 694.6 438.3 690.5 425.4z" fill="#66737f"/><path d="M563.3 476.8L568.5 491.3 583.0 486.5 578.0 472.1z" fill="#465664"/><path d="M574.2 473.3L579.3 487.7 593.8 482.9 588.8 468.6z" fill="#50616e"/><path d="M585.0 469.8L590.0 484.1 604.6 479.3 599.7 465.1z" fill="#566775"/><path d="M595.9 466.3L600.8 480.5 615.4 475.7 610.5 461.6z" fill="#5c6d7c"/><path d="M606.7 462.8L611.6 477.0 626.1 472.1 621.4 458.1z" fill="#60707e"/><path d="M617.6 459.4L622.4 473.4 636.9 468.5 632.2 454.6z" fill="#637280"/><path d="M628.4 455.9L633.1 469.8 647.7 464.9 643.1 451.2z" fill="#657482"/><path d="M639.3 452.4L643.9 466.2 658.5 461.3 653.9 447.7z" fill="#677683"/><path d="M650.1 448.9L654.7 462.6 669.2 457.7 664.8 444.2z" fill="#677583"/><path d="M661.0 445.4L665.5 459.0 680.0 454.1 675.6 440.7z" fill="#677582"/><path d="M671.8 441.9L676.2 455.4 690.8 450.5 686.5 437.2z" fill="#677582"/><path d="M682.7 438.4L687.0 451.8 697.8 448.2 693.5 434.9z" fill="#677481"/><path d="M567.1 487.6L572.1 501.3 586.6 496.5 581.7 482.8z" fill="#455664"/><path d="M577.9 484.0L582.9 497.7 597.4 492.9 592.5 479.2z" fill="#4e606f"/><path d="M588.7 480.4L593.6 494.2 608.2 489.4 603.3 475.6z" fill="#556776"/><path d="M599.5 476.9L604.4 490.6 619.0 485.9 614.1 472.0z" fill="#5b6e7d"/><path d="M610.3 473.3L615.2 487.1 629.7 482.3 624.9 468.5z" fill="#5f7180"/><path d="M621.1 469.7L625.9 483.6 640.5 478.8 635.7 464.9z" fill="#627382"/><path d="M631.9 466.2L636.7 480.0 651.3 475.2 646.5 461.3z" fill="#667683"/><path d="M642.7 462.6L647.5 476.5 662.0 471.7 657.3 457.8z" fill="#677785"/><path d="M653.5 459.0L658.3 472.9 672.8 468.1 668.1 454.2z" fill="#677784"/><path d="M664.3 455.4L669.0 469.4 683.6 464.6 678.9 450.6z" fill="#677684"/><path d="M675.1 451.9L679.8 465.8 694.3 461.1 689.7 447.1z" fill="#677683"/><path d="M685.9 448.3L690.6 462.3 701.3 458.7 696.7 444.7z" fill="#677583"/><path d="M570.8 497.7L576.3 512.5 590.7 507.5 585.4 492.9z" fill="#435564"/><path d="M581.6 494.2L587.0 508.8 601.4 503.8 596.1 489.4z" fill="#4c6070"/><path d="M592.4 490.6L597.7 505.1 612.1 500.1 606.9 485.8z" fill="#536777"/><path d="M603.1 487.1L608.4 501.4 622.8 496.4 617.7 482.3z" fill="#5a6e7e"/><path d="M613.9 483.5L619.0 497.7 633.4 492.7 628.5 478.7z" fill="#5e7181"/><path d="M624.7 480.0L629.7 494.0 644.1 488.9 639.2 475.2z" fill="#617483"/><path d="M635.5 476.4L640.4 490.2 654.8 485.2 650.0 471.6z" fill="#647685"/><path d="M646.2 472.9L651.1 486.5 665.5 481.5 660.8 468.1z" fill="#677886"/><path d="M657.0 469.3L661.7 482.8 676.2 477.8 671.6 464.5z" fill="#687886"/><path d="M667.8 465.8L672.4 479.1 686.8 474.1 682.3 461.0z" fill="#687785"/><path d="M678.6 462.2L683.1 475.4 697.5 470.4 693.1 457.4z" fill="#687785"/><path d="M689.3 458.7L693.8 471.7 704.5 467.9 700.1 455.1z" fill="#687784"/><path d="M574.9 508.7L580.5 523.5 594.8 518.3 589.3 503.7z" fill="#415564"/><path d="M585.6 505.0L591.1 519.6 605.4 514.4 600.0 500.1z" fill="#4b6070"/><path d="M596.3 501.3L601.7 515.8 616.0 510.6 610.7 496.4z" fill="#526778"/><path d="M607.0 497.7L612.3 511.9 626.6 506.8 621.5 492.7z" fill="#596e80"/><path d="M617.7 494.0L622.9 508.1 637.2 502.9 632.2 489.0z" fill="#5c7183"/><path d="M628.4 490.3L633.5 504.3 647.9 499.1 642.9 485.4z" fill="#607485"/><path d="M639.1 486.7L644.1 500.4 658.5 495.3 653.6 481.7z" fill="#637787"/><path d="M649.8 483.0L654.7 496.6 669.1 491.4 664.3 478.0z" fill="#667988"/><path d="M660.5 479.3L665.4 492.8 679.7 487.6 675.0 474.3z" fill="#677987"/><path d="M671.2 475.6L676.0 488.9 690.3 483.7 685.7 470.7z" fill="#687987"/><path d="M681.9 472.0L686.6 485.1 700.9 479.9 696.4 467.0z" fill="#687886"/><path d="M692.6 468.3L697.2 481.2 707.8 477.4 703.3 464.6z" fill="#687886"/><path d="M579.0 519.6L584.7 534.1 598.9 528.8 593.4 514.5z" fill="#405464"/><path d="M589.7 515.8L595.2 530.2 609.5 524.9 604.0 510.7z" fill="#496071"/><path d="M600.3 512.0L605.8 526.3 620.0 521.0 614.7 506.9z" fill="#506779"/><path d="M610.9 508.2L616.3 522.3 630.6 517.1 625.3 503.1z" fill="#576f81"/><path d="M621.6 504.5L626.9 518.4 641.1 513.1 635.9 499.3z" fill="#5b7284"/><path d="M632.2 500.7L637.4 514.5 651.7 509.2 646.6 495.5z" fill="#5f7587"/><path d="M642.8 496.9L648.0 510.6 662.2 505.3 657.2 491.7z" fill="#627889"/><path d="M653.5 493.1L658.5 506.7 672.8 501.4 667.8 487.9z" fill="#65798a"/><path d="M664.1 489.3L669.1 502.8 683.3 497.5 678.5 484.1z" fill="#66798a"/><path d="M674.7 485.5L679.6 498.9 693.9 493.6 689.1 480.4z" fill="#687989"/><path d="M685.4 481.7L690.2 495.0 704.4 489.7 699.7 476.6z" fill="#697988"/><path d="M696.0 477.9L700.7 491.0 711.3 487.1 706.6 474.1z" fill="#697987"/><path d="M583.2 530.3L588.6 543.8 602.8 538.6 597.5 525.1z" fill="#3d5263"/><path d="M593.8 526.5L599.1 540.0 613.4 534.8 608.1 521.2z" fill="#485f72"/><path d="M604.4 522.6L609.7 536.1 623.9 530.9 618.6 517.3z" fill="#4f677a"/><path d="M614.9 518.7L620.2 532.3 634.5 527.1 629.2 513.4z" fill="#566f83"/><path d="M625.5 514.8L630.8 528.4 645.0 523.2 639.8 509.6z" fill="#5a7286"/><path d="M636.1 510.9L641.3 524.6 655.6 519.4 650.3 505.7z" fill="#5d7588"/><path d="M646.6 507.0L651.9 520.7 666.1 515.5 660.9 501.8z" fill="#61788b"/><path d="M657.2 503.2L662.4 516.9 676.7 511.7 671.5 497.9z" fill="#647a8c"/><path d="M667.8 499.3L673.0 513.1 687.2 507.9 682.1 494.0z" fill="#657a8c"/><path d="M678.4 495.4L683.5 509.2 697.8 504.0 692.6 490.2z" fill="#667a8b"/><path d="M688.9 491.5L694.1 505.4 708.3 500.2 703.2 486.3z" fill="#687a8a"/><path d="M699.5 487.6L704.6 501.5 715.2 497.7 710.1 483.7z" fill="#697a89"/><path d="M587.2 540.3L593.2 554.9 607.3 549.5 601.4 535.1z" fill="#3a5062"/><path d="M597.7 536.5L603.6 550.9 617.7 545.5 612.0 531.3z" fill="#455e71"/><path d="M608.3 532.6L614.1 546.9 628.2 541.5 622.6 527.4z" fill="#4d677b"/><path d="M618.9 528.7L624.5 542.9 638.7 537.5 633.1 523.5z" fill="#556f84"/><path d="M629.4 524.9L635.0 538.9 649.1 533.4 643.7 519.7z" fill="#597387"/><path d="M640.0 521.0L645.5 534.8 659.6 529.4 654.2 515.8z" fill="#5c768a"/><path d="M650.5 517.2L655.9 530.8 670.0 525.4 664.8 512.0z" fill="#60798d"/><path d="M661.1 513.3L666.4 526.8 680.5 521.4 675.3 508.1z" fill="#637b8e"/><path d="M671.6 509.5L676.8 522.8 690.9 517.4 685.9 504.3z" fill="#647b8e"/><path d="M682.2 505.6L687.3 518.8 701.4 513.4 696.4 500.4z" fill="#657b8d"/><path d="M692.7 501.8L697.7 514.8 711.9 509.3 707.0 496.6z" fill="#677b8c"/><path d="M703.3 497.9L708.2 510.7 718.7 506.7 713.9 494.1z" fill="#687b8b"/><path d="M591.6 551.1L597.7 565.7 611.8 560.1 605.8 545.8z" fill="#374e61"/><path d="M602.1 547.2L608.1 561.6 622.1 556.0 616.3 541.8z" fill="#425c70"/><path d="M612.6 543.2L618.5 557.4 632.5 551.8 626.7 537.8z" fill="#4a657a"/><path d="M623.1 539.2L628.9 553.3 642.9 547.7 637.2 533.9z" fill="#536f85"/><path d="M633.6 535.2L639.3 549.2 653.3 543.6 647.7 529.9z" fill="#577389"/><path d="M644.0 531.3L649.7 545.0 663.7 539.4 658.2 525.9z" fill="#5b768c"/><path d="M654.5 527.3L660.0 540.9 674.1 535.3 668.7 521.9z" fill="#5f7a8f"/><path d="M665.0 523.3L670.4 536.7 684.4 531.2 679.1 518.0z" fill="#627c90"/><path d="M675.5 519.3L680.8 532.6 694.8 527.0 689.6 514.0z" fill="#637c90"/><path d="M686.0 515.4L691.2 528.5 705.2 522.9 700.1 510.0z" fill="#647c8f"/><path d="M696.4 511.4L701.6 524.3 715.6 518.7 710.6 506.0z" fill="#667c8e"/><path d="M706.9 507.4L712.0 520.2 722.3 516.1 717.4 503.4z" fill="#677c8d"/><path d="M596.2 561.9L602.4 576.4 616.3 570.7 610.2 556.4z" fill="#344c5f"/><path d="M606.6 557.8L612.7 572.2 626.7 566.4 620.6 552.3z" fill="#3f5a6f"/><path d="M617.0 553.7L623.0 567.9 637.0 562.2 631.0 548.2z" fill="#47647a"/><path d="M627.4 549.6L633.4 563.7 647.3 557.9 641.4 544.1z" fill="#4f6d84"/><path d="M637.8 545.5L643.7 559.4 657.6 553.7 651.8 540.0z" fill="#557289"/><path d="M648.2 541.5L654.0 555.1 667.9 549.4 662.3 535.9z" fill="#5a778e"/><path d="M658.6 537.4L664.3 550.9 678.2 545.1 672.7 531.8z" fill="#5d7a91"/><path d="M669.0 533.3L674.6 546.6 688.5 540.9 683.1 527.7z" fill="#607c92"/><path d="M679.4 529.2L684.9 542.4 698.8 536.6 693.5 523.6z" fill="#627c92"/><path d="M689.8 525.1L695.2 538.1 709.1 532.4 703.9 519.5z" fill="#637d91"/><path d="M700.2 521.0L705.5 533.9 719.4 528.1 714.3 515.4z" fill="#647d90"/><path d="M710.6 516.9L715.8 529.6 726.1 525.3 721.1 512.8z" fill="#667d8f"/><path d="M600.8 572.7L607.2 587.1 621.0 581.2 614.8 567.0z" fill="#314a5e"/><path d="M611.1 568.4L617.5 582.7 631.3 576.8 625.1 562.8z" fill="#3c586e"/><path d="M621.5 564.2L627.7 578.3 641.5 572.4 635.4 558.5z" fill="#446279"/><path d="M631.8 560.0L637.9 574.0 651.7 568.1 645.8 554.3z" fill="#4c6c84"/><path d="M642.1 555.8L648.2 569.6 662.0 563.7 656.1 550.1z" fill="#527189"/><path d="M652.5 551.6L658.4 565.2 672.2 559.3 666.4 545.9z" fill="#57768e"/><path d="M662.8 547.4L668.6 560.8 682.4 554.9 676.8 541.7z" fill="#5c7b92"/><path d="M673.1 543.2L678.9 556.5 692.7 550.6 687.1 537.5z" fill="#5f7d94"/><path d="M683.5 538.9L689.1 552.1 702.9 546.2 697.4 533.3z" fill="#617d94"/><path d="M693.8 534.7L699.3 547.7 713.1 541.8 707.8 529.0z" fill="#627d93"/><path d="M704.1 530.5L709.6 543.3 723.4 537.4 718.1 524.8z" fill="#637d92"/><path d="M714.5 526.3L719.8 539.0 730.0 534.6 724.8 522.1z" fill="#657d91"/><path d="M605.6 583.4L612.2 597.7 625.9 591.6 619.4 577.5z" fill="#2f485d"/><path d="M615.8 579.0L622.3 593.2 636.0 587.1 629.7 573.2z" fill="#39566e"/><path d="M626.1 574.7L632.5 588.7 646.2 582.7 639.9 568.8z" fill="#416079"/><path d="M636.3 570.4L642.6 584.2 656.3 578.2 650.2 564.5z" fill="#496a84"/><path d="M646.6 566.0L652.8 579.7 666.5 573.7 660.4 560.2z" fill="#4e6f89"/><path d="M656.9 561.7L662.9 575.2 676.7 569.2 670.7 555.8z" fill="#54748e"/><path d="M667.1 557.4L673.1 570.7 686.8 564.7 681.0 551.5z" fill="#597992"/><path d="M677.4 553.0L683.3 566.3 697.0 560.2 691.2 547.2z" fill="#5d7d96"/><path d="M687.6 548.7L693.4 561.8 707.1 555.7 701.5 542.8z" fill="#607e96"/><path d="M697.9 544.3L703.6 557.3 717.3 551.2 711.7 538.5z" fill="#617e95"/><path d="M708.2 540.0L713.7 552.8 727.4 546.7 722.0 534.2z" fill="#627e94"/><path d="M718.4 535.7L723.9 548.3 734.0 543.8 728.7 531.3z" fill="#647e93"/><path d="M610.4 594.0L617.2 608.3 630.8 602.0 624.2 588.0z" fill="#2c465c"/><path d="M620.6 589.5L627.3 603.6 640.9 597.4 634.4 583.5z" fill="#36556d"/><path d="M630.8 585.1L637.4 599.0 651.0 592.8 644.6 579.1z" fill="#3e5e78"/><path d="M641.0 580.6L647.4 594.4 661.1 588.2 654.7 574.6z" fill="#466884"/><path d="M651.2 576.2L657.5 589.8 671.1 583.6 664.9 570.2z" fill="#4b6e89"/><path d="M661.4 571.7L667.6 585.2 681.2 579.0 675.1 565.7z" fill="#50738e"/><path d="M671.5 567.3L677.7 580.6 691.3 574.4 685.3 561.3z" fill="#557893"/><path d="M681.7 562.8L687.8 576.0 701.4 569.8 695.5 556.8z" fill="#5a7c96"/><path d="M691.9 558.4L697.9 571.4 711.5 565.1 705.7 552.4z" fill="#5d7d97"/><path d="M702.1 553.9L707.9 566.8 721.5 560.5 715.8 547.9z" fill="#607f97"/><path d="M712.3 549.5L718.0 562.1 731.6 555.9 726.0 543.5z" fill="#617f96"/><path d="M722.5 545.0L728.1 557.5 738.2 552.9 732.6 540.6z" fill="#637f96"/><path d="M615.5 604.6L622.4 618.7 635.9 612.4 629.1 598.4z" fill="#29455a"/><path d="M625.6 600.0L632.4 614.0 645.9 607.6 639.2 593.8z" fill="#33536c"/><path d="M635.7 595.4L642.4 609.3 655.9 602.9 649.3 589.2z" fill="#3b5d78"/><path d="M645.8 590.8L652.4 604.6 665.9 598.2 659.4 584.7z" fill="#436783"/><path d="M655.9 586.3L662.4 599.8 675.9 593.4 669.5 580.1z" fill="#486c89"/><path d="M666.0 581.7L672.4 595.1 685.9 588.7 679.6 575.5z" fill="#4d718e"/><path d="M676.1 577.1L682.4 590.4 695.9 584.0 689.7 571.0z" fill="#527693"/><path d="M686.2 572.6L692.4 585.6 705.9 579.3 699.9 566.4z" fill="#577a96"/><path d="M696.3 568.0L702.4 580.9 715.9 574.5 710.0 561.8z" fill="#5a7c97"/><path d="M706.4 563.4L712.4 576.2 725.9 569.8 720.1 557.3z" fill="#5d7e98"/><path d="M716.5 558.9L722.4 571.5 735.9 565.1 730.2 552.7z" fill="#608098"/><path d="M726.6 554.3L732.4 566.7 742.4 562.0 736.7 549.7z" fill="#618098"/><path d="M620.6 615.1L627.7 629.2 641.1 622.6 634.1 608.7z" fill="#274359"/><path d="M630.6 610.4L637.6 624.3 651.0 617.8 644.2 604.1z" fill="#30516b"/><path d="M640.7 605.7L647.6 619.5 661.0 612.9 654.2 599.4z" fill="#385b77"/><path d="M650.7 601.0L657.5 614.6 670.9 608.1 664.2 594.7z" fill="#406583"/><path d="M660.7 596.3L667.4 609.8 680.8 603.2 674.3 590.0z" fill="#456b89"/><path d="M670.7 591.6L677.4 604.9 690.8 598.4 684.3 585.3z" fill="#4a708e"/><path d="M680.8 586.9L687.3 600.1 700.7 593.5 694.3 580.6z" fill="#4f7593"/><path d="M690.8 582.3L697.2 595.2 710.6 588.7 704.4 575.9z" fill="#547996"/><path d="M700.8 577.6L707.1 590.4 720.5 583.9 714.4 571.2z" fill="#567b97"/><path d="M710.9 572.9L717.1 585.6 730.5 579.0 724.4 566.5z" fill="#597c98"/><path d="M720.9 568.2L727.0 580.7 740.4 574.2 734.4 561.9z" fill="#5c7e98"/><path d="M730.9 563.5L736.9 575.9 746.8 571.0 741.0 558.8z" fill="#608099"/><path d="M625.9 625.5L633.9 640.9 647.1 633.9 639.3 619.0z" fill="#244158"/><path d="M635.8 620.7L643.6 635.7 656.8 628.7 649.3 614.2z" fill="#2e4f6a"/><path d="M645.8 615.9L653.4 630.5 666.5 623.5 659.2 609.4z" fill="#355a77"/><path d="M655.7 611.1L663.1 625.3 676.2 618.3 669.2 604.6z" fill="#3d6483"/><path d="M665.7 606.3L672.8 620.1 686.0 613.1 679.1 599.8z" fill="#426989"/><path d="M675.6 601.5L682.6 614.9 695.7 607.9 689.1 595.0z" fill="#476e8e"/><path d="M685.6 596.7L692.3 609.7 705.4 602.7 699.0 590.2z" fill="#4c7393"/><path d="M695.5 591.9L702.0 604.5 715.2 597.5 709.0 585.4z" fill="#507897"/><path d="M705.5 587.1L711.8 599.3 724.9 592.3 718.9 580.6z" fill="#537997"/><path d="M715.5 582.3L721.5 594.1 734.6 587.1 728.9 575.8z" fill="#567b98"/><path d="M725.4 577.5L731.2 588.9 744.3 581.9 738.9 571.0z" fill="#597d99"/><path d="M735.4 572.7L740.9 583.7 750.7 578.5 745.3 567.9z" fill="#5c7f99"/><path d="M631.8 636.9L639.4 650.8 652.4 643.7 645.0 630.0z" fill="#223f56"/><path d="M641.6 631.8L649.0 645.6 662.1 638.5 654.8 624.9z" fill="#2b4e69"/><path d="M651.4 626.7L658.7 640.3 671.8 633.2 664.6 619.9z" fill="#325876"/><path d="M661.2 621.6L668.4 635.1 681.5 628.0 674.4 614.8z" fill="#3a6283"/><path d="M671.0 616.5L678.1 629.8 691.1 622.7 684.2 609.7z" fill="#3f6889"/><path d="M680.8 611.4L687.8 624.6 700.8 617.5 694.0 604.6z" fill="#436d8e"/><path d="M690.6 606.3L697.4 619.3 710.5 612.2 703.8 599.5z" fill="#487293"/><path d="M700.3 601.3L707.1 614.0 720.2 607.0 713.6 594.4z" fill="#4d7697"/><path d="M710.1 596.2L716.8 608.8 729.9 601.7 723.3 589.3z" fill="#507898"/><path d="M719.9 591.1L726.5 603.5 739.6 596.5 733.1 584.2z" fill="#537a98"/><path d="M729.7 586.0L736.2 598.3 749.2 591.2 742.9 579.1z" fill="#567b99"/><path d="M739.5 580.9L745.8 593.0 755.5 587.8 749.3 575.8z" fill="#597d9a"/><path d="M637.4 647.2L645.1 661.0 658.1 653.7 650.5 640.2z" fill="#203d54"/><path d="M647.1 642.0L654.7 655.6 667.7 648.4 660.2 635.0z" fill="#294c68"/><path d="M656.8 636.8L664.3 650.2 677.3 643.0 669.9 629.8z" fill="#2f5675"/><path d="M666.5 631.6L673.9 644.9 686.9 637.6 679.6 624.5z" fill="#376182"/><path d="M676.2 626.4L683.5 639.5 696.5 632.3 689.3 619.3z" fill="#3c6688"/><path d="M685.9 621.2L693.1 634.1 706.1 626.9 699.1 614.1z" fill="#406b8e"/><path d="M695.7 615.9L702.7 628.8 715.7 621.5 708.8 608.9z" fill="#457193"/><path d="M705.4 610.7L712.3 623.4 725.3 616.2 718.5 603.7z" fill="#4a7597"/><path d="M715.1 605.5L721.9 618.0 734.9 610.8 728.2 598.5z" fill="#4d7798"/><path d="M724.8 600.3L731.5 612.7 744.5 605.4 737.9 593.3z" fill="#4f7898"/><path d="M734.5 595.1L741.1 607.3 754.1 600.1 747.6 588.1z" fill="#527a99"/><path d="M744.2 589.9L750.8 601.9 760.4 596.6 753.9 584.7z" fill="#567c9a"/><path d="M643.1 657.4L651.1 671.1 663.9 663.7 656.1 650.2z" fill="#1e3b52"/><path d="M652.8 652.1L660.6 665.6 673.4 658.2 665.8 644.9z" fill="#264a66"/><path d="M662.4 646.8L670.1 660.1 683.0 652.7 675.4 639.6z" fill="#2d5474"/><path d="M672.0 641.4L679.6 654.6 692.5 647.2 685.0 634.2z" fill="#345f82"/><path d="M681.6 636.1L689.2 649.1 702.0 641.7 694.6 628.9z" fill="#386588"/><path d="M691.3 630.8L698.7 643.7 711.5 636.3 704.3 623.6z" fill="#3d6a8e"/><path d="M700.9 625.5L708.2 638.2 721.1 630.8 713.9 618.3z" fill="#426f93"/><path d="M710.5 620.1L717.7 632.7 730.6 625.3 723.5 612.9z" fill="#467397"/><path d="M720.2 614.8L727.2 627.2 740.1 619.8 733.2 607.6z" fill="#497598"/><path d="M729.8 609.5L736.8 621.7 749.6 614.3 742.8 602.3z" fill="#4c7799"/><path d="M739.4 604.1L746.3 616.2 759.1 608.8 752.4 597.0z" fill="#4f7999"/><path d="M749.1 598.8L755.8 610.8 765.3 605.3 758.7 593.5z" fill="#527a9a"/><path d="M649.0 667.5L658.0 682.4 670.6 674.5 661.9 660.2z" fill="#1c3850"/><path d="M658.6 662.1L667.3 676.6 679.9 668.7 671.5 654.7z" fill="#244864"/><path d="M668.1 656.6L676.6 670.8 689.2 662.9 681.0 649.3z" fill="#2b5272"/><path d="M677.7 651.2L685.9 664.9 698.5 657.1 690.6 643.9z" fill="#315d80"/><path d="M687.2 645.8L695.2 659.1 707.8 651.3 700.1 638.4z" fill="#366387"/><path d="M696.8 640.3L704.5 653.3 717.1 645.4 709.7 633.0z" fill="#3a688e"/><path d="M706.3 634.9L713.8 647.5 726.4 639.6 719.2 627.5z" fill="#3f6e93"/><path d="M715.9 629.4L723.1 641.6 735.7 633.8 728.8 622.1z" fill="#437297"/><path d="M725.4 624.0L732.4 635.8 745.0 628.0 738.3 616.6z" fill="#467498"/><path d="M735.0 618.6L741.8 630.0 754.3 622.1 747.9 611.2z" fill="#497699"/><path d="M744.5 613.1L751.1 624.2 763.6 616.3 757.4 605.8z" fill="#4c779a"/><path d="M754.1 607.7L760.4 618.4 769.7 612.5 763.6 602.2z" fill="#4f799b"/><path d="M655.7 678.5L664.1 691.9 676.6 684.0 668.3 670.8z" fill="#1a364e"/><path d="M665.0 672.8L673.3 686.0 685.8 678.1 677.7 665.1z" fill="#224663"/><path d="M674.4 667.1L682.6 680.2 695.1 672.2 687.1 659.4z" fill="#285071"/><path d="M683.8 661.4L691.9 674.3 704.4 666.4 696.4 653.6z" fill="#2f5b7f"/><path d="M693.1 655.6L701.1 668.4 713.6 660.5 705.8 647.9z" fill="#336186"/><path d="M702.5 649.9L710.4 662.5 722.9 654.6 715.2 642.2z" fill="#37678d"/><path d="M711.9 644.2L719.6 656.7 732.1 648.7 724.5 636.5z" fill="#3c6c93"/><path d="M721.3 638.5L728.9 650.8 741.4 642.9 733.9 630.8z" fill="#407198"/><path d="M730.6 632.8L738.1 644.9 750.6 637.0 743.3 625.0z" fill="#437298"/><path d="M740.0 627.0L747.4 639.0 759.9 631.1 752.6 619.3z" fill="#467499"/><path d="M749.4 621.3L756.7 633.2 769.2 625.2 762.0 613.6z" fill="#48769a"/><path d="M758.7 615.6L765.9 627.3 775.2 621.4 768.1 609.9z" fill="#4b789b"/><path d="M661.9 688.4L670.5 701.7 682.9 693.6 674.4 680.6z" fill="#18354d"/><path d="M671.2 682.6L679.7 695.7 692.1 687.6 683.7 674.7z" fill="#204461"/><path d="M680.5 676.8L688.9 689.7 701.3 681.6 693.0 668.9z" fill="#264e6f"/><path d="M689.8 670.9L698.1 683.7 710.5 675.6 702.3 663.1z" fill="#2c597e"/><path d="M699.0 665.1L707.2 677.7 719.6 669.6 711.6 657.2z" fill="#315f85"/><path d="M708.3 659.3L716.4 671.7 728.8 663.6 720.9 651.4z" fill="#35658c"/><path d="M717.6 653.4L725.6 665.7 738.0 657.7 730.2 645.6z" fill="#396a92"/><path d="M726.9 647.6L734.8 659.8 747.2 651.7 739.4 639.7z" fill="#3d6f97"/><path d="M736.2 641.8L744.0 653.8 756.3 645.7 748.7 633.9z" fill="#3f7199"/><path d="M745.5 635.9L753.1 647.8 765.5 639.7 758.0 628.0z" fill="#427399"/><path d="M754.8 630.1L762.3 641.8 774.7 633.7 767.3 622.2z" fill="#45759a"/><path d="M764.1 624.2L771.5 635.8 780.7 629.8 773.3 618.4z" fill="#48769b"/><path d="M668.3 698.2L678.1 712.6 690.2 704.1 680.7 690.2z" fill="#17344c"/><path d="M677.5 692.3L687.0 706.3 699.1 697.8 689.9 684.3z" fill="#1e4261"/><path d="M686.7 686.3L696.0 700.0 708.0 691.4 699.1 678.3z" fill="#244d6f"/><path d="M695.9 680.4L704.9 693.7 717.0 685.1 708.3 672.4z" fill="#2a577d"/><path d="M705.1 674.4L713.9 687.3 725.9 678.8 717.5 666.4z" fill="#2e5d84"/><path d="M714.3 668.5L722.8 681.0 734.9 672.5 726.8 660.5z" fill="#32638b"/><path d="M723.5 662.5L731.8 674.7 743.8 666.2 736.0 654.5z" fill="#366891"/><path d="M732.7 656.6L740.7 668.4 752.8 659.8 745.2 648.6z" fill="#3a6d96"/><path d="M741.9 650.6L749.6 662.1 761.7 653.5 754.4 642.6z" fill="#3c6f98"/><path d="M751.1 644.7L758.6 655.7 770.7 647.2 763.6 636.7z" fill="#3f719a"/><path d="M760.4 638.8L767.5 649.4 779.6 640.9 772.8 630.7z" fill="#42739a"/><path d="M769.6 632.8L776.5 643.1 785.4 636.8 778.8 626.9z" fill="#45759b"/><path d="M675.5 708.9L684.7 721.8 696.7 713.2 687.7 700.5z" fill="#15334c"/><path d="M684.6 702.7L693.6 715.4 705.6 706.8 696.7 694.3z" fill="#1c4160"/><path d="M693.6 696.4L702.5 709.0 714.5 700.4 705.7 688.0z" fill="#224b6e"/><path d="M702.6 690.2L711.4 702.6 723.4 694.0 714.8 681.8z" fill="#28567c"/><path d="M711.6 684.0L720.3 696.3 732.3 687.7 723.8 675.6z" fill="#2c5b83"/><path d="M720.6 677.8L729.2 689.9 741.2 681.3 732.8 669.4z" fill="#30618a"/><path d="M729.6 671.5L738.1 683.5 750.1 674.9 741.8 663.1z" fill="#346690"/><path d="M738.6 665.3L747.0 677.2 759.0 668.6 750.8 656.9z" fill="#376b95"/><path d="M747.6 659.1L755.9 670.8 767.9 662.2 759.8 650.7z" fill="#3a6d97"/><path d="M756.7 652.9L764.8 664.4 776.8 655.8 768.8 644.5z" fill="#3c6f99"/><path d="M765.7 646.7L773.7 658.0 785.7 649.4 777.8 638.3z" fill="#3e729b"/><path d="M774.7 640.4L782.6 651.7 791.5 645.3 783.7 634.2z" fill="#41739b"/><path d="M682.3 718.4L692.7 732.4 704.4 723.3 694.4 709.9z" fill="#14324b"/><path d="M691.3 712.1L701.3 725.7 713.0 716.6 703.3 703.5z" fill="#1b405f"/><path d="M700.2 705.8L710.0 719.0 721.7 710.0 712.2 697.2z" fill="#204a6d"/><path d="M709.1 699.4L718.6 712.3 730.3 703.3 721.2 690.9z" fill="#25547b"/><path d="M718.0 693.1L727.3 705.6 739.0 696.6 730.1 684.5z" fill="#295a82"/><path d="M727.0 686.8L736.0 698.9 747.6 689.9 739.0 678.2z" fill="#2d5f88"/><path d="M735.9 680.4L744.6 692.2 756.3 683.2 747.9 671.9z" fill="#31648f"/><path d="M744.8 674.1L753.3 685.5 764.9 676.5 756.9 665.5z" fill="#346994"/><path d="M753.7 667.8L761.9 678.8 773.6 669.8 765.8 659.2z" fill="#376b96"/><path d="M762.7 661.4L770.6 672.1 782.3 663.1 774.7 652.9z" fill="#396d98"/><path d="M771.6 655.1L779.2 665.4 790.9 656.4 783.7 646.5z" fill="#3c7099"/><path d="M780.5 648.8L787.9 658.8 796.5 652.1 789.5 642.4z" fill="#3e729b"/><path d="M690.0 728.8L700.0 741.6 711.5 732.4 701.8 719.8z" fill="#12314a"/><path d="M698.7 722.2L708.5 734.8 720.1 725.6 710.5 713.2z" fill="#193e5e"/><path d="M707.4 715.6L717.1 728.0 728.6 718.8 719.2 706.6z" fill="#1e486c"/><path d="M716.2 709.0L725.6 721.2 737.2 712.0 727.9 700.0z" fill="#23527a"/><path d="M724.9 702.4L734.2 714.4 745.8 705.2 736.7 693.4z" fill="#275881"/><path d="M733.6 695.8L742.8 707.6 754.3 698.4 745.4 686.8z" fill="#2a5d87"/><path d="M742.3 689.2L751.3 700.8 762.9 691.6 754.1 680.2z" fill="#2e628e"/><path d="M751.1 682.6L759.9 694.0 771.4 684.8 762.8 673.6z" fill="#326793"/><path d="M759.8 676.0L768.4 687.1 780.0 678.0 771.6 667.0z" fill="#346995"/><path d="M768.5 669.4L777.0 680.3 788.5 671.2 780.3 660.4z" fill="#366b97"/><path d="M777.2 662.8L785.6 673.5 797.1 664.3 789.0 653.8z" fill="#396d98"/><path d="M786.0 656.2L794.1 666.7 802.7 659.9 794.7 649.6z" fill="#3b709a"/><path d="M697.4 738.3L708.0 751.4 719.3 741.9 709.0 729.2z" fill="#11304a"/><path d="M706.0 731.5L716.4 744.4 727.7 734.9 717.6 722.4z" fill="#173d5e"/><path d="M714.6 724.8L724.8 737.3 736.1 727.8 726.2 715.7z" fill="#1c476b"/><path d="M723.2 718.0L733.1 730.3 744.4 720.8 734.8 708.9z" fill="#215179"/><path d="M731.8 711.3L741.5 723.2 752.8 713.7 743.4 702.1z" fill="#245680"/><path d="M740.4 704.5L749.9 716.2 761.2 706.7 752.0 695.4z" fill="#285b86"/><path d="M749.0 697.8L758.2 709.2 769.5 699.6 760.6 688.6z" fill="#2c618d"/><path d="M757.6 691.0L766.6 702.1 777.9 692.6 769.2 681.9z" fill="#2f6592"/><path d="M766.2 684.2L775.0 695.1 786.2 685.6 777.8 675.1z" fill="#316794"/><path d="M774.8 677.5L783.3 688.0 794.6 678.5 786.4 668.4z" fill="#346995"/><path d="M783.4 670.7L791.7 681.0 803.0 671.5 795.0 661.6z" fill="#366b97"/><path d="M792.0 664.0L800.0 673.9 808.4 666.9 800.6 657.2z" fill="#396e99"/><path d="M705.3 748.0L716.6 761.2 727.5 751.4 716.7 738.6z" fill="#102e49"/><path d="M713.7 741.0L724.7 753.9 735.7 744.1 725.1 731.6z" fill="#153c5d"/><path d="M722.1 734.1L732.8 746.6 743.8 736.7 733.5 724.7z" fill="#1a456b"/><path d="M730.6 727.1L740.9 739.3 751.9 729.4 741.9 717.7z" fill="#1e4f78"/><path d="M739.0 720.1L749.1 732.0 760.0 722.1 750.4 710.7z" fill="#22547f"/><path d="M747.4 713.2L757.2 724.7 768.2 714.8 758.8 703.8z" fill="#255985"/><path d="M755.8 706.2L765.3 717.4 776.3 707.5 767.2 696.8z" fill="#295f8c"/><path d="M764.3 699.2L773.5 710.1 784.4 700.2 775.6 689.8z" fill="#2c6391"/><path d="M772.7 692.3L781.6 702.8 792.6 692.9 784.1 682.9z" fill="#2f6593"/><path d="M781.1 685.3L789.7 695.4 800.7 685.6 792.5 675.9z" fill="#316794"/><path d="M789.5 678.3L797.8 688.1 808.8 678.3 800.9 668.9z" fill="#336996"/><path d="M798.0 671.4L806.0 680.8 814.1 673.5 806.4 664.4z" fill="#366c98"/><path d="M713.6 757.8L724.2 769.6 735.1 759.6 724.7 748.1z" fill="#0f2d48"/><path d="M721.8 750.6L732.2 762.2 743.1 752.3 732.9 740.8z" fill="#143a5c"/><path d="M730.0 743.4L740.3 754.9 751.2 744.9 741.1 733.6z" fill="#18446a"/><path d="M738.2 736.1L748.4 747.5 759.3 737.6 749.3 726.4z" fill="#1c4d77"/><path d="M746.5 728.9L756.5 740.1 767.4 730.2 757.5 719.2z" fill="#1f537e"/><path d="M754.7 721.7L764.6 732.8 775.5 722.8 765.7 711.9z" fill="#235884"/><path d="M762.9 714.5L772.6 725.4 783.5 715.5 773.9 704.7z" fill="#265d8b"/><path d="M771.1 707.3L780.7 718.1 791.6 708.1 782.2 697.5z" fill="#296190"/><path d="M779.3 700.0L788.8 710.7 799.7 700.8 790.4 690.3z" fill="#2c6391"/><path d="M787.5 692.8L796.9 703.3 807.8 693.4 798.6 683.1z" fill="#2e6593"/><path d="M795.7 685.6L805.0 696.0 815.9 686.0 806.8 675.8z" fill="#316795"/><path d="M803.9 678.4L813.0 688.6 821.1 681.3 812.1 671.2z" fill="#336a97"/><path d="M721.4 766.5L733.3 779.2 743.9 768.9 732.4 756.6z" fill="#0f2d47"/><path d="M729.5 759.2L741.1 771.5 751.7 761.2 740.5 749.3z" fill="#13395b"/><path d="M737.6 751.9L748.9 763.9 759.5 753.6 748.6 742.0z" fill="#174268"/><path d="M745.8 744.6L756.7 756.2 767.3 745.9 756.7 734.7z" fill="#1a4b76"/><path d="M753.9 737.2L764.5 748.6 775.1 738.3 764.8 727.3z" fill="#1d517d"/><path d="M762.0 729.9L772.3 740.9 782.9 730.6 772.9 720.0z" fill="#205683"/><path d="M770.1 722.6L780.1 733.3 790.7 722.9 781.1 712.7z" fill="#245b8a"/><path d="M778.2 715.3L787.9 725.6 798.5 715.3 789.2 705.4z" fill="#275f8f"/><path d="M786.3 707.9L795.7 718.0 806.3 707.6 797.3 698.0z" fill="#296190"/><path d="M794.4 700.6L803.5 710.3 814.1 700.0 805.4 690.7z" fill="#2b6392"/><path d="M802.6 693.3L811.3 702.7 821.9 692.3 813.5 683.4z" fill="#2e6594"/><path d="M810.7 686.0L819.2 695.0 827.0 687.4 818.8 678.6z" fill="#306796"/><path d="M730.2 775.9L742.5 788.3 752.7 777.6 740.9 765.7z" fill="#0e2c46"/><path d="M738.1 768.3L750.0 780.4 760.2 769.7 748.8 758.1z" fill="#123859"/><path d="M746.0 760.8L757.6 772.5 767.8 761.8 756.6 750.6z" fill="#164167"/><path d="M753.9 753.2L765.2 764.6 775.4 754.0 764.5 743.0z" fill="#194a74"/><path d="M761.8 745.6L772.7 756.7 782.9 746.1 772.4 735.4z" fill="#1b4f7c"/><path d="M769.7 738.1L780.3 748.8 790.5 738.2 780.3 727.9z" fill="#1e5482"/><path d="M777.5 730.5L787.8 740.9 798.1 730.3 788.2 720.3z" fill="#215989"/><path d="M785.4 722.9L795.4 733.0 805.6 722.4 796.1 712.7z" fill="#245d8e"/><path d="M793.3 715.4L803.0 725.2 813.2 714.5 803.9 705.2z" fill="#265f8f"/><path d="M801.2 707.8L810.5 717.3 820.7 706.6 811.8 697.6z" fill="#296191"/><path d="M809.1 700.2L818.1 709.4 828.3 698.7 819.7 690.0z" fill="#2b6393"/><path d="M817.0 692.7L825.7 701.5 833.2 693.6 824.8 685.1z" fill="#2d6594"/><path d="M739.3 785.1L750.7 796.0 760.8 785.3 749.6 774.5z" fill="#0d2b45"/><path d="M746.9 777.3L758.2 788.1 768.4 777.4 757.3 766.7z" fill="#123758"/><path d="M754.6 769.4L765.7 780.1 775.9 769.4 764.9 758.9z" fill="#153f65"/><path d="M762.2 761.6L773.2 772.2 783.4 761.5 772.6 751.1z" fill="#184873"/><path d="M769.9 753.8L780.7 764.3 790.9 753.5 780.2 743.3z" fill="#1a4d7a"/><path d="M777.5 746.0L788.2 756.3 798.4 745.6 787.8 735.5z" fill="#1c5281"/><path d="M785.2 738.2L795.8 748.4 805.9 737.7 795.5 727.7z" fill="#1e5787"/><path d="M792.8 730.4L803.3 740.5 813.4 729.7 803.1 719.9z" fill="#215b8c"/><path d="M800.5 722.6L810.8 732.5 820.9 721.8 810.8 712.1z" fill="#245d8e"/><path d="M808.1 714.8L818.3 724.6 828.4 713.9 818.4 704.3z" fill="#265f90"/><path d="M815.8 707.0L825.8 716.6 835.9 705.9 826.1 696.5z" fill="#286192"/><path d="M823.4 699.2L833.3 708.7 840.8 700.8 831.1 691.4z" fill="#2b6393"/><path d="M747.7 793.2L760.6 804.8 770.3 793.8 757.9 782.5z" fill="#0d2a44"/><path d="M755.3 785.3L767.8 796.6 777.5 785.6 765.5 774.6z" fill="#113557"/><path d="M762.8 777.4L775.0 788.4 784.7 777.4 773.0 766.7z" fill="#143e64"/><path d="M770.4 769.5L782.2 780.2 792.0 769.2 780.6 758.8z" fill="#174771"/><path d="M777.9 761.6L789.4 772.0 799.2 761.0 788.1 750.9z" fill="#194c78"/><path d="M785.5 753.7L796.6 763.8 806.4 752.7 795.6 743.0z" fill="#1b507f"/><path d="M793.0 745.8L803.9 755.6 813.6 744.5 803.2 735.1z" fill="#1d5586"/><path d="M800.6 737.9L811.1 747.4 820.8 736.3 810.7 727.2z" fill="#1f598b"/><path d="M808.1 729.9L818.3 739.2 828.0 728.1 818.3 719.3z" fill="#215b8d"/><path d="M815.6 722.0L825.5 731.0 835.2 719.9 825.8 711.4z" fill="#235d8f"/><path d="M823.2 714.1L832.7 722.8 842.5 711.7 833.4 703.5z" fill="#255f90"/><path d="M830.7 706.2L839.9 714.6 847.1 706.4 838.3 698.3z" fill="#286192"/><path d="M757.3 801.8L770.4 813.2 779.8 801.8 767.1 790.9z" fill="#0c2943"/><path d="M764.6 793.7L777.4 804.7 786.8 793.4 774.4 782.7z" fill="#103456"/><path d="M771.9 785.6L784.3 796.3 793.7 784.9 781.7 774.6z" fill="#133d62"/><path d="M779.2 777.4L791.3 787.9 800.7 776.5 789.0 766.5z" fill="#164570"/><path d="M786.5 769.3L798.3 779.5 807.6 768.1 796.3 758.3z" fill="#184a77"/><path d="M793.7 761.2L805.2 771.0 814.6 759.7 803.6 750.2z" fill="#1a4f7d"/><path d="M801.0 753.1L812.2 762.6 821.6 751.3 810.9 742.1z" fill="#1c5384"/><path d="M808.3 744.9L819.1 754.2 828.5 742.8 818.2 734.0z" fill="#1e5789"/><path d="M815.6 736.8L826.1 745.8 835.5 734.4 825.5 725.8z" fill="#1f598b"/><path d="M822.9 728.7L833.0 737.4 842.4 726.0 832.8 717.7z" fill="#205b8e"/><path d="M830.2 720.6L840.0 728.9 849.4 717.6 840.1 709.6z" fill="#235d8f"/><path d="M837.5 712.4L847.0 720.5 853.9 712.1 844.8 704.3z" fill="#255f91"/><path d="M767.0 810.2L780.5 821.2 789.6 809.5 776.5 798.9z" fill="#0b2842"/><path d="M774.1 801.9L787.2 812.5 796.2 800.9 783.6 790.6z" fill="#0f3354"/><path d="M781.1 793.5L793.9 803.9 802.9 792.3 790.6 782.3z" fill="#123b61"/><path d="M788.2 785.2L800.6 795.3 809.6 783.6 797.7 773.9z" fill="#15436e"/><path d="M795.2 776.8L807.3 786.6 816.3 775.0 804.7 765.6z" fill="#174875"/><path d="M802.2 768.5L814.0 778.0 823.0 766.4 811.8 757.2z" fill="#194d7b"/><path d="M809.3 760.1L820.7 769.4 829.7 757.7 818.8 748.9z" fill="#1b5182"/><path d="M816.3 751.8L827.4 760.8 836.4 749.1 825.8 740.5z" fill="#1d5587"/><path d="M823.4 743.5L834.1 752.1 843.1 740.5 832.9 732.2z" fill="#1e578a"/><path d="M830.4 735.1L840.8 743.5 849.8 731.9 839.9 723.8z" fill="#1f598c"/><path d="M837.5 726.8L847.4 734.9 856.5 723.2 847.0 715.5z" fill="#205b8e"/><path d="M844.5 718.4L854.1 726.2 860.8 717.6 851.6 710.1z" fill="#225d90"/><path d="M777.0 818.3L790.8 828.9 799.5 816.9 786.2 806.8z" fill="#0b273e"/><path d="M783.8 809.8L797.3 820.0 805.9 808.1 793.0 798.2z" fill="#0e3253"/><path d="M790.6 801.2L803.7 811.2 812.4 799.3 799.7 789.7z" fill="#113a60"/><path d="M797.4 792.7L810.1 802.4 818.8 790.5 806.5 781.1z" fill="#14426c"/><path d="M804.2 784.1L816.5 793.6 825.2 781.6 813.3 772.6z" fill="#164773"/><path d="M810.9 775.5L823.0 784.7 831.6 772.8 820.1 764.0z" fill="#184b7a"/><path d="M817.7 767.0L829.4 775.9 838.0 764.0 826.9 755.4z" fill="#1a5080"/><path d="M824.5 758.4L835.8 767.1 844.5 755.2 833.7 746.9z" fill="#1b5385"/><path d="M831.3 749.9L842.2 758.3 850.9 746.3 840.4 738.3z" fill="#1c5588"/><path d="M838.1 741.3L848.6 749.4 857.3 737.5 847.2 729.8z" fill="#1e578a"/><path d="M844.9 732.8L855.1 740.6 863.7 728.7 854.0 721.2z" fill="#1f598c"/><path d="M851.6 724.2L861.5 731.8 867.9 722.9 858.4 715.7z" fill="#205b8f"/><path d="M787.3 826.1L801.4 836.2 809.7 824.1 796.1 814.3z" fill="#0b2738"/><path d="M793.8 817.4L807.5 827.2 815.8 815.1 802.6 805.6z" fill="#0e314d"/><path d="M800.3 808.6L813.7 818.2 822.0 806.1 809.1 796.8z" fill="#10385d"/><path d="M806.8 799.9L819.8 809.2 828.1 797.0 815.6 788.0z" fill="#13406b"/><path d="M813.3 791.1L826.0 800.2 834.3 788.0 822.1 779.3z" fill="#154572"/><path d="M819.8 782.3L832.1 791.2 840.4 779.0 828.6 770.5z" fill="#174978"/><path d="M826.4 773.6L838.3 782.2 846.6 770.0 835.1 761.8z" fill="#184e7e"/><path d="M832.9 764.8L844.4 773.2 852.7 761.0 841.7 753.0z" fill="#1a5184"/><path d="M839.4 756.1L850.5 764.1 858.8 752.0 848.2 744.3z" fill="#1b5386"/><path d="M845.9 747.3L856.7 755.1 865.0 743.0 854.7 735.5z" fill="#1c5588"/><path d="M852.4 738.6L862.8 746.1 871.1 733.9 861.2 726.8z" fill="#1d578a"/><path d="M858.9 729.8L869.0 737.1 875.1 728.1 865.4 721.1z" fill="#1f598d"/><path d="M797.7 833.6L811.9 843.2 819.9 830.8 806.1 821.5z" fill="#0b2633"/><path d="M804.0 824.7L817.8 834.0 825.8 821.6 812.4 812.6z" fill="#0e3146"/><path d="M810.2 815.7L823.7 824.8 831.7 812.5 818.6 803.7z" fill="#103855"/><path d="M816.4 806.8L829.6 815.7 837.6 803.3 824.9 794.7z" fill="#123f66"/><path d="M822.7 797.8L835.5 806.5 843.5 794.1 831.1 785.8z" fill="#144370"/><path d="M828.9 788.9L841.4 797.3 849.4 785.0 837.4 776.8z" fill="#154876"/><path d="M835.2 779.9L847.3 788.2 855.3 775.8 843.6 767.9z" fill="#174c7d"/><path d="M841.4 771.0L853.2 779.0 861.2 766.6 849.8 758.9z" fill="#195082"/><path d="M847.7 762.0L859.1 769.8 867.1 757.5 856.1 750.0z" fill="#1a5284"/><path d="M853.9 753.1L865.0 760.7 873.0 748.3 862.3 741.0z" fill="#1b5386"/><path d="M860.1 744.2L870.9 751.5 878.9 739.1 868.6 732.1z" fill="#1c5588"/><path d="M866.4 735.2L876.8 742.3 882.7 733.2 872.6 726.3z" fill="#1d578b"/><path d="M808.2 840.7L821.9 849.3 829.7 836.9 816.3 828.4z" fill="#0b262d"/><path d="M814.2 831.6L827.7 840.1 835.5 827.6 822.3 819.3z" fill="#0e303f"/><path d="M820.2 822.5L833.5 830.9 841.3 818.4 828.3 810.2z" fill="#10374d"/><path d="M826.2 813.4L839.2 821.6 847.0 809.1 834.3 801.1z" fill="#123f5d"/><path d="M832.2 804.2L845.0 812.4 852.8 799.9 840.3 792.0z" fill="#134269"/><path d="M838.2 795.1L850.8 803.1 858.6 790.7 846.3 782.8z" fill="#144674"/><path d="M844.2 786.0L856.5 793.9 864.3 781.4 852.3 773.7z" fill="#164a7b"/><path d="M850.2 776.9L862.3 784.7 870.1 772.2 858.2 764.6z" fill="#184e80"/><path d="M856.1 767.8L868.1 775.4 875.9 762.9 864.2 755.5z" fill="#195082"/><path d="M862.1 758.7L873.8 766.2 881.6 753.7 870.2 746.4z" fill="#1a5284"/><path d="M868.1 749.6L879.6 756.9 887.4 744.4 876.2 737.3z" fill="#1b5387"/><path d="M874.1 740.5L885.4 747.7 891.2 738.4 880.1 731.4z" fill="#1c5589"/><path d="M818.4 847.1L834.6 856.7 841.7 843.8 826.3 834.7z" fill="#0b2628"/><path d="M824.2 837.9L839.8 847.1 846.9 834.2 832.1 825.5z" fill="#0e3037"/><path d="M830.0 828.7L845.1 837.6 852.1 824.7 837.9 816.3z" fill="#103745"/><path d="M835.9 819.5L850.3 828.0 857.3 815.1 843.7 807.0z" fill="#123e54"/><path d="M841.7 810.3L855.5 818.4 862.6 805.5 849.6 797.8z" fill="#134260"/><path d="M847.5 801.1L860.7 808.9 867.8 796.0 855.4 788.6z" fill="#14456c"/><path d="M853.3 791.9L866.0 799.3 873.0 786.4 861.2 779.4z" fill="#154878"/><path d="M859.2 782.6L871.2 789.8 878.2 776.9 867.0 770.2z" fill="#164c7e"/><path d="M865.0 773.4L876.4 780.2 883.5 767.3 872.9 761.0z" fill="#174e80"/><path d="M870.8 764.2L881.6 770.7 888.7 757.8 878.7 751.8z" fill="#195082"/><path d="M876.6 755.0L886.9 761.1 893.9 748.2 884.5 742.6z" fill="#1a5285"/><path d="M882.5 745.8L892.1 751.6 897.3 742.0 888.3 736.6z" fill="#1b5487"/><path d="M830.4 854.2L845.2 862.3 852.1 849.3 837.7 841.4z" fill="#0b2723"/><path d="M835.8 844.7L850.3 852.7 857.1 839.7 843.0 831.9z" fill="#0e3030"/><path d="M841.2 835.3L855.3 843.0 862.1 830.0 848.4 822.5z" fill="#10373d"/><path d="M846.5 825.8L860.4 833.4 867.2 820.4 853.8 813.0z" fill="#123e4b"/><path d="M851.9 816.3L865.4 823.8 872.2 810.8 859.2 803.5z" fill="#134156"/><path d="M857.3 806.9L870.5 814.1 877.3 801.1 864.6 794.1z" fill="#144462"/><path d="M862.7 797.4L875.5 804.5 882.3 791.5 869.9 784.6z" fill="#15486e"/><path d="M868.1 787.9L880.6 794.9 887.4 781.9 875.3 775.2z" fill="#164a79"/><path d="M873.4 778.5L885.6 785.2 892.4 772.2 880.7 765.7z" fill="#164c7e"/><path d="M878.8 769.0L890.7 775.6 897.5 762.6 886.1 756.2z" fill="#174e80"/><path d="M884.2 759.5L895.7 766.0 902.5 753.0 891.5 746.8z" fill="#185083"/><path d="M889.6 750.1L900.7 756.3 905.8 746.7 895.0 740.6z" fill="#195285"/><path d="M841.4 860.2L855.9 867.6 862.5 854.5 848.3 847.3z" fill="#0b291f"/><path d="M846.5 850.6L860.8 857.9 867.4 844.8 853.5 837.7z" fill="#0e322b"/><path d="M851.7 841.0L865.7 848.2 872.3 835.1 858.6 828.1z" fill="#103735"/><path d="M856.8 831.4L870.6 838.5 877.2 825.4 863.7 818.5z" fill="#123d42"/><path d="M861.9 821.8L875.4 828.8 882.0 815.7 868.9 808.9z" fill="#13414d"/><path d="M867.1 812.3L880.3 819.1 886.9 806.0 874.0 799.3z" fill="#144458"/><path d="M872.2 802.7L885.2 809.4 891.8 796.3 879.1 789.7z" fill="#154763"/><path d="M877.3 793.1L890.1 799.7 896.7 786.6 884.2 780.1z" fill="#164a6e"/><path d="M882.5 783.5L895.0 790.0 901.6 776.9 889.4 770.5z" fill="#164b77"/><path d="M887.6 773.9L899.9 780.3 906.5 767.2 894.5 760.9z" fill="#164c7f"/><path d="M892.7 764.3L904.8 770.6 911.4 757.5 899.6 751.4z" fill="#174e81"/><path d="M897.9 754.7L909.7 760.9 914.6 751.2 903.0 745.1z" fill="#185083"/><path d="M852.1 865.7L869.3 873.7 875.1 860.3 858.8 852.6z" fill="#0b2b1a"/><path d="M857.1 856.0L873.6 863.8 879.4 850.3 863.8 842.9z" fill="#0e3425"/><path d="M862.0 846.3L877.9 853.8 883.7 840.3 868.7 833.3z" fill="#10392f"/><path d="M867.0 836.7L882.2 843.8 888.0 830.4 873.7 823.6z" fill="#123e3a"/><path d="M871.9 827.0L886.5 833.9 892.3 820.4 878.6 813.9z" fill="#134043"/><path d="M876.9 817.3L890.8 823.9 896.6 810.4 883.6 804.2z" fill="#14434e"/><path d="M881.8 807.6L895.1 813.9 900.9 800.5 888.5 794.6z" fill="#154759"/><path d="M886.8 798.0L899.4 804.0 905.2 790.5 893.5 784.9z" fill="#164964"/><path d="M891.8 788.3L903.7 794.0 909.5 780.5 898.4 775.2z" fill="#164a6c"/><path d="M896.7 778.6L908.0 784.0 913.8 770.6 903.4 765.6z" fill="#164b75"/><path d="M901.7 768.9L912.3 774.0 918.1 760.6 908.4 755.9z" fill="#164c7e"/><path d="M906.6 759.3L916.6 764.1 920.9 754.1 911.6 749.6z" fill="#174e81"/><path d="M864.8 871.7L880.2 878.3 885.8 864.8 870.9 858.3z" fill="#0a2d16"/><path d="M869.3 861.8L884.4 868.3 890.0 854.7 875.3 848.4z" fill="#0d3620"/><path d="M873.8 851.9L888.5 858.2 894.1 844.7 879.8 838.5z" fill="#103c29"/><path d="M878.2 842.0L892.7 848.2 898.3 834.7 884.3 828.6z" fill="#124133"/><path d="M882.7 832.1L896.8 838.2 902.4 824.7 888.8 818.7z" fill="#13423b"/><path d="M887.2 822.2L901.0 828.2 906.6 814.7 893.2 808.8z" fill="#144344"/><path d="M891.7 812.3L905.1 818.2 910.7 804.6 897.7 798.9z" fill="#15464f"/><path d="M896.1 802.4L909.2 808.1 914.8 794.6 902.2 789.0z" fill="#164959"/><path d="M900.6 792.5L913.4 798.1 919.0 784.6 906.6 779.1z" fill="#164a62"/><path d="M905.1 782.6L917.5 788.1 923.1 774.6 911.1 769.3z" fill="#164a6a"/><path d="M909.5 772.7L921.7 778.1 927.3 764.6 915.6 759.4z" fill="#164b73"/><path d="M914.0 762.8L925.8 768.1 930.0 758.1 918.5 752.9z" fill="#164c7c"/><path d="M876.2 876.6L893.0 883.1 898.0 869.4 881.9 863.1z" fill="#0a2e12"/><path d="M880.5 866.6L896.7 873.0 901.7 859.2 886.2 853.1z" fill="#0d391b"/><path d="M884.7 856.6L900.4 862.8 905.4 849.0 890.4 843.1z" fill="#0f3f23"/><path d="M888.9 846.6L904.1 852.6 909.1 838.9 894.6 833.1z" fill="#11442d"/><path d="M893.2 836.6L907.8 842.4 912.8 828.7 898.9 823.1z" fill="#134534"/><path d="M897.4 826.6L911.5 832.2 916.5 818.5 903.1 813.1z" fill="#14463c"/><path d="M901.6 816.6L915.2 822.1 920.3 808.3 907.3 803.2z" fill="#154645"/><path d="M905.8 806.7L919.0 811.9 924.0 798.1 911.6 793.2z" fill="#16484e"/><path d="M910.1 796.7L922.7 801.7 927.7 788.0 915.8 783.2z" fill="#164957"/><path d="M914.3 786.7L926.4 791.5 931.4 777.8 920.0 773.2z" fill="#164a5f"/><path d="M918.5 776.7L930.1 781.3 935.1 767.6 924.3 763.2z" fill="#164b68"/><path d="M922.8 766.7L933.8 771.2 937.5 761.0 927.0 756.7z" fill="#164c71"/><path d="M888.6 881.4L905.0 887.2 909.6 873.4 893.8 867.8z" fill="#0a3010"/><path d="M892.5 871.3L908.5 877.0 913.1 863.1 897.7 857.6z" fill="#0d3b15"/><path d="M896.3 861.2L911.9 866.7 916.5 852.8 901.5 847.5z" fill="#0f411d"/><path d="M900.2 851.0L915.3 856.4 919.9 842.6 905.4 837.4z" fill="#114726"/><path d="M904.0 840.9L918.7 846.2 923.3 832.3 909.2 827.2z" fill="#12482d"/><path d="M907.9 830.8L922.1 835.9 926.7 822.0 913.1 817.1z" fill="#134935"/><path d="M911.7 820.7L925.5 825.6 930.1 811.8 916.9 807.0z" fill="#14493d"/><path d="M915.6 810.5L928.9 815.4 933.5 801.5 920.7 796.9z" fill="#154945"/><path d="M919.4 800.4L932.3 805.1 936.9 791.2 924.6 786.7z" fill="#16484c"/><path d="M923.2 790.3L935.8 794.8 940.4 781.0 928.4 776.6z" fill="#164955"/><path d="M927.1 780.1L939.2 784.6 943.8 770.7 932.3 766.5z" fill="#164a5d"/><path d="M930.9 770.0L942.6 774.3 946.0 764.0 934.8 759.9z" fill="#164b66"/><path d="M900.8 885.7L917.4 890.9 921.5 876.9 905.5 871.9z" fill="#0b3110"/><path d="M904.3 875.5L920.5 880.6 924.6 866.6 909.1 861.7z" fill="#0d3d14"/><path d="M907.8 865.3L923.5 870.2 927.7 856.2 912.6 851.4z" fill="#0f4418"/><path d="M911.4 855.0L926.6 859.9 930.8 845.9 916.1 841.2z" fill="#114a1f"/><path d="M914.9 844.8L929.7 849.5 933.9 835.5 919.6 831.0z" fill="#124c26"/><path d="M918.4 834.6L932.8 839.2 937.0 825.2 923.2 820.8z" fill="#134c2d"/><path d="M921.9 824.3L935.9 828.8 940.1 814.8 926.7 810.5z" fill="#144d35"/><path d="M925.5 814.1L939.0 818.5 943.2 804.5 930.2 800.3z" fill="#154d3d"/><path d="M929.0 803.9L942.1 808.1 946.3 794.1 933.7 790.1z" fill="#154a43"/><path d="M932.5 793.6L945.2 797.7 949.3 783.8 937.3 779.8z" fill="#16494a"/><path d="M936.0 783.4L948.3 787.4 952.4 773.4 940.8 769.6z" fill="#164a53"/><path d="M939.6 773.2L951.3 777.0 954.4 766.7 943.1 763.0z" fill="#164a5b"/><path d="M913.1 889.6L929.8 894.2 933.6 880.1 917.4 875.6z" fill="#0b330f"/><path d="M916.3 879.3L932.6 883.8 936.3 869.7 920.6 865.3z" fill="#0d3f14"/><path d="M919.5 868.9L935.4 873.3 939.1 859.2 923.8 855.0z" fill="#0f4617"/><path d="M922.7 858.6L938.1 862.9 941.8 848.8 927.0 844.7z" fill="#114d1a"/><path d="M925.9 848.3L940.9 852.5 944.6 838.4 930.2 834.4z" fill="#124f1f"/><path d="M929.1 838.0L943.6 842.0 947.4 828.0 933.4 824.0z" fill="#135026"/><path d="M932.3 827.6L946.4 831.6 950.1 817.5 936.6 813.7z" fill="#14502d"/><path d="M935.5 817.3L949.2 821.2 952.9 807.1 939.8 803.4z" fill="#155035"/><path d="M938.7 807.0L951.9 810.8 955.7 796.7 943.0 793.1z" fill="#154e3b"/><path d="M941.9 796.7L954.7 800.3 958.4 786.3 946.2 782.8z" fill="#154c42"/><path d="M945.1 786.4L957.5 789.9 961.2 775.8 949.4 772.4z" fill="#164948"/><path d="M948.3 776.0L960.2 779.5 963.0 769.0 951.5 765.7z" fill="#164a50"/><path d="M925.5 893.0L942.6 897.0 945.8 882.8 929.4 878.9z" fill="#0b340f"/><path d="M928.4 882.6L945.0 886.5 948.2 872.3 932.2 868.5z" fill="#0e4013"/><path d="M931.2 872.2L947.4 876.0 950.6 861.8 935.1 858.1z" fill="#0f4816"/><path d="M934.1 861.8L949.8 865.5 953.0 851.3 938.0 847.7z" fill="#114f1a"/><path d="M937.0 851.4L952.2 855.0 955.4 840.8 940.9 837.3z" fill="#12511c"/><path d="M939.9 841.0L954.6 844.5 957.8 830.3 943.7 826.9z" fill="#12531e"/><path d="M942.7 830.6L957.0 834.0 960.2 819.8 946.6 816.5z" fill="#135425"/><path d="M945.6 820.2L959.4 823.5 962.6 809.4 949.5 806.1z" fill="#14542d"/><path d="M948.5 809.8L961.8 813.0 965.1 798.9 952.4 795.7z" fill="#155233"/><path d="M951.4 799.4L964.2 802.5 967.5 788.4 955.3 785.3z" fill="#154f39"/><path d="M954.2 789.0L966.6 792.0 969.9 777.9 958.1 774.9z" fill="#154d40"/><path d="M957.1 778.6L969.0 781.5 971.4 771.0 960.0 768.2z" fill="#164b46"/><path d="M938.2 896.0L956.6 899.5 959.1 885.2 941.6 881.8z" fill="#0c350f"/><path d="M940.7 885.5L958.4 888.9 960.9 874.6 944.1 871.4z" fill="#0e4212"/><path d="M943.2 875.0L960.3 878.3 962.8 864.0 946.6 860.9z" fill="#104a15"/><path d="M945.7 864.5L962.1 867.8 964.6 853.5 949.1 850.4z" fill="#125119"/><path d="M948.3 854.1L964.0 857.2 966.5 842.9 951.7 839.9z" fill="#12541b"/><path d="M950.8 843.6L965.8 846.6 968.3 832.3 954.2 829.5z" fill="#13561d"/><path d="M953.3 833.1L967.7 836.0 970.2 821.7 956.7 819.0z" fill="#13571f"/><path d="M955.8 822.7L969.5 825.4 972.0 811.1 959.2 808.5z" fill="#145725"/><path d="M958.4 812.2L971.4 814.8 973.9 800.5 961.8 798.0z" fill="#14552b"/><path d="M960.9 801.7L973.2 804.2 975.7 789.9 964.3 787.6z" fill="#155331"/><path d="M963.4 791.2L975.1 793.6 977.6 779.4 966.8 777.1z" fill="#155138"/><path d="M965.9 780.8L976.9 783.1 978.8 772.5 968.5 770.3z" fill="#164e3e"/><path d="M951.8 898.6L969.0 901.2 971.1 886.8 954.5 884.3z" fill="#0e350f"/><path d="M953.8 888.0L970.6 890.6 972.7 876.2 956.6 873.8z" fill="#104313"/><path d="M955.9 877.5L972.2 880.0 974.3 865.6 958.6 863.2z" fill="#114c15"/><path d="M957.9 866.9L973.7 869.3 975.8 855.0 960.6 852.7z" fill="#125318"/><path d="M959.9 856.4L975.3 858.7 977.4 844.4 962.6 842.1z" fill="#13561a"/><path d="M961.9 845.8L976.9 848.1 979.0 833.8 964.7 831.6z" fill="#13581c"/><path d="M964.0 835.2L978.4 837.5 980.6 823.2 966.7 821.0z" fill="#145a1e"/><path d="M966.0 824.7L980.0 826.9 982.1 812.6 968.7 810.4z" fill="#145b1f"/><path d="M968.0 814.1L981.6 816.3 983.7 802.0 970.7 799.9z" fill="#145923"/><path d="M970.0 803.6L983.2 805.7 985.3 791.4 972.8 789.3z" fill="#145729"/><path d="M972.1 793.0L984.7 795.1 986.9 780.8 974.8 778.8z" fill="#155430"/><path d="M974.1 782.5L986.3 784.5 987.9 773.9 976.1 771.9z" fill="#155236"/><path d="M964.5 900.5L983.4 902.5 984.7 888.1 966.8 886.2z" fill="#103610"/><path d="M966.2 889.9L984.4 891.8 985.7 877.5 968.5 875.6z" fill="#124414"/><path d="M967.9 879.3L985.4 881.2 986.7 866.8 970.2 865.0z" fill="#134c16"/><path d="M969.6 868.7L986.3 870.5 987.7 856.2 971.9 854.4z" fill="#135518"/><path d="M971.3 858.1L987.3 859.9 988.6 845.5 973.6 843.8z" fill="#135819"/><path d="M973.0 847.5L988.3 849.2 989.6 834.9 975.3 833.2z" fill="#145a1b"/><path d="M974.7 836.9L989.3 838.6 990.6 824.2 977.0 822.6z" fill="#145c1d"/><path d="M976.4 826.4L990.2 828.0 991.6 813.6 978.7 812.1z" fill="#145d1e"/><path d="M978.1 815.8L991.2 817.3 992.5 803.0 980.4 801.5z" fill="#145c1f"/><path d="M979.8 805.2L992.2 806.7 993.5 792.3 982.0 790.9z" fill="#145a21"/><path d="M981.5 794.6L993.2 796.0 994.5 781.7 983.7 780.3z" fill="#145827"/><path d="M983.1 784.0L994.1 785.4 995.1 774.7 984.8 773.4z" fill="#15562e"/><path d="M978.5 902.0L995.9 903.0 996.8 888.6 980.1 887.6z" fill="#113711"/><path d="M979.7 891.3L996.6 892.3 997.5 878.0 981.2 877.0z" fill="#154414"/><path d="M980.8 880.7L997.3 881.7 998.2 867.4 982.4 866.3z" fill="#164d17"/><path d="M982.0 870.1L998.0 871.1 998.9 856.7 983.6 855.7z" fill="#165619"/><path d="M983.2 859.4L998.7 860.5 999.7 846.1 984.7 845.1z" fill="#155a19"/><path d="M984.3 848.8L999.4 849.8 1000.4 835.5 985.9 834.5z" fill="#145d1a"/><path d="M985.5 838.2L1000.1 839.2 1001.1 824.9 987.1 823.8z" fill="#145f1c"/><path d="M986.6 827.5L1000.8 828.6 1001.8 814.2 988.2 813.2z" fill="#15601d"/><path d="M987.8 816.9L1001.5 818.0 1002.5 803.6 989.4 802.6z" fill="#145e1e"/><path d="M989.0 806.3L1002.2 807.3 1003.2 793.0 990.5 791.9z" fill="#145d1f"/><path d="M990.1 795.7L1002.9 796.7 1003.9 782.4 991.7 781.3z" fill="#145c20"/><path d="M991.3 785.0L1003.7 786.1 1004.4 775.5 992.5 774.4z" fill="#145a26"/><path d="M991.4 902.7L1010.3 902.9 1010.5 888.6 992.5 888.4z" fill="#133711"/><path d="M992.2 892.1L1010.4 892.3 1010.6 878.0 993.3 877.7z" fill="#174515"/><path d="M993.0 881.5L1010.6 881.7 1010.7 867.4 994.1 867.1z" fill="#184e17"/><path d="M993.8 870.8L1010.7 871.1 1010.8 856.8 995.0 856.5z" fill="#19571a"/><path d="M994.7 860.2L1010.8 860.5 1010.9 846.2 995.8 845.9z" fill="#185b1a"/><path d="M995.5 849.6L1010.9 849.9 1011.0 835.6 996.6 835.2z" fill="#175e1b"/><path d="M996.3 838.9L1011.0 839.3 1011.1 825.0 997.4 824.6z" fill="#15611b"/><path d="M997.1 828.3L1011.1 828.7 1011.2 814.4 998.3 814.0z" fill="#15621c"/><path d="M998.0 817.7L1011.2 818.1 1011.3 803.8 999.1 803.3z" fill="#15611d"/><path d="M998.8 807.1L1011.3 807.5 1011.5 793.2 999.9 792.7z" fill="#15601e"/><path d="M999.6 796.4L1011.4 796.9 1011.6 782.6 1000.7 782.1z" fill="#145e1f"/><path d="M1000.4 785.8L1011.5 786.3 1011.6 775.7 1001.3 775.2z" fill="#145d20"/><path d="M1005.4 902.9L1024.4 902.1 1023.8 887.9 1005.8 888.5z" fill="#153812"/><path d="M1005.7 892.2L1023.9 891.5 1023.4 877.3 1006.1 877.9z" fill="#194616"/><path d="M1006.0 881.6L1023.5 881.0 1023.0 866.8 1006.4 867.3z" fill="#1b4f18"/><path d="M1006.3 871.0L1023.1 870.5 1022.5 856.2 1006.7 856.7z" fill="#1c581b"/><path d="M1006.6 860.4L1022.7 859.9 1022.1 845.7 1007.0 846.1z" fill="#1b5c1b"/><path d="M1006.9 849.8L1022.3 849.4 1021.7 835.2 1007.3 835.5z" fill="#1a5f1c"/><path d="M1007.2 839.2L1021.8 838.8 1021.3 824.6 1007.6 824.9z" fill="#18621c"/><path d="M1007.5 828.6L1021.4 828.3 1020.9 814.1 1007.9 814.3z" fill="#17641c"/><path d="M1007.8 818.0L1021.0 817.8 1020.4 803.5 1008.2 803.7z" fill="#15631c"/><path d="M1008.1 807.4L1020.6 807.2 1020.0 793.0 1008.5 793.0z" fill="#15621d"/><path d="M1008.4 796.8L1020.2 796.7 1019.6 782.5 1008.8 782.4z" fill="#15611e"/><path d="M1008.7 786.2L1019.7 786.1 1019.3 775.6 1008.9 775.5z" fill="#155f1f"/><path d="M1019.5 902.3L1036.8 900.7 1035.8 886.6 1019.1 888.0z" fill="#173812"/><path d="M1019.2 891.7L1036.1 890.3 1035.2 876.1 1018.9 877.5z" fill="#1b4717"/><path d="M1019.0 881.2L1035.4 879.8 1034.5 865.7 1018.7 866.9z" fill="#1d5019"/><path d="M1018.8 870.6L1034.7 869.3 1033.8 855.2 1018.4 856.4z" fill="#1e591c"/><path d="M1018.5 860.1L1034.0 858.9 1033.1 844.7 1018.2 845.8z" fill="#1e5d1c"/><path d="M1018.3 849.5L1033.4 848.4 1032.4 834.3 1018.0 835.2z" fill="#1d601d"/><path d="M1018.0 838.9L1032.7 837.9 1031.8 823.8 1017.7 824.7z" fill="#1c631d"/><path d="M1017.8 828.4L1032.0 827.5 1031.1 813.3 1017.5 814.1z" fill="#1a651d"/><path d="M1017.6 817.8L1031.3 817.0 1030.4 802.9 1017.3 803.6z" fill="#18651c"/><path d="M1017.3 807.3L1030.6 806.5 1029.7 792.4 1017.0 793.0z" fill="#16651c"/><path d="M1017.1 796.7L1029.9 796.1 1029.0 781.9 1016.8 782.5z" fill="#16631d"/><path d="M1016.9 786.1L1029.3 785.6 1028.6 775.1 1016.6 775.6z" fill="#15621e"/><path d="M1032.3 901.1L1050.5 898.6 1049.0 884.6 1031.5 887.0z" fill="#193914"/><path d="M1031.7 890.6L1049.4 888.2 1047.8 874.3 1030.9 876.5z" fill="#1d4817"/><path d="M1031.1 880.1L1048.2 877.9 1046.6 863.9 1030.4 866.0z" fill="#20511a"/><path d="M1030.6 869.7L1047.0 867.5 1045.4 853.6 1029.8 855.5z" fill="#215a1d"/><path d="M1030.0 859.2L1045.8 857.2 1044.2 843.2 1029.2 845.0z" fill="#215e1d"/><path d="M1029.4 848.7L1044.6 846.8 1043.0 832.9 1028.7 834.5z" fill="#20611e"/><path d="M1028.9 838.2L1043.4 836.5 1041.8 822.5 1028.1 824.0z" fill="#1f641e"/><path d="M1028.3 827.7L1042.3 826.1 1040.7 812.2 1027.5 813.5z" fill="#1d661e"/><path d="M1027.7 817.2L1041.1 815.8 1039.5 801.8 1027.0 803.0z" fill="#1b661e"/><path d="M1027.2 806.7L1039.9 805.4 1038.3 791.5 1026.4 792.6z" fill="#19661d"/><path d="M1026.6 796.2L1038.7 795.1 1037.1 781.1 1025.8 782.1z" fill="#16661c"/><path d="M1026.0 785.7L1037.5 784.7 1036.3 774.4 1025.5 775.3z" fill="#16651d"/><path d="M1045.8 899.3L1063.4 896.0 1061.3 882.2 1044.4 885.2z" fill="#1c3915"/><path d="M1044.8 888.9L1061.9 885.8 1059.8 871.9 1043.4 874.8z" fill="#214819"/><path d="M1043.8 878.5L1060.3 875.5 1058.2 861.7 1042.4 864.5z" fill="#22521b"/><path d="M1042.7 868.1L1058.8 865.3 1056.7 851.5 1041.4 854.1z" fill="#245b1e"/><path d="M1041.7 857.7L1057.2 855.1 1055.2 841.2 1040.3 843.7z" fill="#245f1e"/><path d="M1040.7 847.3L1055.7 844.8 1053.6 831.0 1039.3 833.3z" fill="#23621f"/><path d="M1039.7 836.9L1054.1 834.6 1052.1 820.8 1038.3 822.9z" fill="#22651f"/><path d="M1038.6 826.5L1052.6 824.4 1050.5 810.5 1037.3 812.5z" fill="#21681f"/><path d="M1037.6 816.2L1051.1 814.1 1049.0 800.3 1036.2 802.1z" fill="#1e671f"/><path d="M1036.6 805.8L1049.5 803.9 1047.4 790.1 1035.2 791.7z" fill="#1c671e"/><path d="M1035.6 795.4L1048.0 793.7 1045.9 779.8 1034.2 781.4z" fill="#1a671d"/><path d="M1034.6 785.0L1046.4 783.4 1044.9 773.2 1033.5 774.6z" fill="#17671d"/><path d="M1058.9 896.8L1077.3 892.6 1074.5 879.0 1057.0 883.0z" fill="#1f3a17"/><path d="M1057.4 886.6L1075.2 882.5 1072.4 868.9 1055.5 872.7z" fill="#25481c"/><path d="M1056.0 876.3L1073.1 872.4 1070.3 858.9 1054.1 862.4z" fill="#27521e"/><path d="M1054.6 866.0L1071.0 862.4 1068.2 848.8 1052.7 852.1z" fill="#285c1f"/><path d="M1053.2 855.7L1068.9 852.3 1066.1 838.8 1051.3 841.9z" fill="#27601f"/><path d="M1051.8 845.5L1066.9 842.3 1064.0 828.7 1049.9 831.6z" fill="#266320"/><path d="M1050.4 835.2L1064.8 832.2 1061.9 818.6 1048.5 821.3z" fill="#256620"/><path d="M1049.0 824.9L1062.7 822.2 1059.8 808.6 1047.1 811.1z" fill="#246921"/><path d="M1047.6 814.7L1060.6 812.1 1057.7 798.5 1045.7 800.8z" fill="#226820"/><path d="M1046.2 804.4L1058.5 802.1 1055.6 788.5 1044.3 790.5z" fill="#1f681f"/><path d="M1044.8 794.1L1056.4 792.0 1053.5 778.4 1042.8 780.2z" fill="#1d681f"/><path d="M1043.3 783.8L1054.3 781.9 1052.2 771.9 1041.9 773.6z" fill="#1b681e"/><path d="M1072.5 893.7L1089.3 889.0 1086.1 875.6 1070.0 880.0z" fill="#233a19"/><path d="M1070.6 883.5L1087.0 879.1 1083.8 865.7 1068.0 869.9z" fill="#29491e"/><path d="M1068.7 873.4L1084.6 869.2 1081.5 855.8 1066.1 859.8z" fill="#2b5320"/><path d="M1066.8 863.3L1082.3 859.3 1079.1 845.9 1064.2 849.7z" fill="#2d5c22"/><path d="M1064.9 853.2L1079.9 849.3 1076.8 835.9 1062.3 839.6z" fill="#2b6122"/><path d="M1063.0 843.1L1077.6 839.4 1074.5 826.0 1060.4 829.5z" fill="#296421"/><path d="M1061.0 833.0L1075.3 829.5 1072.1 816.1 1058.4 819.3z" fill="#286822"/><path d="M1059.1 822.9L1072.9 819.6 1069.8 806.2 1056.5 809.2z" fill="#276a22"/><path d="M1057.2 812.8L1070.6 809.6 1067.4 796.2 1054.6 799.1z" fill="#256a21"/><path d="M1055.3 802.7L1068.3 799.7 1065.1 786.3 1052.7 789.0z" fill="#236920"/><path d="M1053.4 792.5L1065.9 789.8 1062.8 776.4 1050.8 778.9z" fill="#206920"/><path d="M1051.4 782.4L1063.6 779.9 1061.2 769.9 1049.5 772.3z" fill="#1e691f"/><path d="M1085.0 890.2L1101.5 885.0 1098.0 871.8 1081.9 876.8z" fill="#263a1a"/><path d="M1082.7 880.3L1098.9 875.2 1095.3 862.0 1079.7 866.8z" fill="#2d4920"/><path d="M1080.5 870.3L1096.2 865.4 1092.7 852.2 1077.5 856.8z" fill="#305322"/><path d="M1078.3 860.3L1093.6 855.7 1090.0 842.5 1075.3 846.8z" fill="#325d25"/><path d="M1076.0 850.3L1091.0 845.9 1087.4 832.7 1073.0 836.9z" fill="#306124"/><path d="M1073.8 840.4L1088.3 836.1 1084.7 822.9 1070.8 826.9z" fill="#2e6524"/><path d="M1071.6 830.4L1085.7 826.3 1082.1 813.1 1068.6 816.9z" fill="#2c6923"/><path d="M1069.3 820.4L1083.0 816.6 1079.5 803.4 1066.3 807.0z" fill="#2b6b23"/><path d="M1067.1 810.4L1080.4 806.8 1076.8 793.6 1064.1 797.0z" fill="#286b22"/><path d="M1064.9 800.5L1077.7 797.0 1074.2 783.8 1061.9 787.0z" fill="#266b22"/><path d="M1062.7 790.5L1075.1 787.2 1071.5 774.0 1059.6 777.0z" fill="#246a21"/><path d="M1060.4 780.5L1072.5 777.5 1069.8 767.7 1058.2 770.6z" fill="#216a20"/><path d="M1097.2 886.3L1115.1 879.9 1110.8 867.1 1093.8 873.1z" fill="#293b1c"/><path d="M1094.7 876.5L1111.9 870.4 1107.6 857.5 1091.3 863.2z" fill="#314a22"/><path d="M1092.2 866.7L1108.7 860.9 1104.4 848.0 1088.7 853.4z" fill="#345425"/><path d="M1089.6 856.9L1105.5 851.3 1101.2 838.5 1086.2 843.6z" fill="#375d27"/><path d="M1087.1 847.0L1102.3 841.8 1098.0 828.9 1083.7 833.8z" fill="#356227"/><path d="M1084.6 837.2L1099.1 832.3 1094.8 819.4 1081.1 823.9z" fill="#346627"/><path d="M1082.0 827.4L1095.9 822.7 1091.6 809.9 1078.6 814.1z" fill="#326926"/><path d="M1079.5 817.6L1092.7 813.2 1088.4 800.3 1076.1 804.3z" fill="#2f6c25"/><path d="M1076.9 807.7L1089.5 803.7 1085.2 790.8 1073.5 794.5z" fill="#2c6c23"/><path d="M1074.4 797.9L1086.3 794.2 1082.0 781.3 1071.0 784.6z" fill="#296c23"/><path d="M1071.9 788.1L1083.2 784.6 1078.8 771.8 1068.4 774.8z" fill="#276c22"/><path d="M1069.3 778.3L1080.0 775.1 1076.8 765.6 1066.8 768.4z" fill="#256b21"/><path d="M1110.5 881.6L1126.6 875.1 1122.0 862.5 1106.4 868.6z" fill="#2c3b1e"/><path d="M1107.4 872.0L1123.2 865.7 1118.6 853.1 1103.4 859.0z" fill="#344a24"/><path d="M1104.4 862.4L1119.8 856.4 1115.1 843.7 1100.3 849.4z" fill="#385427"/><path d="M1101.4 852.8L1116.3 847.0 1111.7 834.3 1097.3 839.8z" fill="#3c5e2a"/><path d="M1098.4 843.2L1112.9 837.6 1108.3 825.0 1094.3 830.2z" fill="#3b622a"/><path d="M1095.3 833.6L1109.5 828.2 1104.9 815.6 1091.3 820.6z" fill="#39662a"/><path d="M1092.3 823.9L1106.1 818.9 1101.5 806.2 1088.2 811.0z" fill="#376a29"/><path d="M1089.3 814.3L1102.7 809.5 1098.0 796.8 1085.2 801.4z" fill="#356d28"/><path d="M1086.3 804.7L1099.2 800.1 1094.6 787.4 1082.2 791.8z" fill="#316d26"/><path d="M1083.3 795.1L1095.8 790.7 1091.2 778.1 1079.2 782.2z" fill="#2d6d24"/><path d="M1080.2 785.5L1092.4 781.4 1087.8 768.7 1076.1 772.6z" fill="#2a6d23"/><path d="M1077.2 775.9L1089.0 772.0 1085.6 762.6 1074.2 766.3z" fill="#286c23"/><path d="M1122.4 876.8L1138.3 869.8 1133.3 857.4 1117.9 864.1z" fill="#2e3b1f"/><path d="M1119.1 867.4L1134.6 860.6 1129.6 848.2 1114.6 854.6z" fill="#384b26"/><path d="M1115.8 857.9L1130.9 851.4 1125.9 839.0 1111.3 845.2z" fill="#3d552a"/><path d="M1112.5 848.5L1127.2 842.2 1122.2 829.8 1108.0 835.7z" fill="#405e2d"/><path d="M1109.1 839.1L1123.5 833.0 1118.5 820.6 1104.7 826.3z" fill="#40632d"/><path d="M1105.8 829.6L1119.8 823.8 1114.8 811.4 1101.4 816.9z" fill="#3f672d"/><path d="M1102.5 820.2L1116.1 814.6 1111.1 802.2 1098.0 807.4z" fill="#3d6b2c"/><path d="M1099.2 810.7L1112.4 805.4 1107.4 793.0 1094.7 798.0z" fill="#3a6d2b"/><path d="M1095.9 801.3L1108.7 796.2 1103.7 783.8 1091.4 788.6z" fill="#366d29"/><path d="M1092.6 791.9L1105.0 787.0 1100.0 774.6 1088.1 779.1z" fill="#326e27"/><path d="M1089.2 782.4L1101.2 777.8 1096.2 765.4 1084.8 769.7z" fill="#2e6e25"/><path d="M1085.9 773.0L1097.5 768.6 1093.8 759.4 1082.6 763.6z" fill="#2c6e24"/><path d="M1134.2 871.6L1149.9 864.2 1144.5 852.0 1129.3 859.1z" fill="#313c21"/><path d="M1130.6 862.4L1145.9 855.2 1140.5 843.0 1125.7 849.9z" fill="#3c4b28"/><path d="M1127.0 853.1L1141.9 846.1 1136.5 834.0 1122.1 840.6z" fill="#41552c"/><path d="M1123.4 843.8L1137.9 837.1 1132.5 824.9 1118.5 831.3z" fill="#455f2f"/><path d="M1119.8 834.6L1133.9 828.1 1128.5 815.9 1114.9 822.1z" fill="#456430"/><path d="M1116.2 825.3L1129.9 819.1 1124.6 806.9 1111.3 812.8z" fill="#446730"/><path d="M1112.6 816.1L1126.0 810.1 1120.6 797.9 1107.7 803.6z" fill="#436b2f"/><path d="M1109.0 806.8L1122.0 801.1 1116.6 788.9 1104.1 794.3z" fill="#406e2e"/><path d="M1105.4 797.5L1118.0 792.0 1112.6 779.9 1100.5 785.0z" fill="#3c6e2c"/><path d="M1101.7 788.3L1114.0 783.0 1108.6 770.8 1096.9 775.8z" fill="#386e2a"/><path d="M1098.1 779.0L1110.0 774.0 1104.6 761.8 1093.3 766.5z" fill="#346e28"/><path d="M1094.5 769.8L1106.0 765.0 1102.0 756.0 1090.9 760.5z" fill="#306f26"/><path d="M1145.8 866.1L1161.3 858.2 1155.5 846.3 1140.6 853.8z" fill="#343c23"/><path d="M1141.9 857.0L1157.0 849.4 1151.3 837.4 1136.7 844.8z" fill="#3f4c2a"/><path d="M1138.1 847.9L1152.8 840.5 1147.0 828.6 1132.8 835.7z" fill="#45562e"/><path d="M1134.2 838.9L1148.5 831.7 1142.7 819.8 1128.9 826.6z" fill="#4a6032"/><path d="M1130.3 829.8L1144.2 822.9 1138.4 810.9 1125.0 817.5z" fill="#4a6433"/><path d="M1126.4 820.7L1139.9 814.0 1134.2 802.1 1121.1 808.4z" fill="#4a6832"/><path d="M1122.5 811.6L1135.7 805.2 1129.9 793.3 1117.2 799.4z" fill="#486c32"/><path d="M1118.6 802.5L1131.4 796.4 1125.6 784.5 1113.3 790.3z" fill="#466f31"/><path d="M1114.7 793.5L1127.1 787.5 1121.3 775.6 1109.4 781.2z" fill="#426f2f"/><path d="M1110.8 784.4L1122.8 778.7 1117.1 766.8 1105.5 772.1z" fill="#3e6f2d"/><path d="M1106.9 775.3L1118.6 769.9 1112.8 758.0 1101.6 763.0z" fill="#3a6f2b"/><path d="M1103.0 766.2L1114.3 761.0 1110.0 752.2 1099.1 757.1z" fill="#366f29"/><path d="M1157.3 860.2L1172.6 851.9 1166.4 840.2 1151.7 848.2z" fill="#373c24"/><path d="M1153.1 851.3L1168.0 843.3 1161.9 831.6 1147.5 839.3z" fill="#434c2c"/><path d="M1149.0 842.5L1163.5 834.6 1157.3 823.0 1143.3 830.4z" fill="#495631"/><path d="M1144.8 833.6L1158.9 826.0 1152.7 814.3 1139.1 821.5z" fill="#4e6035"/><path d="M1140.6 824.7L1154.3 817.3 1148.2 805.7 1135.0 812.7z" fill="#4f6535"/><path d="M1136.4 815.8L1149.8 808.7 1143.6 797.0 1130.8 803.8z" fill="#4f6935"/><path d="M1132.2 806.9L1145.2 800.1 1139.1 788.4 1126.6 794.9z" fill="#4e6d35"/><path d="M1128.1 798.0L1140.7 791.4 1134.5 779.7 1122.4 786.0z" fill="#4c6f35"/><path d="M1123.9 789.1L1136.1 782.8 1130.0 771.1 1118.3 777.1z" fill="#486f33"/><path d="M1119.7 780.2L1131.6 774.1 1125.4 762.5 1114.1 768.2z" fill="#447030"/><path d="M1115.5 771.3L1127.0 765.5 1120.9 753.8 1109.9 759.3z" fill="#40702e"/><path d="M1111.4 762.4L1122.5 756.8 1117.9 748.2 1107.2 753.5z" fill="#3c702c"/><path d="M1168.6 854.1L1183.6 845.3 1177.1 833.9 1162.6 842.3z" fill="#3a3d26"/><path d="M1164.1 845.4L1178.8 836.9 1172.3 825.5 1158.1 833.6z" fill="#464c2f"/><path d="M1159.7 836.6L1174.0 828.4 1167.5 817.0 1153.7 824.9z" fill="#4d5733"/><path d="M1155.2 827.9L1169.1 820.0 1162.6 808.6 1149.2 816.2z" fill="#536137"/><path d="M1150.8 819.2L1164.3 811.5 1157.8 800.1 1144.8 807.5z" fill="#546538"/><path d="M1146.3 810.5L1159.5 803.1 1153.0 791.7 1140.3 798.8z" fill="#546938"/><path d="M1141.9 801.8L1154.7 794.6 1148.1 783.2 1135.9 790.1z" fill="#536d38"/><path d="M1137.4 793.1L1149.8 786.2 1143.3 774.8 1131.4 781.4z" fill="#527038"/><path d="M1133.0 784.4L1145.0 777.7 1138.5 766.3 1126.9 772.6z" fill="#4e7036"/><path d="M1128.5 775.7L1140.2 769.3 1133.6 757.9 1122.5 763.9z" fill="#4a7034"/><path d="M1124.0 767.0L1135.3 760.8 1128.8 749.4 1118.0 755.2z" fill="#467132"/><path d="M1119.6 758.3L1130.5 752.4 1125.7 743.9 1115.1 749.6z" fill="#42712f"/><path d="M1179.7 847.6L1194.5 838.5 1187.6 827.3 1173.3 836.1z" fill="#3b3c26"/><path d="M1175.0 839.1L1189.4 830.2 1182.5 819.1 1168.6 827.6z" fill="#4a4d31"/><path d="M1170.3 830.6L1184.3 822.0 1177.4 810.8 1163.9 819.1z" fill="#515736"/><path d="M1165.5 822.0L1179.2 813.7 1172.3 802.6 1159.1 810.5z" fill="#57613a"/><path d="M1160.8 813.5L1174.1 805.5 1167.2 794.3 1154.4 802.0z" fill="#58663b"/><path d="M1156.1 805.0L1169.0 797.2 1162.1 786.1 1149.7 793.5z" fill="#596a3b"/><path d="M1151.3 796.5L1163.9 788.9 1157.0 777.8 1144.9 785.0z" fill="#586e3c"/><path d="M1146.6 788.0L1158.8 780.7 1151.9 769.5 1140.2 776.5z" fill="#57713b"/><path d="M1141.9 779.5L1153.7 772.4 1146.8 761.3 1135.5 768.0z" fill="#537139"/><path d="M1137.1 770.9L1148.6 764.2 1141.7 753.0 1130.7 759.4z" fill="#507137"/><path d="M1132.4 762.4L1143.5 755.9 1136.6 744.8 1126.0 750.9z" fill="#4c7135"/><path d="M1127.7 753.9L1138.4 747.7 1133.3 739.4 1122.9 745.4z" fill="#487133"/><path d="M1190.7 840.8L1205.3 831.4 1198.0 820.5 1183.9 829.6z" fill="#3c3b26"/><path d="M1185.7 832.5L1199.9 823.3 1192.6 812.4 1178.9 821.3z" fill="#4b4c30"/><path d="M1180.7 824.2L1194.5 815.3 1187.3 804.4 1173.9 813.0z" fill="#555738"/><path d="M1175.7 815.9L1189.1 807.2 1181.9 796.3 1168.9 804.6z" fill="#5c623d"/><path d="M1170.7 807.5L1183.8 799.1 1176.5 788.3 1163.9 796.3z" fill="#5d673e"/><path d="M1165.7 799.2L1178.4 791.1 1171.1 780.2 1158.9 788.0z" fill="#5e6b3e"/><path d="M1160.7 790.9L1173.0 783.0 1165.8 772.1 1153.9 779.7z" fill="#5e6e3f"/><path d="M1155.6 782.6L1167.6 774.9 1160.4 764.1 1148.9 771.3z" fill="#5c713e"/><path d="M1150.6 774.3L1162.3 766.9 1155.0 756.0 1143.9 763.0z" fill="#59713c"/><path d="M1145.6 765.9L1156.9 758.8 1149.6 747.9 1138.9 754.7z" fill="#55723a"/><path d="M1140.6 757.6L1151.5 750.8 1144.2 739.9 1133.9 746.4z" fill="#527238"/><path d="M1135.6 749.3L1146.1 742.7 1140.8 734.6 1130.6 741.0z" fill="#4e7236"/><path d="M1201.5 833.8L1215.8 824.1 1208.2 813.4 1194.4 822.9z" fill="#3d3a25"/><path d="M1196.2 825.7L1210.2 816.2 1202.6 805.6 1189.1 814.7z" fill="#4c4a30"/><path d="M1190.9 817.6L1204.5 808.3 1196.9 797.7 1183.8 806.6z" fill="#565637"/><path d="M1185.7 809.4L1198.9 800.5 1191.3 789.8 1178.5 798.5z" fill="#5f623e"/><path d="M1180.4 801.3L1193.2 792.6 1185.6 782.0 1173.2 790.3z" fill="#626741"/><path d="M1175.1 793.2L1187.6 784.7 1180.0 774.1 1168.0 782.2z" fill="#626b41"/><path d="M1169.8 785.1L1182.0 776.8 1174.3 766.2 1162.7 774.1z" fill="#636f42"/><path d="M1164.5 776.9L1176.3 769.0 1168.7 758.4 1157.4 766.0z" fill="#627241"/><path d="M1159.2 768.8L1170.7 761.1 1163.1 750.5 1152.1 757.8z" fill="#5e723f"/><path d="M1154.0 760.7L1165.0 753.2 1157.4 742.6 1146.8 749.7z" fill="#5b723d"/><path d="M1148.7 752.5L1159.4 745.4 1151.8 734.7 1141.6 741.6z" fill="#57733b"/><path d="M1143.4 744.4L1153.8 737.5 1148.1 729.6 1138.1 736.3z" fill="#547339"/><path d="M1212.1 826.6L1225.3 817.2 1217.5 806.7 1204.6 815.9z" fill="#3e3925"/><path d="M1206.6 818.7L1219.6 809.4 1211.8 798.9 1199.1 807.9z" fill="#4e492f"/><path d="M1201.0 810.7L1213.8 801.6 1206.0 791.1 1193.5 800.0z" fill="#575436"/><path d="M1195.5 802.8L1208.0 793.8 1200.3 783.3 1188.0 792.1z" fill="#61603d"/><path d="M1189.9 794.9L1202.3 786.0 1194.5 775.5 1182.4 784.1z" fill="#656641"/><path d="M1184.4 786.9L1196.5 778.2 1188.7 767.7 1176.9 776.2z" fill="#676c44"/><path d="M1178.8 779.0L1190.8 770.5 1183.0 759.9 1171.3 768.3z" fill="#687045"/><path d="M1173.3 771.0L1185.0 762.7 1177.2 752.2 1165.8 760.3z" fill="#677344"/><path d="M1167.7 763.1L1179.2 754.9 1171.5 744.4 1160.2 752.4z" fill="#647342"/><path d="M1162.2 755.2L1173.5 747.1 1165.7 736.6 1154.7 744.4z" fill="#607340"/><path d="M1156.6 747.2L1167.7 739.3 1159.9 728.8 1149.1 736.5z" fill="#5d733e"/><path d="M1151.1 739.3L1161.9 731.5 1156.2 723.7 1145.5 731.3z" fill="#59733c"/><path d="M1221.9 819.6L1235.5 809.5 1227.4 799.2 1214.2 809.1z" fill="#3f3824"/><path d="M1216.2 811.8L1229.5 801.9 1221.4 791.6 1208.5 801.2z" fill="#4f482e"/><path d="M1210.5 804.0L1223.5 794.3 1215.3 784.0 1202.8 793.4z" fill="#595335"/><path d="M1204.8 796.1L1217.4 786.7 1209.3 776.4 1197.1 785.6z" fill="#625e3c"/><path d="M1199.1 788.3L1211.4 779.1 1203.3 768.8 1191.4 777.7z" fill="#666440"/><path d="M1193.4 780.5L1205.4 771.4 1197.3 761.2 1185.7 769.9z" fill="#6a6a44"/><path d="M1187.7 772.7L1199.4 763.8 1191.2 753.6 1180.0 762.1z" fill="#6d7047"/><path d="M1182.0 764.8L1193.4 756.2 1185.2 746.0 1174.2 754.3z" fill="#6c7348"/><path d="M1176.2 757.0L1187.3 748.6 1179.2 738.4 1168.5 746.4z" fill="#697446"/><path d="M1170.5 749.2L1181.3 741.0 1173.2 730.8 1162.8 738.6z" fill="#667444"/><path d="M1164.8 741.4L1175.3 733.4 1167.1 723.2 1157.1 730.8z" fill="#627442"/><path d="M1159.1 733.5L1169.3 725.8 1163.2 718.2 1153.4 725.7z" fill="#5f7440"/><path d="M1232.0 812.1L1245.7 801.4 1237.2 791.5 1224.0 801.8z" fill="#403724"/><path d="M1226.0 804.4L1239.4 794.0 1230.9 784.1 1218.0 794.1z" fill="#50462e"/><path d="M1220.1 796.8L1233.1 786.6 1224.6 776.7 1212.1 786.4z" fill="#5a5135"/><path d="M1214.2 789.1L1226.8 779.2 1218.3 769.2 1206.1 778.8z" fill="#645c3c"/><path d="M1208.2 781.5L1220.5 771.8 1211.9 761.8 1200.2 771.1z" fill="#68633f"/><path d="M1202.3 773.8L1214.2 764.4 1205.6 754.4 1194.3 763.4z" fill="#6b6843"/><path d="M1196.3 766.1L1207.8 757.0 1199.3 747.0 1188.3 755.8z" fill="#6e6e46"/><path d="M1190.4 758.5L1201.5 749.6 1193.0 739.6 1182.4 748.1z" fill="#707349"/><path d="M1184.5 750.8L1195.2 742.2 1186.7 732.2 1176.4 740.5z" fill="#6e7449"/><path d="M1178.5 743.1L1188.9 734.8 1180.4 724.8 1170.5 732.8z" fill="#6b7447"/><path d="M1172.6 735.5L1182.6 727.4 1174.1 717.4 1164.5 725.1z" fill="#687545"/><path d="M1166.6 727.8L1176.3 720.0 1170.0 712.6 1160.7 720.2z" fill="#647543"/><path d="M1242.2 804.2L1255.7 793.3 1246.8 783.6 1233.8 794.1z" fill="#413623"/><path d="M1235.9 796.7L1249.1 786.1 1240.2 776.3 1227.6 786.7z" fill="#51452d"/><path d="M1229.7 789.3L1242.5 778.9 1233.6 769.1 1221.3 779.2z" fill="#5b5034"/><path d="M1223.5 781.8L1235.9 771.7 1227.0 761.9 1215.1 771.7z" fill="#655b3b"/><path d="M1217.3 774.3L1229.3 764.5 1220.4 754.7 1208.9 764.2z" fill="#69613e"/><path d="M1211.1 766.9L1222.7 757.2 1213.9 747.5 1202.7 756.8z" fill="#6d6642"/><path d="M1204.9 759.4L1216.2 750.0 1207.3 740.3 1196.5 749.3z" fill="#706c45"/><path d="M1198.6 751.9L1209.6 742.8 1200.7 733.1 1190.3 741.8z" fill="#727148"/><path d="M1192.4 744.5L1203.0 735.6 1194.1 725.9 1184.0 734.4z" fill="#727349"/><path d="M1186.2 737.0L1196.4 728.4 1187.5 718.7 1177.8 726.9z" fill="#70754a"/><path d="M1180.0 729.5L1189.8 721.2 1180.9 711.5 1171.6 719.4z" fill="#6d7548"/><path d="M1173.8 722.0L1183.2 714.0 1176.6 706.8 1167.6 714.6z" fill="#6a7546"/><path d="M1252.2 796.1L1264.8 785.5 1255.7 775.9 1243.4 786.3z" fill="#423523"/><path d="M1245.7 788.8L1258.0 778.4 1248.9 768.8 1236.9 779.0z" fill="#52442c"/><path d="M1239.2 781.6L1251.3 771.3 1242.2 761.7 1230.4 771.7z" fill="#5d4e33"/><path d="M1232.7 774.3L1244.5 764.2 1235.4 754.6 1223.9 764.5z" fill="#67593a"/><path d="M1226.2 767.0L1237.8 757.1 1228.7 747.5 1217.5 757.2z" fill="#6b5f3e"/><path d="M1219.7 759.7L1231.1 750.0 1221.9 740.4 1211.0 749.9z" fill="#6e6541"/><path d="M1213.2 752.5L1224.3 742.9 1215.2 733.2 1204.5 742.6z" fill="#726a44"/><path d="M1206.7 745.2L1217.6 735.7 1208.5 726.1 1198.0 735.4z" fill="#746f47"/><path d="M1200.3 737.9L1210.8 728.6 1201.7 719.0 1191.5 728.1z" fill="#737148"/><path d="M1193.8 730.6L1204.1 721.5 1195.0 711.9 1185.0 720.8z" fill="#73734a"/><path d="M1187.3 723.4L1197.3 714.4 1188.2 704.8 1178.5 713.5z" fill="#72764b"/><path d="M1180.8 716.1L1190.6 707.3 1183.8 700.2 1174.3 708.8z" fill="#6f7649"/><path d="M1261.5 788.3L1274.1 777.3 1264.7 767.9 1252.5 778.6z" fill="#423322"/><path d="M1254.8 781.1L1267.2 770.3 1257.7 760.9 1245.8 771.5z" fill="#53422c"/><path d="M1248.2 774.0L1260.2 763.4 1250.8 754.0 1239.1 764.3z" fill="#5e4d32"/><path d="M1241.5 766.8L1253.2 756.4 1243.8 747.0 1232.5 757.2z" fill="#685739"/><path d="M1234.8 759.7L1246.2 749.4 1236.8 740.0 1225.8 750.0z" fill="#6d5d3d"/><path d="M1228.1 752.5L1239.3 742.5 1229.9 733.1 1219.1 742.8z" fill="#706340"/><path d="M1221.4 745.3L1232.3 735.5 1222.9 726.1 1212.4 735.7z" fill="#736843"/><path d="M1214.8 738.2L1225.3 728.5 1215.9 719.1 1205.7 728.5z" fill="#766d46"/><path d="M1208.1 731.0L1218.4 721.6 1209.0 712.2 1199.1 721.4z" fill="#756f47"/><path d="M1201.4 723.9L1211.4 714.6 1202.0 705.2 1192.4 714.2z" fill="#747149"/><path d="M1194.7 716.7L1204.4 707.6 1195.0 698.2 1185.7 707.1z" fill="#74744a"/><path d="M1188.0 709.6L1197.5 700.7 1190.5 693.7 1181.4 702.4z" fill="#73764b"/><path d="M1270.9 780.1L1282.6 769.6 1273.0 760.2 1261.5 770.7z" fill="#413120"/><path d="M1264.0 773.1L1275.5 762.6 1266.0 753.3 1254.7 763.7z" fill="#53402a"/><path d="M1257.1 766.1L1268.4 755.7 1258.9 746.3 1247.8 756.6z" fill="#5f4b31"/><path d="M1250.2 759.1L1261.4 748.8 1251.8 739.4 1240.9 749.6z" fill="#6a5638"/><path d="M1243.3 752.1L1254.3 741.8 1244.7 732.5 1234.0 742.6z" fill="#6e5b3c"/><path d="M1236.4 745.1L1247.2 734.9 1237.7 725.5 1227.1 735.6z" fill="#72613f"/><path d="M1229.5 738.1L1240.1 728.0 1230.6 718.6 1220.2 728.6z" fill="#756643"/><path d="M1222.6 731.0L1233.1 721.0 1223.5 711.7 1213.3 721.6z" fill="#776b45"/><path d="M1215.7 724.0L1226.0 714.1 1216.4 704.7 1206.4 714.5z" fill="#776d46"/><path d="M1208.8 717.0L1218.9 707.2 1209.4 697.8 1199.5 707.5z" fill="#766f48"/><path d="M1201.9 710.0L1211.8 700.2 1202.3 690.9 1192.6 700.5z" fill="#767249"/><path d="M1195.0 703.0L1204.8 693.3 1197.7 686.4 1188.1 696.0z" fill="#75744a"/><path d="M1279.5 772.3L1292.2 760.4 1282.3 751.4 1270.1 762.9z" fill="#402f1f"/><path d="M1272.5 765.4L1284.8 753.7 1274.9 744.7 1263.0 756.0z" fill="#523e29"/><path d="M1265.5 758.4L1277.4 747.1 1267.5 738.0 1256.0 749.0z" fill="#5e4830"/><path d="M1258.5 751.4L1270.0 740.4 1260.1 731.3 1249.0 742.1z" fill="#6a5337"/><path d="M1251.4 744.5L1262.6 733.7 1252.7 724.7 1241.9 735.1z" fill="#705a3b"/><path d="M1244.4 737.5L1255.2 727.0 1245.3 718.0 1234.9 728.1z" fill="#735f3e"/><path d="M1237.4 730.6L1247.8 720.3 1237.8 711.3 1227.9 721.2z" fill="#776442"/><path d="M1230.3 723.6L1240.4 713.6 1230.4 704.6 1220.9 714.2z" fill="#796944"/><path d="M1223.3 716.7L1233.0 706.9 1223.0 697.9 1213.8 707.3z" fill="#796b45"/><path d="M1216.3 709.7L1225.6 700.2 1215.6 691.2 1206.8 700.3z" fill="#786d47"/><path d="M1209.3 702.8L1218.2 693.5 1208.2 684.5 1199.8 693.4z" fill="#777048"/><path d="M1202.2 695.8L1210.8 686.9 1203.4 680.2 1195.2 688.8z" fill="#777249"/><path d="M1289.0 763.5L1300.3 752.5 1290.2 743.5 1279.1 754.4z" fill="#402d1e"/><path d="M1281.6 756.8L1292.8 745.8 1282.7 736.8 1271.8 747.6z" fill="#513b27"/><path d="M1274.3 750.0L1285.3 739.2 1275.2 730.2 1264.5 740.9z" fill="#5d452e"/><path d="M1267.0 743.2L1277.8 732.5 1267.7 723.5 1257.2 734.1z" fill="#695035"/><path d="M1259.7 736.5L1270.3 725.8 1260.2 716.8 1249.9 727.4z" fill="#705739"/><path d="M1252.4 729.7L1262.8 719.1 1252.7 710.1 1242.6 720.6z" fill="#755d3d"/><path d="M1245.1 723.0L1255.4 712.5 1245.2 703.4 1235.3 713.8z" fill="#796241"/><path d="M1237.8 716.2L1247.9 705.8 1237.8 696.8 1228.0 707.1z" fill="#7b6743"/><path d="M1230.5 709.5L1240.4 699.1 1230.3 690.1 1220.7 700.3z" fill="#7a6944"/><path d="M1223.2 702.7L1232.9 692.4 1222.8 683.4 1213.4 693.6z" fill="#7a6b46"/><path d="M1215.9 695.9L1225.4 685.7 1215.3 676.7 1206.0 686.8z" fill="#796d47"/><path d="M1208.6 689.2L1217.9 679.1 1210.4 672.4 1201.3 682.4z" fill="#797048"/><path d="M1297.4 755.4L1309.6 743.1 1299.1 734.4 1287.3 746.3z" fill="#3f2b1d"/><path d="M1289.9 748.7L1301.8 736.6 1291.3 728.0 1279.9 739.6z" fill="#503926"/><path d="M1282.5 742.0L1294.0 730.2 1283.5 721.5 1272.4 732.9z" fill="#5c432c"/><path d="M1275.0 735.3L1286.2 723.8 1275.7 715.1 1265.0 726.2z" fill="#684d33"/><path d="M1267.6 728.6L1278.4 717.4 1267.9 708.7 1257.5 719.5z" fill="#6e5437"/><path d="M1260.1 721.9L1270.6 710.9 1260.0 702.3 1250.1 712.8z" fill="#745a3b"/><path d="M1252.7 715.2L1262.8 704.5 1252.2 695.8 1242.7 706.1z" fill="#7a603f"/><path d="M1245.3 708.5L1255.0 698.1 1244.4 689.4 1235.2 699.4z" fill="#7d6542"/><path d="M1237.8 701.8L1247.2 691.7 1236.6 683.0 1227.8 692.7z" fill="#7c6743"/><path d="M1230.4 695.1L1239.3 685.2 1228.8 676.6 1220.3 686.0z" fill="#7c6945"/><path d="M1222.9 688.4L1231.5 678.8 1221.0 670.2 1212.9 679.3z" fill="#7b6b46"/><path d="M1215.5 681.7L1223.7 672.4 1215.9 666.0 1208.1 675.0z" fill="#7a6e47"/><path d="M1306.5 746.3L1317.4 734.9 1306.8 726.2 1296.0 737.5z" fill="#3e291b"/><path d="M1298.7 739.8L1309.5 728.5 1298.9 719.8 1288.3 731.0z" fill="#4f3624"/><path d="M1291.0 733.3L1301.6 722.1 1291.0 713.4 1280.6 724.5z" fill="#5b402a"/><path d="M1283.3 726.8L1293.7 715.6 1283.0 707.0 1272.9 718.0z" fill="#674a31"/><path d="M1275.6 720.3L1285.8 709.2 1275.1 700.6 1265.2 711.5z" fill="#6d5035"/><path d="M1267.9 713.8L1277.9 702.8 1267.2 694.2 1257.5 705.0z" fill="#735639"/><path d="M1260.2 707.3L1270.0 696.4 1259.3 687.7 1249.7 698.5z" fill="#795d3d"/><path d="M1252.5 700.8L1262.1 690.0 1251.4 681.3 1242.0 692.0z" fill="#7d6241"/><path d="M1244.7 694.3L1254.2 683.6 1243.5 674.9 1234.3 685.5z" fill="#7e6542"/><path d="M1237.0 687.8L1246.3 677.2 1235.6 668.5 1226.6 679.0z" fill="#7d6744"/><path d="M1229.3 681.3L1238.4 670.8 1227.7 662.1 1218.9 672.5z" fill="#7d6945"/><path d="M1221.6 674.8L1230.5 664.3 1222.6 657.9 1213.9 668.3z" fill="#7c6c46"/><path d="M1314.6 737.8L1325.4 726.3 1314.5 717.7 1304.0 729.1z" fill="#3e281b"/><path d="M1306.7 731.4L1317.3 719.9 1306.5 711.4 1296.1 722.7z" fill="#4e3422"/><path d="M1298.9 725.0L1309.3 713.6 1298.4 705.0 1288.3 716.3z" fill="#5a3d29"/><path d="M1291.0 718.5L1301.2 707.2 1290.4 698.7 1280.4 709.8z" fill="#66472f"/><path d="M1283.2 712.1L1293.2 700.9 1282.3 692.3 1272.6 703.4z" fill="#6c4d33"/><path d="M1275.3 705.7L1285.1 694.5 1274.3 686.0 1264.7 697.0z" fill="#725337"/><path d="M1267.5 699.2L1277.1 688.2 1266.2 679.6 1256.8 690.5z" fill="#77593b"/><path d="M1259.6 692.8L1269.1 681.8 1258.2 673.3 1249.0 684.1z" fill="#7c5f3e"/><path d="M1251.7 686.4L1261.0 675.5 1250.1 666.9 1241.1 677.7z" fill="#7e6241"/><path d="M1243.9 679.9L1253.0 669.1 1242.1 660.6 1233.3 671.2z" fill="#7f6543"/><path d="M1236.0 673.5L1244.9 662.8 1234.1 654.2 1225.4 664.8z" fill="#7f6744"/><path d="M1228.2 667.1L1236.9 656.4 1228.8 650.1 1220.3 660.6z" fill="#7e6a45"/><path d="M1322.6 729.3L1333.2 717.6 1322.1 709.1 1311.8 720.7z" fill="#3d261a"/><path d="M1314.6 722.9L1325.0 711.3 1313.9 702.8 1303.8 714.3z" fill="#4e3221"/><path d="M1306.6 716.5L1316.8 705.0 1305.8 696.5 1295.8 707.9z" fill="#593a27"/><path d="M1298.6 710.2L1308.6 698.7 1297.6 690.2 1287.8 701.6z" fill="#65442d"/><path d="M1290.6 703.8L1300.4 692.4 1289.4 683.9 1279.8 695.2z" fill="#6b4a31"/><path d="M1282.6 697.4L1292.3 686.1 1281.2 677.6 1271.8 688.8z" fill="#705035"/><path d="M1274.6 691.0L1284.1 679.8 1273.0 671.4 1263.8 682.4z" fill="#765639"/><path d="M1266.6 684.7L1275.9 673.6 1264.8 665.1 1255.8 676.1z" fill="#7b5b3c"/><path d="M1258.6 678.3L1267.7 667.3 1256.6 658.8 1247.8 669.7z" fill="#7c5e3e"/><path d="M1250.6 671.9L1259.5 661.0 1248.4 652.5 1239.8 663.3z" fill="#7e6240"/><path d="M1242.6 665.6L1251.3 654.7 1240.3 646.2 1231.8 656.9z" fill="#806543"/><path d="M1234.6 659.2L1243.1 648.4 1234.9 642.1 1226.6 652.8z" fill="#806744"/><path d="M1330.4 720.6L1340.9 708.7 1329.6 700.3 1319.5 712.1z" fill="#3d2519"/><path d="M1322.3 714.3L1332.5 702.5 1321.3 694.1 1311.3 705.8z" fill="#4d3020"/><path d="M1314.2 708.0L1324.2 696.3 1313.0 687.9 1303.2 699.5z" fill="#583826"/><path d="M1306.0 701.7L1315.9 690.1 1304.6 681.7 1295.0 693.2z" fill="#64412b"/><path d="M1297.9 695.4L1307.6 683.8 1296.3 675.4 1286.9 686.8z" fill="#6a472f"/><path d="M1289.7 689.1L1299.2 677.6 1288.0 669.2 1278.8 680.5z" fill="#6f4c33"/><path d="M1281.6 682.7L1290.9 671.4 1279.6 663.0 1270.6 674.2z" fill="#755236"/><path d="M1273.5 676.4L1282.6 665.2 1271.3 656.8 1262.5 667.9z" fill="#79573a"/><path d="M1265.3 670.1L1274.2 658.9 1263.0 650.5 1254.3 661.6z" fill="#7b5b3c"/><path d="M1257.2 663.8L1265.9 652.7 1254.7 644.3 1246.2 655.3z" fill="#7d5e3e"/><path d="M1249.1 657.5L1257.6 646.5 1246.3 638.1 1238.1 649.0z" fill="#7f6140"/><path d="M1240.9 651.2L1249.2 640.3 1240.9 634.0 1232.8 644.9z" fill="#806542"/><path d="M1338.2 711.8L1348.7 699.5 1337.2 691.3 1327.0 703.4z" fill="#3c2318"/><path d="M1329.9 705.6L1340.1 693.4 1328.7 685.1 1318.7 697.1z" fill="#4d2e1f"/><path d="M1321.6 699.3L1331.6 687.3 1320.2 679.0 1310.4 690.9z" fill="#583625"/><path d="M1313.3 693.1L1323.1 681.2 1311.6 672.9 1302.1 684.6z" fill="#633e2a"/><path d="M1305.0 686.8L1314.6 675.1 1303.1 666.8 1293.9 678.4z" fill="#69442d"/><path d="M1296.8 680.6L1306.1 669.0 1294.6 660.7 1285.6 672.1z" fill="#6e4930"/><path d="M1288.5 674.3L1297.6 662.9 1286.1 654.6 1277.3 665.9z" fill="#734f34"/><path d="M1280.2 668.1L1289.1 656.7 1277.6 648.5 1269.0 659.7z" fill="#785437"/><path d="M1271.9 661.8L1280.6 650.6 1269.1 642.4 1260.7 653.4z" fill="#7a573a"/><path d="M1263.6 655.6L1272.1 644.5 1260.6 636.3 1252.5 647.2z" fill="#7b5a3c"/><path d="M1255.4 649.3L1263.6 638.4 1252.1 630.2 1244.2 640.9z" fill="#7d5e3e"/><path d="M1247.1 643.1L1255.1 632.3 1246.6 626.2 1238.8 636.9z" fill="#7f6140"/><path d="M1345.9 702.7L1356.3 690.2 1344.6 682.1 1334.5 694.4z" fill="#3b2117"/><path d="M1337.5 696.5L1347.6 684.2 1335.9 676.1 1326.1 688.3z" fill="#4c2c1e"/><path d="M1329.0 690.4L1338.9 678.2 1327.2 670.1 1317.6 682.1z" fill="#573423"/><path d="M1320.6 684.3L1330.2 672.2 1318.5 664.1 1309.2 676.0z" fill="#623c29"/><path d="M1312.1 678.1L1321.6 666.2 1309.8 658.1 1300.7 669.8z" fill="#68412c"/><path d="M1303.7 672.0L1312.9 660.2 1301.2 652.1 1292.3 663.7z" fill="#6d462f"/><path d="M1295.2 665.8L1304.2 654.2 1292.5 646.1 1283.8 657.5z" fill="#724b32"/><path d="M1286.8 659.7L1295.5 648.2 1283.8 640.1 1275.4 651.4z" fill="#775035"/><path d="M1278.3 653.5L1286.8 642.2 1275.1 634.1 1266.9 645.2z" fill="#785337"/><path d="M1269.9 647.4L1278.2 636.2 1266.4 628.2 1258.5 639.1z" fill="#7a5739"/><path d="M1261.4 641.3L1269.5 630.2 1257.8 622.2 1250.0 633.0z" fill="#7c5a3b"/><path d="M1253.0 635.1L1260.8 624.3 1252.1 618.3 1244.6 629.0z" fill="#7e5d3e"/><path d="M1353.6 693.4L1363.8 680.7 1351.8 672.8 1342.0 685.3z" fill="#3a1f16"/><path d="M1345.0 687.4L1354.9 674.9 1343.0 666.9 1333.3 679.2z" fill="#4a291d"/><path d="M1336.4 681.4L1346.1 669.0 1334.1 661.1 1324.7 673.2z" fill="#563122"/><path d="M1327.7 675.3L1337.2 663.1 1325.3 655.2 1316.1 667.2z" fill="#623927"/><path d="M1319.1 669.3L1328.4 657.2 1316.4 649.3 1307.5 661.1z" fill="#673e2b"/><path d="M1310.5 663.3L1319.5 651.4 1307.6 643.4 1298.9 655.1z" fill="#6c432d"/><path d="M1301.9 657.2L1310.7 645.5 1298.7 637.6 1290.2 649.1z" fill="#714830"/><path d="M1293.3 651.2L1301.8 639.6 1289.9 631.7 1281.6 643.1z" fill="#754d33"/><path d="M1284.6 645.2L1293.0 633.7 1281.0 625.8 1273.0 637.0z" fill="#775035"/><path d="M1276.0 639.1L1284.1 627.9 1272.2 619.9 1264.4 631.0z" fill="#795337"/><path d="M1267.4 633.1L1275.3 622.0 1263.3 614.1 1255.8 625.0z" fill="#7b5639"/><path d="M1258.8 627.1L1266.4 616.1 1257.6 610.2 1250.2 621.0z" fill="#7c5a3b"/><path d="M1361.1 684.0L1371.0 671.3 1358.9 663.5 1349.3 676.0z" fill="#381d14"/><path d="M1352.3 678.1L1362.0 665.5 1349.9 657.7 1340.5 670.1z" fill="#48271b"/><path d="M1343.6 672.2L1353.0 659.8 1340.9 652.0 1331.7 664.2z" fill="#542f20"/><path d="M1334.8 666.3L1344.0 654.0 1331.9 646.2 1322.9 658.3z" fill="#603626"/><path d="M1326.0 660.4L1335.0 648.2 1322.9 640.4 1314.1 652.4z" fill="#673c29"/><path d="M1317.2 654.5L1326.0 642.5 1313.9 634.7 1305.3 646.5z" fill="#6c402c"/><path d="M1308.4 648.5L1317.0 636.7 1304.9 628.9 1296.5 640.6z" fill="#71452f"/><path d="M1299.6 642.6L1308.0 630.9 1295.9 623.1 1287.7 634.6z" fill="#754a32"/><path d="M1290.8 636.7L1299.0 625.1 1286.9 617.4 1279.0 628.7z" fill="#764c33"/><path d="M1282.0 630.8L1290.0 619.4 1277.9 611.6 1270.2 622.8z" fill="#774f35"/><path d="M1273.2 624.9L1281.0 613.6 1268.9 605.8 1261.4 616.9z" fill="#795237"/><path d="M1264.4 619.0L1272.0 607.8 1263.0 602.1 1255.7 613.0z" fill="#7b5639"/><path d="M1368.5 674.6L1377.1 663.3 1365.0 655.3 1356.4 666.8z" fill="#371b13"/><path d="M1359.5 668.8L1368.1 657.4 1356.0 649.4 1347.5 661.0z" fill="#46251a"/><path d="M1350.6 663.0L1359.1 651.4 1347.0 643.4 1338.5 655.1z" fill="#522c1f"/><path d="M1341.6 657.2L1350.2 645.5 1338.0 637.5 1329.6 649.3z" fill="#5e3324"/><path d="M1332.7 651.4L1341.2 639.6 1329.1 631.6 1320.6 643.5z" fill="#653927"/><path d="M1323.7 645.6L1332.2 633.7 1320.1 625.7 1311.7 637.7z" fill="#6b3d2b"/><path d="M1314.8 639.8L1323.2 627.8 1311.1 619.8 1302.7 631.9z" fill="#70422e"/><path d="M1305.9 633.9L1314.3 621.8 1302.2 613.8 1293.8 626.1z" fill="#744730"/><path d="M1296.9 628.1L1305.3 615.9 1293.2 607.9 1284.8 620.3z" fill="#754931"/><path d="M1288.0 622.3L1296.3 610.0 1284.2 602.0 1275.9 614.5z" fill="#774c33"/><path d="M1279.0 616.5L1287.4 604.1 1275.2 596.1 1266.9 608.7z" fill="#784f34"/><path d="M1270.1 610.7L1278.4 598.2 1269.4 592.2 1261.1 604.9z" fill="#7a5236"/><path d="M1374.8 666.2L1384.2 653.5 1371.9 645.7 1362.7 658.3z" fill="#351a12"/><path d="M1365.9 660.3L1375.1 647.7 1362.8 639.9 1353.8 652.4z" fill="#442218"/><path d="M1356.9 654.4L1365.9 641.9 1353.6 634.1 1344.8 646.5z" fill="#50291d"/><path d="M1347.9 648.5L1356.8 636.2 1344.5 628.3 1335.8 640.6z" fill="#5b3022"/><path d="M1339.0 642.7L1347.7 630.4 1335.3 622.6 1326.9 634.7z" fill="#623525"/><path d="M1330.0 636.8L1338.5 624.6 1326.2 616.8 1317.9 628.8z" fill="#683a28"/><path d="M1321.1 630.9L1329.4 618.8 1317.1 611.0 1308.9 622.9z" fill="#6f3f2c"/><path d="M1312.1 625.0L1320.3 613.0 1307.9 605.2 1300.0 617.0z" fill="#73442f"/><path d="M1303.1 619.1L1311.1 607.2 1298.8 599.4 1291.0 611.1z" fill="#744630"/><path d="M1294.2 613.2L1302.0 601.5 1289.6 593.7 1282.1 605.2z" fill="#764931"/><path d="M1285.2 607.3L1292.8 595.7 1280.5 587.9 1273.1 599.4z" fill="#774c33"/><path d="M1276.2 601.4L1283.7 589.9 1274.6 584.1 1267.3 595.5z" fill="#784e34"/><path d="M1381.8 656.8L1391.0 644.0 1378.5 636.3 1369.5 649.0z" fill="#331811"/><path d="M1372.7 651.0L1381.8 638.3 1369.2 630.6 1360.4 643.1z" fill="#422016"/><path d="M1363.6 645.2L1372.5 632.6 1360.0 624.9 1351.3 637.3z" fill="#4d261b"/><path d="M1354.5 639.4L1363.2 626.9 1350.7 619.2 1342.2 631.5z" fill="#592d20"/><path d="M1345.4 633.6L1354.0 621.2 1341.5 613.5 1333.1 625.7z" fill="#5f3223"/><path d="M1336.3 627.7L1344.7 615.5 1332.2 607.8 1324.0 619.9z" fill="#663726"/><path d="M1327.2 621.9L1335.4 609.8 1322.9 602.1 1315.0 614.1z" fill="#6c3c2a"/><path d="M1318.1 616.1L1326.2 604.1 1313.7 596.4 1305.9 608.3z" fill="#72402d"/><path d="M1309.0 610.3L1316.9 598.4 1304.4 590.7 1296.8 602.5z" fill="#74432e"/><path d="M1299.9 604.5L1307.6 592.7 1295.1 585.0 1287.7 596.7z" fill="#754630"/><path d="M1290.9 598.7L1298.4 587.0 1285.9 579.3 1278.6 590.8z" fill="#764931"/><path d="M1281.8 592.9L1289.1 581.3 1279.9 575.6 1272.7 587.1z" fill="#784b33"/><path d="M1388.6 647.3L1397.7 634.4 1385.0 626.8 1376.2 639.6z" fill="#321710"/><path d="M1379.4 641.6L1388.3 628.7 1375.6 621.2 1367.0 633.8z" fill="#411e15"/><path d="M1370.2 635.8L1378.9 623.1 1366.2 615.6 1357.7 628.1z" fill="#4b2419"/><path d="M1361.0 630.1L1369.5 617.5 1356.9 609.9 1348.5 622.4z" fill="#562a1e"/><path d="M1351.7 624.4L1360.1 611.9 1347.5 604.3 1339.3 616.7z" fill="#5d2f21"/><path d="M1342.5 618.7L1350.8 606.3 1338.1 598.7 1330.1 610.9z" fill="#633324"/><path d="M1333.3 612.9L1341.4 600.7 1328.7 593.1 1320.9 605.2z" fill="#693827"/><path d="M1324.1 607.2L1332.0 595.1 1319.3 587.5 1311.6 599.5z" fill="#6f3d2a"/><path d="M1314.9 601.5L1322.6 589.5 1309.9 581.9 1302.4 593.7z" fill="#72402c"/><path d="M1305.6 595.7L1313.2 583.8 1300.6 576.3 1293.2 588.0z" fill="#74432e"/><path d="M1296.4 590.0L1303.8 578.2 1291.2 570.7 1284.0 582.3z" fill="#764630"/><path d="M1287.2 584.3L1294.5 572.6 1285.1 567.0 1278.0 578.6z" fill="#774831"/><path d="M1395.3 637.7L1404.2 624.7 1391.4 617.2 1382.7 630.1z" fill="#311610"/><path d="M1386.0 632.1L1394.7 619.1 1381.9 611.7 1373.4 624.5z" fill="#3f1d15"/><path d="M1376.7 626.4L1385.2 613.6 1372.4 606.2 1364.0 618.8z" fill="#492218"/><path d="M1367.3 620.8L1375.7 608.1 1362.9 600.6 1354.7 613.2z" fill="#54281c"/><path d="M1358.0 615.1L1366.2 602.6 1353.4 595.1 1345.4 607.5z" fill="#5a2c1f"/><path d="M1348.6 609.5L1356.7 597.1 1343.9 589.6 1336.0 601.9z" fill="#603022"/><path d="M1339.3 603.9L1347.2 591.5 1334.4 584.1 1326.7 596.2z" fill="#663525"/><path d="M1329.9 598.2L1337.7 586.0 1324.9 578.6 1317.3 590.6z" fill="#6c3928"/><path d="M1320.6 592.6L1328.2 580.5 1315.4 573.0 1308.0 585.0z" fill="#6f3c2a"/><path d="M1311.3 586.9L1318.7 575.0 1305.9 567.5 1298.7 579.3z" fill="#723f2c"/><path d="M1301.9 581.3L1309.2 569.4 1296.4 562.0 1289.3 573.7z" fill="#75422e"/><path d="M1292.6 575.6L1299.7 563.9 1290.2 558.4 1283.2 570.0z" fill="#764530"/><path d="M1401.9 628.0L1409.8 616.2 1397.0 608.6 1389.2 620.5z" fill="#2f150f"/><path d="M1392.5 622.5L1400.3 610.6 1387.5 602.9 1379.7 615.0z" fill="#3d1c14"/><path d="M1383.0 616.9L1390.9 604.9 1378.1 597.3 1370.2 609.4z" fill="#472117"/><path d="M1373.6 611.4L1381.4 599.3 1368.6 591.6 1360.8 603.9z" fill="#51261b"/><path d="M1364.1 605.8L1371.9 593.6 1359.1 586.0 1351.3 598.3z" fill="#57291d"/><path d="M1354.6 600.3L1362.4 588.0 1349.7 580.3 1341.9 592.8z" fill="#5d2d20"/><path d="M1345.2 594.7L1353.0 582.3 1340.2 574.7 1332.4 587.2z" fill="#633123"/><path d="M1335.7 589.2L1343.5 576.6 1330.7 569.0 1322.9 581.7z" fill="#693525"/><path d="M1326.3 583.6L1334.0 571.0 1321.2 563.4 1313.5 576.1z" fill="#6c3928"/><path d="M1316.8 578.1L1324.5 565.3 1311.8 557.7 1304.0 570.6z" fill="#6e3c2a"/><path d="M1307.3 572.5L1315.1 559.7 1302.3 552.1 1294.6 565.0z" fill="#713f2c"/><path d="M1297.9 567.0L1305.6 554.0 1296.1 548.4 1288.4 561.4z" fill="#74422e"/><path d="M1407.8 619.3L1416.4 606.0 1403.4 598.6 1395.0 611.7z" fill="#2e140f"/><path d="M1398.3 613.6L1406.7 600.5 1393.8 593.1 1385.5 606.1z" fill="#3b1a13"/><path d="M1388.8 608.0L1397.1 595.0 1384.1 587.6 1376.0 600.4z" fill="#451f16"/><path d="M1379.4 602.4L1387.5 589.5 1374.5 582.1 1366.6 594.8z" fill="#4f241a"/><path d="M1369.9 596.8L1377.9 584.0 1364.9 576.6 1357.1 589.2z" fill="#55281c"/><path d="M1360.4 591.1L1368.3 578.5 1355.3 571.1 1347.6 583.6z" fill="#5b2b1e"/><path d="M1350.9 585.5L1358.7 573.0 1345.7 565.6 1338.2 577.9z" fill="#602e20"/><path d="M1341.5 579.9L1349.0 567.6 1336.1 560.1 1328.7 572.3z" fill="#663223"/><path d="M1332.0 574.3L1339.4 562.1 1326.4 554.6 1319.2 566.7z" fill="#683525"/><path d="M1322.5 568.6L1329.8 556.6 1316.8 549.1 1309.8 561.1z" fill="#6b3827"/><path d="M1313.1 563.0L1320.2 551.1 1307.2 543.6 1300.3 555.4z" fill="#6e3b29"/><path d="M1303.6 557.4L1310.6 545.6 1301.0 540.1 1294.1 551.8z" fill="#713e2b"/><path d="M1414.1 609.5L1421.7 597.4 1408.8 589.8 1401.2 602.0z" fill="#2c130e"/><path d="M1404.5 603.9L1412.1 591.8 1399.2 584.2 1391.6 596.5z" fill="#391912"/><path d="M1395.0 598.4L1402.5 586.2 1389.6 578.6 1382.0 590.9z" fill="#431e16"/><path d="M1385.4 592.9L1393.0 580.6 1380.0 573.0 1372.5 585.4z" fill="#4d2319"/><path d="M1375.8 587.3L1383.4 575.0 1370.4 567.4 1362.9 579.9z" fill="#52261b"/><path d="M1366.2 581.8L1373.8 569.3 1360.9 561.7 1353.3 574.3z" fill="#58291d"/><path d="M1356.7 576.3L1364.2 563.7 1351.3 556.1 1343.7 568.8z" fill="#5e2c1f"/><path d="M1347.1 570.8L1354.6 558.1 1341.7 550.5 1334.2 563.3z" fill="#632f21"/><path d="M1337.5 565.2L1345.1 552.5 1332.1 544.9 1324.6 557.8z" fill="#653123"/><path d="M1327.9 559.7L1335.5 546.9 1322.6 539.3 1315.0 552.2z" fill="#683425"/><path d="M1318.3 554.2L1325.9 541.2 1313.0 533.6 1305.4 546.7z" fill="#6b3727"/><path d="M1308.8 548.6L1316.3 535.6 1306.7 530.0 1299.2 543.1z" fill="#6e3b29"/><path d="M1419.7 600.5L1427.9 587.0 1414.8 579.7 1406.8 593.0z" fill="#2b120d"/><path d="M1410.2 595.0L1418.2 581.6 1405.1 574.2 1397.2 587.4z" fill="#381812"/><path d="M1400.6 589.4L1408.5 576.1 1395.4 568.8 1387.6 581.8z" fill="#411c15"/><path d="M1391.0 583.8L1398.8 570.7 1385.7 563.3 1378.1 576.2z" fill="#4a2118"/><path d="M1381.4 578.2L1389.1 565.2 1376.0 557.9 1368.5 570.6z" fill="#50241a"/><path d="M1371.8 572.6L1379.4 559.8 1366.3 552.4 1358.9 565.0z" fill="#55271c"/><path d="M1362.3 567.0L1369.7 554.3 1356.6 547.0 1349.3 559.4z" fill="#5b2a1e"/><path d="M1352.7 561.4L1360.0 548.9 1346.9 541.5 1339.8 553.8z" fill="#602d20"/><path d="M1343.1 555.8L1350.3 543.4 1337.2 536.1 1330.2 548.2z" fill="#632f21"/><path d="M1333.5 550.2L1340.6 538.0 1327.5 530.6 1320.6 542.6z" fill="#653122"/><path d="M1323.9 544.6L1330.9 532.5 1317.8 525.2 1311.0 537.0z" fill="#683424"/><path d="M1314.4 539.0L1321.2 527.1 1311.5 521.6 1304.8 533.4z" fill="#6b3726"/><path d="M1425.8 590.5L1432.9 578.3 1419.9 570.8 1412.7 583.1z" fill="#2a120d"/><path d="M1416.1 585.1L1423.3 572.7 1410.3 565.2 1403.1 577.6z" fill="#361711"/><path d="M1406.5 579.6L1413.7 567.1 1400.6 559.6 1393.4 572.2z" fill="#3f1b14"/><path d="M1396.8 574.1L1404.0 561.6 1391.0 554.1 1383.7 566.7z" fill="#481f17"/><path d="M1387.1 568.6L1394.4 556.0 1381.3 548.5 1374.1 561.2z" fill="#4d2219"/><path d="M1377.5 563.1L1384.7 550.5 1371.7 542.9 1364.4 555.7z" fill="#53251b"/><path d="M1367.8 557.6L1375.1 544.9 1362.1 537.4 1354.7 550.2z" fill="#58281d"/><path d="M1358.1 552.1L1365.4 539.3 1352.4 531.8 1345.1 544.7z" fill="#5d2b1f"/><path d="M1348.4 546.6L1355.8 533.8 1342.8 526.3 1335.4 539.2z" fill="#602d20"/><path d="M1338.8 541.1L1346.1 528.2 1333.1 520.7 1325.7 533.7z" fill="#622e21"/><path d="M1329.1 535.7L1336.5 522.6 1323.5 515.1 1316.0 528.2z" fill="#653022"/><path d="M1319.4 530.2L1326.9 517.1 1317.2 511.5 1309.8 524.7z" fill="#683324"/><path d="M1431.1 581.4L1438.8 567.6 1425.6 560.4 1418.1 574.0z" fill="#2a110d"/><path d="M1421.4 575.9L1429.0 562.3 1415.9 555.0 1408.4 568.4z" fill="#351610"/><path d="M1411.8 570.4L1419.3 556.9 1406.1 549.6 1398.8 562.9z" fill="#3e1a13"/><path d="M1402.1 564.8L1409.5 551.5 1396.4 544.3 1389.1 557.3z" fill="#461e16"/><path d="M1392.5 559.3L1399.8 546.1 1386.7 538.9 1379.5 551.8z" fill="#4b2118"/><path d="M1382.8 553.7L1390.1 540.8 1376.9 533.5 1369.8 546.2z" fill="#50231a"/><path d="M1373.2 548.2L1380.3 535.4 1367.2 528.1 1360.2 540.7z" fill="#56261c"/><path d="M1363.5 542.6L1370.6 530.0 1357.5 522.7 1350.5 535.2z" fill="#5a291e"/><path d="M1353.9 537.1L1360.9 524.6 1347.7 517.4 1340.9 529.6z" fill="#5d2b1f"/><path d="M1344.2 531.6L1351.1 519.3 1338.0 512.0 1331.2 524.1z" fill="#602c20"/><path d="M1334.6 526.0L1341.4 513.9 1328.2 506.6 1321.6 518.5z" fill="#622e21"/><path d="M1324.9 520.5L1331.7 508.5 1321.9 503.1 1315.3 514.9z" fill="#653022"/><path d="M1436.8 571.2L1443.4 558.6 1430.3 551.2 1423.7 563.9z" fill="#2a110d"/><path d="M1427.1 565.8L1433.7 553.2 1420.7 545.8 1413.9 558.5z" fill="#351610"/><path d="M1417.3 560.4L1424.1 547.7 1411.0 540.3 1404.2 553.1z" fill="#3c1912"/><path d="M1407.6 555.0L1414.4 542.2 1401.4 534.8 1394.5 547.6z" fill="#451d15"/><path d="M1397.9 549.5L1404.8 536.8 1391.8 529.4 1384.8 542.2z" fill="#4a2017"/><path d="M1388.2 544.1L1395.1 531.3 1382.1 523.9 1375.1 536.8z" fill="#4e2219"/><path d="M1378.5 538.7L1385.5 525.8 1372.5 518.4 1365.4 531.4z" fill="#53241b"/><path d="M1368.8 533.3L1375.8 520.3 1362.8 513.0 1355.7 526.0z" fill="#57271c"/><path d="M1359.1 527.9L1366.2 514.9 1353.2 507.5 1345.9 520.5z" fill="#5a291d"/><path d="M1349.3 522.4L1356.5 509.4 1343.5 502.0 1336.2 515.1z" fill="#5d2a1e"/><path d="M1339.6 517.0L1346.9 503.9 1333.9 496.5 1326.5 509.7z" fill="#602c20"/><path d="M1329.9 511.6L1337.2 498.5 1327.6 493.0 1320.2 506.2z" fill="#622e21"/><path d="M1441.7 561.9L1447.9 549.2 1435.0 541.7 1428.6 554.5z" fill="#2a110d"/><path d="M1432.0 556.4L1438.4 543.7 1425.5 536.2 1418.9 549.1z" fill="#351610"/><path d="M1422.3 551.0L1428.8 538.2 1415.9 530.7 1409.3 543.6z" fill="#3c1912"/><path d="M1412.7 545.5L1419.2 532.7 1406.3 525.2 1399.6 538.2z" fill="#441c15"/><path d="M1403.0 540.1L1409.7 527.2 1396.7 519.8 1389.9 532.7z" fill="#481e16"/><path d="M1393.3 534.6L1400.1 521.7 1387.2 514.3 1380.3 527.2z" fill="#4c2118"/><path d="M1383.7 529.2L1390.5 516.2 1377.6 508.8 1370.6 521.8z" fill="#51231a"/><path d="M1374.0 523.7L1380.9 510.7 1368.0 503.3 1361.0 516.3z" fill="#55251b"/><path d="M1364.3 518.2L1371.4 505.2 1358.4 497.8 1351.3 510.9z" fill="#57271c"/><path d="M1354.7 512.8L1361.8 499.7 1348.9 492.3 1341.6 505.4z" fill="#5a281d"/><path d="M1345.0 507.3L1352.2 494.2 1339.3 486.8 1332.0 500.0z" fill="#5d2a1e"/><path d="M1335.3 501.9L1342.6 488.7 1333.1 483.2 1325.7 496.4z" fill="#5f2c20"/><path d="M1446.3 552.5L1457.8 526.5 1443.6 521.9 1433.4 545.1z" fill="#2a110d"/><path d="M1436.7 547.0L1447.3 523.1 1433.1 518.5 1423.8 539.6z" fill="#351610"/><path d="M1427.1 541.5L1436.8 519.7 1422.6 515.2 1414.2 534.1z" fill="#3c1912"/><path d="M1417.5 536.0L1426.3 516.3 1412.1 511.8 1404.6 528.6z" fill="#441c15"/><path d="M1407.9 530.5L1415.8 512.9 1401.6 508.4 1395.0 523.1z" fill="#471e16"/><path d="M1398.3 525.0L1405.2 509.6 1391.0 505.0 1385.4 517.6z" fill="#4a1f17"/><path d="M1388.7 519.5L1394.7 506.2 1380.5 501.6 1375.8 512.1z" fill="#4f2219"/><path d="M1379.1 514.1L1384.2 502.8 1370.0 498.2 1366.2 506.7z" fill="#53241a"/><path d="M1369.5 508.6L1373.7 499.4 1359.5 494.8 1356.6 501.2z" fill="#55251b"/><path d="M1359.9 503.1L1363.2 496.0 1349.0 491.4 1347.0 495.7z" fill="#57261c"/><path d="M1350.3 497.6L1352.7 492.6 1338.5 488.0 1337.4 490.2z" fill="#5a281d"/><path d="M1340.7 492.1L1342.1 489.2 1331.6 485.8 1331.2 486.6z" fill="#5d2a1e"/><path d="M1454.8 533.2L1465.0 505.7 1450.0 503.5 1441.0 527.9z" fill="#2a110d"/><path d="M1444.6 529.3L1453.9 504.1 1438.9 501.9 1430.7 524.0z" fill="#351610"/><path d="M1434.3 525.4L1442.8 502.5 1427.7 500.2 1420.4 520.1z" fill="#3c1912"/><path d="M1424.0 521.4L1431.6 500.8 1416.6 498.6 1410.1 516.1z" fill="#441c15"/><path d="M1413.7 517.5L1420.5 499.2 1405.5 496.9 1399.9 512.2z" fill="#471e16"/><path d="M1403.4 513.6L1409.4 497.5 1394.4 495.3 1389.6 508.2z" fill="#4a1f17"/><path d="M1393.2 509.6L1398.3 495.9 1383.2 493.7 1379.3 504.3z" fill="#4d2118"/><path d="M1382.9 505.7L1387.1 494.2 1372.1 492.0 1369.0 500.4z" fill="#512219"/><path d="M1372.6 501.8L1376.0 492.6 1361.0 490.4 1358.7 496.4z" fill="#53241a"/><path d="M1362.3 497.8L1364.9 490.9 1349.9 488.7 1348.5 492.5z" fill="#55251b"/><path d="M1352.1 493.9L1353.8 489.3 1338.7 487.1 1338.2 488.6z" fill="#57261c"/><path d="M1341.8 489.9L1342.6 487.7 1331.5 486.0 1331.5 486.0z" fill="#5a281d"/><path d="M1462.4 512.9L1468.4 492.0 1453.0 491.3 1447.7 509.9z" fill="#2a110d"/><path d="M1451.5 510.6L1457.0 491.5 1441.6 490.8 1436.7 507.6z" fill="#351610"/><path d="M1440.6 508.4L1445.6 491.0 1430.2 490.3 1425.8 505.4z" fill="#3c1912"/><path d="M1429.7 506.2L1434.2 490.5 1418.8 489.8 1414.9 503.1z" fill="#441c15"/><path d="M1418.8 503.9L1422.8 490.0 1407.4 489.3 1404.0 500.9z" fill="#471e16"/><path d="M1407.8 501.7L1411.4 489.5 1396.0 488.8 1393.1 498.7z" fill="#4a1f17"/><path d="M1396.9 499.4L1400.0 489.0 1384.6 488.3 1382.2 496.4z" fill="#4d2118"/><path d="M1386.0 497.2L1388.5 488.5 1373.1 487.8 1371.3 494.2z" fill="#502219"/><path d="M1375.1 495.0L1377.1 488.0 1361.7 487.3 1360.4 491.9z" fill="#512219"/><path d="M1364.2 492.7L1365.7 487.5 1350.3 486.8 1349.5 489.7z" fill="#53241a"/><path d="M1353.3 490.5L1354.3 487.0 1338.9 486.3 1338.6 487.5z" fill="#55251b"/><path d="M1342.4 488.2L1342.9 486.5 1331.5 486.0 1331.5 486.0z" fill="#57261c"/></g><path d="M500 200 572 191 644 181M501 208 573 198 644 189M501 215 573 206 645 197M502 222 574 213 646 205M503 230 575 221 646 212M504 237 575 228 647 220M505 244 576 236 648 228M506 252 577 243 649 235M507 260 578 251 650 241M508 268 579 258 650 248M509 276 580 266 651 255M511 284 582 273 652 262M512 292 583 281 653 269M514 300 584 288 655 276M515 307 585 296 656 284M517 315 587 303 657 291M518 323 588 310 658 298M520 331 590 318 660 304M522 339 592 325 661 311M524 347 593 332 662 318M526 355 595 340 664 325M528 362 597 347 665 332M530 370 598 354 667 338M532 378 600 362 668 345M534 386 602 369 670 352M536 394 604 376 672 359M539 401 606 384 674 366M541 408 608 391 676 373M543 416 610 398 677 380M546 424 612 405 679 387M548 431 615 412 681 394M551 439 617 420 683 400M553 447 619 427 685 407M555 454 621 434 687 415M558 461 624 441 689 421M561 469 626 448 691 428M563 476 628 456 693 435M566 484 631 463 696 441M568 491 633 470 698 448M571 498 636 477 700 456M574 506 638 484 703 462M577 513 641 491 705 469M580 521 643 498 707 475M582 528 646 505 709 482M585 535 649 512 712 489M588 543 651 519 715 496M591 550 654 526 717 503M594 558 657 533 720 509M598 565 660 540 722 515M601 572 663 547 725 522M604 580 666 554 727 528M607 587 669 561 730 535M611 595 672 568 733 541M614 602 675 575 736 547M618 609 678 582 739 554M621 617 681 588 742 560M625 624 685 595 745 566M629 632 688 602 747 572M633 639 692 608 750 578M637 646 695 615 754 584M641 653 699 622 757 590M645 660 703 628 760 596M649 668 706 635 764 602M654 675 710 641 767 608M658 682 714 648 770 613M662 689 718 654 774 619M667 696 722 660 778 625M672 703 726 667 781 630M677 710 731 673 785 636M681 717 735 679 789 641M687 724 739 685 792 646M692 731 744 691 796 651M697 738 749 697 800 657M702 744 753 703 804 662M708 751 758 709 808 667M714 758 763 715 812 671M719 764 768 720 817 676M725 770 773 726 821 681M731 777 778 731 825 686M737 783 784 737 830 690M743 789 789 742 835 695M749 795 794 747 839 699M756 801 800 752 844 704M763 807 806 757 849 708M770 812 811 762 853 712M777 818 817 767 858 715M784 823 823 771 863 719M791 829 829 776 868 723M798 834 835 780 873 726M805 839 842 784 878 730M812 843 848 788 884 734M820 848 854 792 889 737M828 853 861 796 894 740M836 857 867 800 899 743M843 861 874 804 905 746M851 865 881 807 911 749M859 869 888 810 916 752M868 873 894 813 921 754M876 876 901 816 927 757M884 880 908 819 932 759M893 883 915 822 938 761M901 886 922 824 943 763M910 889 930 827 949 765M918 891 937 829 955 767M927 893 944 831 961 768M936 895 951 833 967 770M945 897 959 834 972 771M954 899 966 836 978 772M963 900 974 837 984 773M973 901 981 838 989 774M982 902 989 838 995 775M991 903 996 839 1001 775M1001 903 1004 839 1006 775M1011 903 1011 839 1012 776M1020 902 1019 839 1017 776M1029 901 1026 838 1023 775M1038 900 1034 838 1029 775M1048 899 1041 837 1035 774M1057 897 1049 835 1041 774M1066 895 1056 834 1046 773M1075 893 1063 832 1051 772M1084 891 1071 831 1057 771M1092 888 1078 829 1063 769M1101 885 1085 826 1069 768M1110 882 1092 824 1074 766M1119 878 1099 821 1080 764M1127 875 1106 819 1086 762M1135 871 1113 816 1092 760M1143 867 1120 813 1097 758M1151 863 1127 809 1103 755M1159 859 1134 806 1108 753M1167 855 1140 803 1114 750M1175 851 1147 799 1119 747M1182 846 1154 795 1125 744M1190 841 1160 791 1130 741M1197 836 1166 787 1135 738M1205 832 1173 783 1141 735M1212 826 1179 779 1146 731M1219 822 1185 774 1151 727M1226 817 1191 770 1156 723M1233 811 1197 765 1161 720M1240 806 1203 761 1166 716M1247 800 1209 756 1171 712M1254 795 1215 751 1176 708M1260 789 1220 746 1180 703M1267 784 1226 741 1185 699M1273 778 1232 736 1190 694M1279 773 1237 731 1195 689M1286 767 1242 726 1199 685M1292 761 1248 720 1204 680M1298 755 1253 715 1208 675M1304 749 1258 709 1212 670M1310 743 1263 704 1217 665M1315 737 1268 698 1221 660M1321 731 1273 693 1225 654M1327 725 1278 687 1230 649M1332 719 1283 681 1234 643M1337 713 1288 675 1238 638M1343 707 1292 669 1242 632M1348 700 1297 663 1246 627M1353 694 1302 658 1250 621M1359 687 1306 651 1254 616M1364 681 1311 645 1258 610M1369 674 1315 639 1261 604M1373 668 1319 633 1266 598M1378 662 1324 627 1270 592M1383 656 1328 621 1273 586M1387 649 1332 615 1277 580M1392 642 1336 608 1281 574M1397 636 1341 602 1284 568M1401 629 1345 596 1288 562M1405 623 1349 589 1292 556M1410 616 1353 583 1296 549M1414 610 1357 576 1299 543M1418 603 1360 570 1303 537M1422 597 1364 564 1307 530M1426 590 1368 557 1310 524M1430 584 1372 550 1314 517M1434 577 1376 544 1317 511M1437 570 1379 537 1321 505M1441 563 1383 531 1325 498M1444 557 1386 524 1329 491M1448 548 1390 517 1331 486M1454 535 1393 510 1331 486M1459 521 1395 503 1332 486M1464 506 1398 496 1332 486M1468 492 1400 489 1332 486M502 200 504 229 508 260 514 292 520 323 527 354 536 386 544 416 554 446 564 476 575 505 586 535 599 565 612 594 626 623 642 653 659 682 678 710 698 737 720 763 744 788 770 811 799 833 829 852 860 868 893 882 927 892 963 899 1001 902 1038 899 1075 892 1110 880 1143 866 1174 850 1204 831 1232 810 1260 788 1285 766 1309 742 1331 718 1352 693 1372 668 1391 642 1409 616 1425 589 1440 563 1458 520M506 200 508 229 512 260 518 291 524 322 531 353 539 385 548 415 558 445 568 475 579 504 590 534 602 563 615 593 630 622 645 651 662 680 681 708 701 735 723 761 747 785 773 808 801 830 831 848 862 865 895 878 928 889 964 895 1001 898 1038 896 1074 888 1109 877 1141 863 1173 847 1202 828 1230 808 1257 786 1282 764 1306 740 1328 716 1349 691 1369 666 1388 640 1405 614 1422 587 1436 561 1455 519M512 199 515 228 519 259 524 290 530 321 537 352 546 383 554 413 564 443 574 473 585 502 596 532 608 561 621 590 635 619 651 648 668 677 686 704 706 731 727 757 751 781 777 804 804 825 834 843 864 859 897 873 930 883 965 890 1001 892 1038 890 1073 883 1107 872 1139 858 1170 842 1199 823 1227 804 1254 782 1278 760 1302 736 1324 713 1345 688 1364 662 1383 637 1400 611 1416 584 1431 558 1449 518M521 198 524 227 528 258 533 289 539 319 546 350 554 381 563 411 572 441 582 470 593 499 604 529 616 558 629 587 643 615 658 644 674 672 692 699 712 726 733 751 757 775 782 798 809 818 838 836 868 852 899 865 932 875 966 882 1002 884 1037 882 1072 875 1105 865 1136 851 1167 835 1195 817 1222 798 1249 777 1273 755 1296 731 1318 708 1338 683 1357 658 1376 632 1393 607 1409 580 1424 554 1441 516M532 196 535 226 539 256 544 287 550 317 557 348 564 378 573 408 582 438 592 467 602 496 613 525 625 554 638 583 652 611 667 639 683 667 701 694 720 720 741 745 764 768 788 790 815 810 843 828 872 843 903 856 935 866 968 872 1002 875 1036 872 1070 866 1102 856 1133 843 1162 828 1191 810 1217 791 1243 770 1266 748 1289 725 1310 702 1330 678 1349 653 1367 627 1384 602 1400 575 1415 549 1431 513M545 195 547 224 551 255 556 285 562 315 568 345 576 375 585 405 594 434 603 464 614 492 624 521 636 550 648 578 662 606 677 634 693 661 710 687 729 713 749 737 772 760 795 781 821 801 848 818 877 833 907 845 938 855 970 861 1003 863 1036 862 1068 856 1099 846 1129 834 1158 819 1185 802 1211 783 1236 763 1259 741 1281 719 1302 696 1321 671 1340 647 1358 621 1374 596 1390 570 1405 543 1420 510M558 193 561 223 564 253 569 283 575 313 581 343 589 372 597 402 606 431 616 460 626 488 636 517 648 545 660 573 673 601 688 628 703 655 720 680 738 705 758 729 780 751 803 772 828 791 854 807 882 822 911 834 941 843 972 849 1003 852 1035 850 1066 844 1096 835 1125 823 1152 809 1179 793 1204 774 1228 755 1251 734 1272 711 1292 688 1312 665 1330 640 1347 615 1364 589 1379 563 1394 537 1408 507M572 191 575 221 578 251 583 281 588 310 595 340 602 369 610 398 619 427 628 456 638 484 649 512 660 540 672 568 685 595 699 622 714 648 731 673 749 697 768 720 789 742 811 762 835 780 861 796 888 810 915 822 944 831 974 837 1004 839 1034 838 1063 832 1092 824 1120 813 1147 799 1173 783 1197 765 1220 746 1242 726 1263 704 1283 681 1302 658 1319 633 1336 608 1353 583 1368 557 1383 531 1395 503M586 189 589 219 592 249 597 278 602 308 608 337 615 366 623 395 632 423 641 451 651 480 661 508 672 535 684 563 696 589 710 616 725 641 741 666 759 689 778 712 798 733 820 752 843 770 867 785 893 799 920 810 947 819 976 824 1004 827 1033 825 1061 821 1089 813 1116 802 1142 789 1166 774 1190 757 1213 738 1234 718 1254 696 1273 674 1292 650 1309 626 1326 602 1341 576 1357 551 1372 524 1383 500M600 187 602 218 606 247 610 276 615 305 621 334 628 362 636 391 644 419 653 448 663 476 673 503 684 531 695 558 708 584 721 610 736 635 751 659 768 682 787 703 806 724 827 743 850 760 873 775 898 788 924 799 951 807 978 812 1005 815 1032 814 1059 809 1085 802 1111 792 1136 779 1160 765 1183 748 1205 730 1226 710 1245 689 1264 667 1282 644 1299 620 1315 595 1331 570 1346 544 1361 518 1371 497M612 186 614 216 618 246 622 274 627 303 633 331 640 360 648 388 656 416 664 444 674 472 684 499 694 526 706 553 718 579 731 604 745 629 761 652 777 675 795 696 814 716 835 734 856 750 879 765 903 778 928 788 954 796 979 801 1005 804 1031 803 1057 799 1082 792 1107 782 1132 770 1155 756 1177 740 1198 722 1218 703 1237 682 1256 660 1273 637 1290 614 1305 589 1321 564 1336 539 1351 513 1360 494M623 184 625 215 629 244 633 272 638 301 644 329 650 357 658 385 666 413 674 441 684 469 693 496 704 523 715 549 727 575 740 599 754 623 769 646 785 669 803 689 821 709 841 726 862 742 884 756 907 769 931 779 956 787 981 792 1006 794 1030 793 1055 790 1079 783 1104 774 1128 762 1150 749 1172 733 1192 716 1212 697 1230 676 1248 654 1265 632 1281 608 1297 584 1312 559 1327 534 1342 508 1350 491M632 183 634 214 638 243 642 271 647 300 652 327 659 355 666 383 674 410 682 438 692 466 701 493 712 520 723 546 735 571 747 595 761 619 776 642 792 664 809 684 827 703 846 720 867 735 888 749 911 761 934 771 958 779 982 784 1006 786 1030 786 1053 782 1077 776 1101 767 1124 756 1146 743 1167 727 1187 710 1206 692 1224 672 1242 650 1259 627 1275 604 1290 580 1305 555 1320 530 1335 504 1342 489M638 182 641 213 644 242 648 270 653 299 659 326 665 353 672 381 680 409 688 436 698 464 707 491 717 517 728 543 740 569 752 592 766 616 781 638 796 660 813 680 831 698 850 715 870 731 891 744 913 756 936 766 960 773 983 778 1006 780 1029 780 1052 777 1076 771 1099 762 1122 751 1143 738 1164 723 1183 707 1202 688 1220 668 1238 646 1254 624 1270 601 1285 577 1300 552 1315 527 1329 500 1336 487M643 182 645 213 648 242 652 269 657 298 663 325 669 352 676 380 684 407 692 435 701 463 711 490 721 516 732 542 743 567 756 591 769 614 784 636 799 658 816 677 834 696 853 712 872 727 893 741 915 753 937 762 961 770 984 774 1006 777 1029 776 1052 773 1075 767 1098 759 1120 748 1141 736 1162 721 1181 704 1200 685 1217 666 1235 644 1251 622 1267 599 1282 575 1297 550 1311 525 1326 499 1333 486M643 182 644 189M638 182 643 189 645 197M632 183 639 190 644 197 646 205M623 184 632 191 640 198 644 205 646 212M612 186 623 192 633 198 640 205 645 213 647 220M600 187 613 193 624 200 634 206 641 213 646 220 648 228M586 189 600 195 613 201 625 207 634 214 642 221 647 228 649 235M572 191 587 197 601 203 614 209 625 215 635 222 642 228 647 235 650 241M558 193 573 198 587 204 601 210 614 216 626 223 636 229 643 235 648 242 650 248M545 195 559 200 573 206 588 212 602 218 615 224 627 230 637 236 644 242 649 249 651 255M532 196 545 202 559 208 574 213 589 219 603 225 616 231 628 237 638 243 645 249 650 255 652 262M521 198 533 204 546 209 560 215 575 221 589 227 604 233 617 239 629 244 638 250 646 256 651 262 653 269M512 199 522 205 533 211 546 217 561 223 575 228 590 234 605 240 618 246 630 251 639 257 647 263 652 269 655 276M506 200 513 206 522 212 534 218 547 224 561 230 576 236 591 242 606 247 619 253 631 258 640 264 648 270 653 276 656 284M502 200 506 207 514 214 523 220 535 226 548 232 562 238 577 243 592 249 607 255 620 260 632 265 642 271 649 277 655 284 657 291M500 200 502 208 507 214 514 221 524 227 536 233 549 239 563 245 578 251 593 256 608 262 621 267 633 272 643 278 650 284 656 291 658 298M501 208 503 215 508 222 515 228 525 234 536 241 550 247 564 253 579 258 594 264 609 269 622 274 634 279 644 286 652 292 657 298 660 304M501 215 503 222 508 229 516 235 526 242 537 248 551 255 565 260 580 266 595 271 610 276 623 281 635 287 645 293 653 299 658 305 661 311M502 222 504 229 509 236 517 243 527 250 539 256 552 262 567 268 582 273 597 278 611 283 625 289 637 294 647 300 654 305 660 312 662 318M503 230 505 237 510 244 518 251 528 258 540 264 553 270 568 275 583 281 598 286 612 291 626 296 638 301 648 307 656 312 661 318 664 325M504 237 506 244 511 252 519 259 529 265 541 272 554 277 569 283 584 288 599 293 614 298 627 303 639 308 649 314 657 319 663 325 665 332M505 244 507 252 512 260 520 267 530 273 542 279 556 285 570 290 585 296 601 301 615 305 629 310 641 315 651 320 659 326 664 332 667 338M506 252 508 260 514 268 521 275 531 281 544 287 557 293 572 298 587 303 602 308 617 313 630 317 642 322 652 327 660 333 666 339 668 345M507 260 509 268 515 276 523 282 533 289 545 295 559 300 573 305 588 310 604 315 618 320 632 324 644 329 654 334 662 340 667 346 670 352M508 268 511 276 516 284 524 290 534 297 546 302 560 308 575 313 590 318 605 322 620 327 633 331 645 336 655 341 663 346 669 352 672 359M509 276 512 284 518 291 526 298 536 304 548 310 562 315 576 320 592 325 607 330 621 334 635 339 647 343 657 348 665 353 671 359 674 366M511 284 514 292 519 299 527 305 537 312 550 317 563 323 578 328 593 332 608 337 623 341 636 346 649 350 659 355 667 360 672 366 676 373M512 292 515 300 520 307 529 313 539 319 551 325 565 330 580 335 595 340 610 344 625 348 638 353 650 357 660 362 668 367 674 374 677 380M514 300 516 307 522 314 530 321 541 327 553 333 567 338 581 343 597 347 612 351 626 355 640 360 652 364 662 369 670 375 676 380 679 387M515 307 518 315 524 322 532 329 542 335 555 340 568 345 583 350 598 354 614 358 628 362 642 367 654 371 664 376 672 381 678 387 681 394M517 315 520 323 525 330 534 336 544 343 557 348 570 353 585 357 600 362 615 366 630 370 644 374 656 378 666 383 674 388 680 394 683 400M518 323 522 331 527 338 536 344 546 350 558 356 572 360 587 365 602 369 617 373 632 377 646 381 658 385 668 390 676 395 682 401 685 407M520 331 523 339 529 346 537 352 548 358 560 363 574 368 589 372 604 376 619 380 634 384 648 388 660 392 670 397 678 402 684 407 687 415M522 339 525 346 531 353 539 360 550 366 562 371 576 375 591 380 606 384 621 387 636 391 649 395 662 399 672 403 680 409 686 415 689 421M524 347 527 354 533 361 542 368 552 373 564 378 578 383 593 387 608 391 623 395 638 398 652 402 664 406 674 410 682 416 688 422 691 428M526 355 529 362 535 369 544 375 554 381 567 386 580 390 595 394 610 398 625 402 640 405 654 409 666 413 676 418 684 423 690 428 693 435M528 362 531 370 537 377 546 383 556 389 569 393 582 398 597 402 612 405 628 409 642 412 656 416 668 420 678 425 686 430 692 435 696 441M530 370 533 378 539 385 548 391 558 396 571 401 585 405 599 409 615 412 630 416 644 419 658 423 670 427 680 431 688 436 694 442 698 448M532 378 536 386 542 392 550 398 561 403 573 408 587 412 602 416 617 420 632 423 647 427 660 430 672 434 682 438 691 443 697 449 700 456M534 386 538 393 544 400 552 405 563 411 575 415 589 420 604 423 619 427 634 430 649 434 662 437 674 441 685 445 693 450 699 456 703 462M536 394 540 401 546 407 554 413 565 418 578 423 591 427 606 431 621 434 636 437 651 441 664 444 677 448 687 452 695 457 701 463 705 469M539 401 542 408 548 415 557 421 568 426 580 430 594 434 608 438 624 441 639 444 653 448 667 451 679 455 689 459 698 464 704 469 707 475M541 408 544 416 551 422 559 428 570 433 582 438 596 442 611 445 626 448 641 451 656 455 669 458 681 462 692 466 700 470 706 476 709 482M543 416 547 423 553 430 562 436 572 441 585 445 598 449 613 452 628 456 643 459 658 462 672 465 684 469 694 473 702 477 708 482 712 489M546 424 549 431 556 438 564 443 575 448 587 452 601 456 616 460 631 463 646 466 660 469 674 472 686 475 696 479 705 484 711 490 715 496M548 431 552 439 558 445 566 450 577 455 590 460 603 464 618 467 633 470 648 473 663 476 676 479 688 482 699 486 707 491 713 496 717 503M551 439 554 446 560 452 569 458 580 463 592 467 606 471 621 474 636 477 651 480 665 483 679 485 691 489 701 493 710 498 716 503 720 509M553 447 557 453 563 460 572 465 582 470 595 474 608 478 623 481 638 484 653 487 668 489 681 492 693 496 704 500 712 504 718 509 722 515M555 454 559 461 565 467 574 473 585 478 597 482 611 485 626 488 641 491 656 494 670 496 684 499 696 503 706 507 715 511 721 516 725 522M558 461 562 468 568 475 577 480 587 485 600 489 614 492 628 495 643 498 658 501 673 503 686 506 699 509 709 513 717 517 724 522 727 528M561 469 564 476 571 482 579 488 590 492 602 496 616 500 631 503 646 505 661 508 676 510 689 513 701 516 712 520 720 524 726 529 730 535M563 476 567 484 573 490 582 495 593 499 605 504 619 507 634 510 649 512 664 515 678 517 692 520 704 523 714 526 723 530 729 535 733 541M566 484 570 491 576 497 585 502 595 507 608 511 622 514 636 517 651 519 666 522 681 524 694 526 707 529 717 533 725 537 732 542 736 547M568 491 572 498 579 504 587 510 598 514 611 518 624 521 639 524 654 526 669 529 684 531 697 533 709 536 720 539 728 543 735 548 739 554M571 498 575 505 582 512 590 517 601 522 613 525 627 528 642 531 657 533 672 535 686 538 700 540 712 542 723 546 731 550 737 554 742 560M574 506 578 513 584 519 593 525 604 529 616 532 630 535 645 538 660 540 675 542 689 544 703 546 715 549 726 552 734 556 740 561 745 566M577 513 581 521 587 527 596 532 607 536 619 540 633 543 648 545 663 547 678 549 692 551 706 553 718 555 728 558 737 562 743 567 747 572M580 521 584 528 590 534 599 539 610 543 622 547 636 550 651 552 666 554 681 556 695 558 709 560 721 562 731 565 740 569 746 573 750 578M582 528 586 535 593 541 602 546 613 550 625 554 639 557 654 559 669 561 684 563 698 564 712 566 724 568 735 571 743 574 749 578 754 584M585 535 589 542 596 548 605 553 616 558 628 561 642 564 657 566 672 568 687 569 701 571 715 573 727 575 737 577 746 580 752 585 757 590M588 543 592 550 599 556 608 561 619 565 631 568 645 571 660 573 675 575 690 576 704 578 718 579 730 581 740 583 749 586 756 591 760 596M591 550 596 557 602 563 611 568 622 572 635 576 648 578 663 580 678 582 693 583 708 584 721 585 733 587 744 589 752 592 759 597 764 602M594 558 599 565 605 571 614 576 625 580 638 583 652 585 666 587 681 588 696 589 711 590 724 591 736 593 747 595 756 599 763 603 767 608M598 565 602 572 609 578 618 583 629 587 641 590 655 592 670 594 685 595 700 596 714 597 728 598 740 599 750 602 759 605 766 608 770 613M601 572 605 579 612 585 621 590 632 594 645 597 658 599 673 601 688 602 703 603 718 603 731 604 743 606 754 608 762 610 769 614 774 619M604 580 609 587 615 593 624 597 635 601 648 604 662 606 677 608 692 608 707 609 721 610 735 610 747 612 757 613 766 616 773 620 778 625M607 587 612 594 619 600 628 605 639 608 652 611 666 613 680 614 695 615 710 616 725 616 738 617 750 617 761 619 770 622 776 626 781 630M611 595 615 601 622 607 631 612 643 615 655 618 669 620 684 621 699 622 714 622 728 622 742 623 754 623 764 625 773 628 780 631 785 636M614 602 619 609 626 614 635 619 646 623 659 626 673 627 688 628 703 628 717 628 732 628 745 629 757 629 768 631 777 633 784 636 789 641M618 609 623 616 630 622 639 627 650 630 663 632 677 634 691 635 706 635 721 635 736 635 749 635 761 635 772 636 781 638 788 642 792 646M621 617 626 623 634 629 643 634 654 637 667 639 681 641 695 641 710 641 725 641 739 641 753 641 765 641 776 642 785 644 791 647 796 651M625 624 630 631 638 637 647 641 658 644 671 646 684 647 699 648 714 648 729 647 743 647 757 646 769 646 780 648 788 649 795 652 800 657M629 632 634 639 641 644 651 648 662 651 674 653 689 654 703 655 718 654 733 654 747 653 761 652 773 652 783 653 792 654 799 658 804 662M633 639 638 646 645 651 655 655 666 658 679 660 693 661 707 661 722 660 737 660 751 659 765 658 777 658 787 658 796 660 803 663 808 667M637 646 642 653 649 658 659 662 670 665 683 667 697 668 711 667 726 667 741 666 755 665 769 664 781 663 792 664 800 665 807 667 812 671M641 653 646 660 653 665 663 669 674 672 687 674 701 674 716 674 731 673 745 672 760 670 773 669 785 669 796 669 804 670 811 672 817 676M645 660 650 667 658 673 668 677 679 679 691 680 705 681 720 680 735 679 750 678 764 676 777 675 789 674 800 674 808 675 816 677 821 681M649 668 655 674 662 680 672 683 683 686 696 687 710 687 725 687 739 685 754 683 768 682 782 680 794 679 804 679 813 680 820 682 825 686M654 675 659 682 667 687 676 690 688 693 701 694 714 694 729 693 744 691 759 689 773 687 786 685 798 684 809 684 818 685 825 687 830 690M658 682 663 689 671 693 681 697 692 699 705 700 719 700 734 699 749 697 763 695 777 693 790 691 803 689 813 689 822 689 829 691 835 695M662 689 668 695 676 700 686 704 697 706 710 707 724 706 738 705 753 703 768 701 782 698 795 696 807 694 817 693 826 694 834 696 839 699M667 696 673 702 681 708 690 711 702 713 715 713 729 713 743 711 758 709 773 706 787 703 800 701 812 699 822 698 831 698 839 700 844 704M672 703 678 710 685 714 695 718 707 719 720 720 734 719 748 717 763 715 778 712 791 709 804 706 816 704 827 703 836 703 843 704 849 708M677 710 682 716 691 721 701 724 712 726 725 726 739 725 753 723 768 720 782 717 796 714 809 711 821 709 832 707 841 707 848 709 853 712M681 717 688 723 696 728 706 731 717 732 730 732 744 731 758 729 773 726 787 722 801 719 814 716 826 713 837 712 845 711 853 712 858 715M687 724 693 730 701 735 711 737 723 739 736 739 749 737 764 734 778 731 793 728 806 724 819 721 831 718 841 716 850 715 857 716 863 719M692 731 698 737 706 741 716 744 728 745 741 745 755 743 769 740 784 737 798 733 812 729 824 725 836 722 846 720 855 719 862 720 868 723M697 738 703 744 712 748 722 751 733 751 746 750 760 749 775 746 789 742 803 738 817 734 830 730 841 726 851 724 860 723 867 724 873 726M702 744 709 750 717 755 727 757 739 757 752 757 766 754 780 751 794 747 809 743 822 738 835 734 846 730 856 728 865 727 872 727 878 730M708 751 715 757 723 761 733 763 745 763 758 762 772 760 786 756 800 752 814 747 827 743 840 738 851 734 861 732 870 731 877 731 884 734M714 758 720 763 729 767 739 769 751 769 764 768 777 765 791 762 806 757 820 752 833 747 845 742 857 738 867 735 875 734 883 735 889 737M719 764 726 769 735 773 745 775 757 775 769 774 783 771 797 767 811 762 825 757 838 751 851 746 862 742 872 739 881 738 888 738 894 740M725 770 732 776 741 780 751 781 763 781 776 779 789 776 803 772 817 767 831 761 844 755 856 750 867 746 878 743 886 741 893 741 899 743M731 777 738 782 747 785 757 787 769 786 782 785 795 781 809 777 823 771 837 765 850 760 862 754 873 750 883 746 891 744 898 744 905 746M737 783 744 788 753 791 763 793 775 792 788 790 802 786 816 781 829 776 843 770 856 764 868 758 879 753 888 749 897 747 904 747 911 749M743 789 750 794 759 797 770 798 782 798 795 795 808 791 822 786 835 780 849 774 862 767 874 762 884 756 894 752 902 750 910 750 916 752M749 795 757 800 766 803 777 804 788 803 801 800 815 796 828 791 842 784 855 778 868 771 879 765 890 760 899 756 908 753 915 753 921 754M756 801 764 806 773 808 783 809 795 808 808 805 821 801 835 795 848 788 861 782 873 775 885 768 896 763 906 759 913 756 920 755 927 757M763 807 770 811 780 814 790 815 802 813 815 810 828 805 841 799 854 792 867 785 879 778 891 772 902 766 911 761 919 758 926 758 932 759M770 812 777 817 787 819 797 820 809 818 821 815 834 809 848 803 861 796 874 789 886 782 897 775 907 769 916 764 925 761 932 760 938 761M777 818 784 822 794 825 804 825 816 823 828 819 841 814 854 807 867 800 880 792 892 785 903 778 913 771 922 767 930 763 937 762 943 763M784 823 792 828 801 830 811 830 823 827 835 823 848 818 861 811 874 804 887 796 898 788 909 780 919 774 928 769 936 766 943 764 949 765M791 829 799 833 808 835 818 834 830 832 843 828 855 822 868 815 881 807 893 799 904 791 915 783 925 777 934 771 942 768 949 766 955 767M798 834 806 838 815 839 826 839 838 836 850 832 862 826 875 818 888 810 900 802 911 794 922 786 931 779 940 773 948 770 955 768 961 768M805 839 813 842 822 844 834 843 845 840 857 836 869 829 882 822 894 813 906 805 917 796 928 788 937 781 946 775 954 772 961 770 967 770M812 843 820 847 831 848 841 848 852 844 864 839 877 833 889 825 901 816 913 807 924 799 934 790 944 783 952 777 960 773 967 771 972 771M820 848 829 852 838 853 849 852 860 848 872 843 884 836 896 828 908 819 920 810 930 801 941 792 950 785 958 779 966 775 972 772 978 772M828 853 836 856 846 857 856 855 868 852 880 847 892 839 904 831 915 822 927 813 937 803 947 794 956 787 964 780 971 776 978 773 984 773M836 857 844 860 853 861 864 859 876 856 887 850 899 842 911 834 922 824 933 815 944 805 954 796 962 788 970 782 977 777 984 774 989 774M843 861 851 864 862 865 872 863 883 859 895 853 907 845 918 836 930 827 940 817 951 807 960 798 968 790 976 783 983 778 989 775 995 775M851 865 860 868 870 868 880 866 891 862 903 856 914 848 926 839 937 829 947 819 957 809 966 799 974 791 982 784 989 779 995 776 1001 775M859 869 868 872 878 872 888 870 899 865 911 859 922 850 933 841 944 831 954 820 964 810 973 800 981 792 988 785 995 779 1001 776 1006 775M868 873 876 875 886 875 897 873 908 868 919 861 930 853 941 843 951 833 961 822 971 811 979 801 987 793 994 785 1001 780 1006 777 1012 776M876 876 885 879 895 878 905 876 916 870 927 863 938 855 948 845 959 834 968 823 978 812 986 802 993 793 1000 786 1006 780 1012 777 1017 776M884 880 893 882 903 881 913 878 924 873 935 866 945 857 956 847 966 836 976 824 984 813 992 803 1000 794 1006 786 1012 780 1017 777 1023 775M893 883 902 885 911 884 922 881 932 875 943 868 954 858 964 848 974 837 983 825 991 814 999 804 1006 794 1012 786 1017 780 1023 777 1029 775M901 886 910 887 920 886 930 883 940 877 951 869 962 860 972 849 981 838 990 826 998 815 1005 804 1012 794 1017 786 1024 780 1029 776 1035 774M910 889 919 890 928 889 938 885 949 879 960 871 970 861 980 850 989 838 997 826 1005 815 1012 804 1018 794 1024 786 1029 780 1035 776 1041 774M918 891 927 892 937 891 947 887 958 880 968 872 978 862 987 851 996 839 1004 827 1011 815 1018 804 1024 794 1030 786 1035 779 1041 775 1046 773M927 893 936 894 946 893 956 888 966 882 977 873 986 863 995 851 1004 839 1011 827 1018 815 1025 803 1030 793 1036 785 1041 778 1046 774 1051 772M936 895 945 896 955 894 965 890 975 883 985 874 994 863 1003 852 1011 839 1018 827 1025 814 1031 803 1037 793 1042 784 1047 778 1052 773 1057 771M945 897 955 898 964 895 974 891 984 883 993 874 1003 863 1011 852 1019 839 1026 826 1032 814 1038 802 1043 792 1048 783 1052 777 1058 772 1063 769M954 899 963 899 973 897 983 891 993 884 1002 875 1011 863 1019 851 1026 838 1033 825 1039 813 1044 801 1049 791 1053 782 1058 775 1064 770 1069 768M963 900 973 900 983 897 992 892 1002 884 1011 874 1019 863 1027 851 1034 838 1040 825 1046 812 1050 800 1055 790 1060 781 1065 774 1069 769 1074 766M973 901 982 901 992 898 1001 892 1011 884 1020 874 1027 862 1035 850 1041 837 1047 823 1052 811 1057 799 1061 788 1066 779 1070 772 1075 767 1080 764M982 902 991 901 1001 898 1011 892 1020 884 1028 873 1036 862 1042 849 1049 835 1054 822 1059 809 1063 797 1068 787 1072 778 1076 771 1080 765 1086 762M991 903 1001 902 1011 898 1020 892 1028 883 1036 872 1044 860 1050 848 1056 834 1061 821 1066 808 1070 796 1074 785 1077 776 1081 769 1086 763 1092 760M1001 903 1011 901 1020 897 1029 891 1037 882 1045 871 1052 859 1058 846 1063 832 1068 819 1072 806 1076 794 1079 783 1083 774 1087 767 1092 761 1097 758M1011 903 1020 901 1029 897 1038 890 1046 881 1053 870 1060 857 1066 844 1071 831 1075 817 1079 804 1082 792 1086 781 1089 772 1093 764 1098 759 1103 755M1020 902 1029 900 1038 896 1047 888 1054 879 1062 868 1068 856 1073 842 1078 829 1082 815 1085 802 1089 790 1092 779 1095 770 1099 762 1103 756 1108 753M1029 901 1038 899 1047 894 1055 887 1063 877 1070 866 1076 854 1081 840 1085 826 1089 813 1092 800 1095 787 1098 776 1101 767 1105 760 1109 754 1114 750M1038 900 1048 898 1056 893 1064 885 1072 875 1078 864 1084 851 1088 838 1092 824 1096 810 1099 797 1101 785 1104 774 1107 765 1110 757 1114 751 1119 747M1048 899 1057 896 1065 890 1073 883 1080 873 1086 861 1091 849 1096 835 1099 821 1102 808 1105 794 1107 782 1110 771 1113 762 1116 754 1120 748 1125 744M1057 897 1066 894 1074 888 1082 880 1088 870 1094 859 1099 846 1103 832 1106 819 1109 805 1111 792 1114 779 1116 768 1118 759 1122 751 1125 745 1130 741M1066 895 1075 892 1083 886 1090 878 1097 868 1102 856 1107 843 1110 830 1113 816 1116 802 1118 789 1120 777 1122 765 1124 756 1127 748 1131 742 1135 738M1075 893 1084 889 1091 883 1099 875 1105 865 1110 853 1114 840 1118 827 1120 813 1122 799 1124 786 1126 773 1128 762 1130 753 1132 745 1136 739 1141 735M1084 891 1092 887 1100 880 1107 872 1113 862 1118 850 1122 837 1125 823 1127 809 1129 796 1130 782 1132 770 1133 759 1135 750 1138 742 1141 736 1146 731M1092 888 1101 884 1109 877 1115 869 1121 858 1125 847 1129 834 1132 820 1134 806 1135 792 1136 779 1138 767 1139 756 1141 746 1143 738 1146 732 1151 727M1101 885 1110 880 1117 874 1124 865 1129 855 1133 843 1136 830 1139 816 1140 803 1142 789 1143 776 1143 763 1144 752 1146 743 1148 735 1152 728 1156 723M1110 882 1118 877 1125 871 1131 862 1136 851 1140 839 1143 826 1146 813 1147 799 1148 785 1149 772 1149 760 1150 749 1151 739 1154 731 1157 724 1161 720M1119 878 1127 874 1133 867 1139 858 1144 848 1148 836 1151 823 1152 809 1154 795 1154 782 1155 768 1155 756 1155 745 1157 735 1159 727 1162 721 1166 716M1127 875 1135 870 1141 863 1147 854 1152 844 1155 832 1158 819 1159 805 1160 791 1160 778 1160 765 1160 752 1161 741 1162 731 1164 723 1167 717 1171 712M1135 871 1143 866 1149 859 1155 850 1159 840 1162 828 1165 815 1166 801 1166 787 1166 774 1166 761 1166 748 1167 737 1167 727 1169 719 1172 713 1176 708M1143 867 1151 862 1157 855 1162 846 1167 835 1170 823 1172 810 1172 797 1173 783 1172 770 1172 756 1172 744 1172 733 1172 723 1174 715 1176 709 1180 703M1151 863 1159 858 1165 851 1170 842 1174 831 1177 819 1178 806 1179 793 1179 779 1178 765 1178 752 1177 740 1177 729 1177 719 1179 711 1181 704 1185 699M1159 859 1166 854 1173 847 1178 837 1181 827 1184 815 1185 802 1185 788 1185 774 1184 761 1183 748 1183 736 1182 725 1182 715 1183 707 1186 700 1190 694M1167 855 1174 850 1180 842 1185 833 1188 822 1191 810 1192 797 1192 784 1191 770 1190 757 1189 744 1188 731 1187 720 1187 710 1188 702 1191 695 1195 689M1175 851 1182 845 1188 837 1192 828 1195 817 1197 805 1198 793 1198 779 1197 765 1196 752 1194 739 1193 727 1192 716 1192 706 1193 697 1196 690 1199 685M1182 846 1189 840 1195 833 1199 823 1203 813 1204 801 1204 788 1204 774 1203 761 1201 747 1200 735 1198 722 1197 711 1197 701 1198 692 1200 685 1204 680M1190 841 1197 835 1202 828 1207 818 1209 808 1210 796 1211 783 1210 770 1209 756 1207 743 1205 730 1203 718 1202 706 1202 696 1202 688 1204 681 1208 675M1197 836 1204 831 1210 823 1213 814 1216 803 1217 791 1217 778 1216 765 1215 751 1213 738 1210 725 1208 713 1207 701 1206 692 1207 683 1209 676 1212 670M1205 832 1212 826 1216 818 1220 809 1222 798 1224 786 1223 773 1222 760 1220 746 1218 733 1216 720 1214 708 1212 697 1211 687 1212 678 1213 671 1217 665M1212 826 1218 821 1223 813 1227 804 1229 793 1230 781 1230 768 1228 755 1226 741 1223 728 1221 715 1218 703 1217 692 1216 682 1216 673 1217 666 1221 660M1219 822 1225 816 1230 808 1234 798 1236 787 1236 775 1236 763 1234 750 1232 736 1229 723 1226 710 1223 698 1221 687 1220 677 1220 668 1222 660 1225 654M1226 817 1232 810 1237 802 1241 793 1242 782 1243 770 1242 757 1240 744 1237 731 1234 718 1231 705 1228 693 1226 682 1224 672 1225 663 1226 655 1230 649M1233 811 1239 805 1244 797 1247 787 1249 777 1249 765 1247 752 1245 739 1242 726 1239 712 1236 700 1233 688 1230 676 1229 666 1229 657 1231 650 1234 643M1240 806 1246 799 1251 791 1254 782 1255 771 1255 759 1253 747 1251 734 1248 720 1244 707 1241 694 1237 682 1235 671 1233 661 1233 652 1235 644 1238 638M1247 800 1253 794 1257 786 1260 777 1261 766 1260 754 1259 741 1256 728 1253 715 1249 702 1245 689 1242 677 1239 666 1238 655 1238 646 1239 638 1242 632M1254 795 1260 788 1264 780 1266 771 1267 760 1266 748 1265 736 1262 723 1258 709 1254 696 1250 684 1247 671 1244 660 1242 650 1242 641 1243 633 1246 627M1260 789 1266 783 1270 775 1272 766 1273 755 1272 743 1270 730 1267 717 1263 704 1259 691 1255 678 1251 666 1248 654 1246 644 1246 635 1247 627 1250 621M1267 784 1272 777 1276 770 1278 760 1279 749 1278 737 1276 724 1272 711 1268 698 1264 685 1260 672 1256 660 1253 649 1251 639 1250 630 1251 622 1254 616M1273 778 1278 772 1282 764 1284 754 1285 743 1284 731 1281 719 1277 706 1273 693 1269 679 1264 667 1260 654 1257 643 1255 633 1254 624 1255 616 1258 610M1279 773 1285 766 1288 758 1290 748 1291 737 1289 725 1286 713 1283 700 1278 687 1273 674 1269 661 1264 649 1261 638 1259 627 1258 618 1259 611 1261 604M1286 767 1291 760 1294 752 1296 742 1296 731 1294 720 1292 707 1288 694 1283 681 1278 668 1273 655 1269 643 1265 632 1263 622 1262 613 1262 605 1266 598M1292 761 1297 754 1300 746 1302 736 1302 726 1300 714 1297 701 1292 688 1288 675 1283 662 1278 649 1273 637 1269 626 1267 616 1266 607 1267 599 1270 592M1298 755 1303 748 1306 740 1308 730 1307 720 1305 708 1302 696 1297 683 1292 669 1287 656 1282 644 1277 632 1273 620 1270 610 1270 601 1271 593 1273 586M1304 749 1309 742 1312 734 1313 724 1312 714 1310 702 1307 690 1302 677 1297 663 1292 650 1286 638 1281 626 1277 615 1275 604 1274 595 1274 587 1277 580M1310 743 1315 736 1317 728 1318 719 1318 708 1315 696 1312 684 1307 671 1302 658 1296 645 1290 632 1285 620 1281 608 1279 598 1278 589 1278 581 1281 574M1315 737 1320 730 1323 722 1324 713 1323 702 1320 690 1317 678 1312 665 1306 651 1300 639 1295 626 1290 614 1285 602 1283 592 1281 583 1282 575 1284 568M1321 731 1326 724 1328 716 1329 706 1328 696 1325 684 1321 671 1316 658 1311 645 1305 633 1299 620 1294 607 1289 596 1286 586 1285 577 1285 569 1288 562M1327 725 1331 718 1334 710 1334 700 1333 689 1330 678 1326 665 1321 652 1315 639 1309 626 1303 614 1298 601 1293 590 1290 580 1289 571 1289 563 1292 556M1332 719 1336 712 1339 704 1339 694 1338 683 1335 671 1331 659 1326 646 1319 633 1313 620 1307 607 1302 595 1297 584 1294 574 1292 565 1293 556 1296 549M1337 713 1342 706 1344 697 1345 688 1343 677 1340 665 1336 653 1330 640 1324 627 1317 614 1311 601 1305 589 1301 578 1297 568 1296 558 1297 550 1299 543M1343 707 1347 699 1349 691 1350 681 1348 670 1345 659 1340 647 1334 634 1328 621 1321 608 1315 595 1309 583 1305 572 1301 561 1300 552 1300 544 1303 537M1348 700 1352 693 1355 684 1355 675 1353 664 1349 653 1344 640 1339 628 1332 615 1326 602 1319 589 1313 577 1308 565 1305 555 1303 546 1304 537 1307 530M1353 694 1358 687 1360 678 1360 668 1357 658 1354 647 1349 634 1343 621 1336 608 1330 595 1323 583 1317 571 1312 559 1309 549 1307 539 1308 531 1310 524M1359 687 1363 680 1365 672 1364 662 1362 652 1358 640 1353 628 1347 615 1341 602 1334 589 1327 576 1321 564 1316 553 1313 542 1311 533 1311 525 1314 517M1364 681 1368 674 1369 666 1369 656 1367 645 1363 634 1358 621 1351 609 1345 596 1338 583 1331 570 1325 558 1320 546 1316 536 1315 527 1315 518 1317 511M1369 674 1372 668 1374 659 1373 650 1371 639 1367 627 1362 615 1356 602 1349 589 1341 576 1335 564 1329 551 1324 540 1320 530 1318 520 1319 512 1321 505M1373 668 1377 661 1379 653 1378 643 1376 632 1372 621 1366 608 1360 596 1353 583 1345 570 1338 557 1332 545 1327 534 1324 523 1322 513 1322 505 1325 498M1378 662 1382 655 1383 646 1383 637 1380 626 1376 614 1370 602 1364 589 1357 576 1349 563 1342 551 1336 539 1331 527 1327 517 1325 507 1326 499 1329 491M1383 656 1386 648 1388 640 1387 630 1385 619 1380 608 1374 596 1368 583 1360 570 1353 557 1346 544 1340 532 1335 521 1331 510 1329 500 1330 492 1331 486M1387 649 1391 642 1392 633 1392 623 1389 613 1384 602 1379 589 1372 577 1364 564 1357 551 1350 538 1343 526 1338 514 1335 504 1333 494 1332 487 1331 486M1392 642 1396 635 1397 626 1396 617 1393 607 1388 595 1382 583 1376 570 1368 557 1361 544 1353 531 1347 519 1342 508 1338 497 1336 489 1333 487 1332 486M1397 636 1400 628 1401 620 1400 611 1397 600 1392 589 1386 576 1379 563 1372 550 1364 537 1357 525 1351 513 1346 501 1341 492 1336 488 1333 486 1332 486M1401 629 1404 622 1405 614 1404 604 1401 594 1396 582 1390 570 1383 557 1376 544 1368 531 1361 518 1354 506 1348 496 1342 490 1336 487 1333 486 1332 486M1405 623 1409 616 1410 607 1408 598 1405 587 1400 575 1394 563 1387 550 1379 537 1372 524 1364 511 1357 500 1349 493 1342 489 1337 487 1333 486M1410 616 1413 609 1414 601 1412 591 1409 580 1404 569 1398 557 1391 544 1383 531 1375 518 1367 506 1359 497 1350 491 1343 488 1337 486M1414 610 1417 603 1418 594 1416 584 1413 574 1408 562 1402 550 1394 537 1386 524 1378 511 1369 501 1360 494 1351 489 1343 487M1418 603 1421 596 1422 587 1420 578 1417 567 1412 555 1405 543 1398 530 1390 517 1381 506 1371 497 1361 491 1352 487M1422 597 1425 589 1425 581 1424 571 1420 560 1415 549 1408 537 1401 523 1393 510 1383 500 1372 492 1362 487M1426 590 1429 583 1429 574 1428 564 1424 554 1418 542 1412 529 1405 515 1395 503 1385 494 1374 488M1430 584 1433 576 1433 567 1431 558 1427 547 1422 534 1416 520 1408 507 1398 496 1387 488M1434 577 1436 569 1436 561 1434 551 1431 539 1427 524 1420 510 1411 498 1400 489M1437 570 1440 563 1440 554 1438 543 1436 528 1431 513 1423 500 1413 490M1441 563 1443 556 1444 546 1444 531 1441 516 1435 502 1426 490M1444 557 1447 548 1449 533 1449 518 1445 503 1438 491M1448 548 1453 534 1455 519 1453 505 1448 491M1454 535 1458 520 1459 506 1457 491M1459 521 1463 506 1463 492M1464 506 1467 492" fill="none" stroke="#fff" stroke-opacity="0.18" stroke-width="0.6"/></g><path d="M500.2 200.5 L501.0 211.0 L502.0 221.5 L503.1 231.9 L504.4 242.4 L505.9 254.0 L507.6 265.6 L509.5 277.1 L511.5 288.6 L513.7 300.1 L515.7 310.5 L518.2 321.9 L520.7 333.3 L523.4 344.7 L526.2 356.1 L529.2 367.4 L532.2 378.7 L535.4 389.9 L538.6 400.8 L541.7 411.2 L545.2 422.4 L548.7 433.6 L552.4 444.7 L555.7 454.7 L559.5 465.8 L563.3 476.8 L567.1 487.6 L570.8 497.7 L574.9 508.7 L579.0 519.6 L583.2 530.3 L587.2 540.3 L591.6 551.1 L596.2 561.9 L600.8 572.7 L605.6 583.4 L610.4 594.0 L615.5 604.6 L620.6 615.1 L625.9 625.5 L631.8 636.9 L637.4 647.2 L643.1 657.4 L649.0 667.5 L655.7 678.5 L661.9 688.4 L668.3 698.2 L675.5 708.9 L682.3 718.4 L690.0 728.8 L697.4 738.3 L705.3 748.0 L713.6 757.8 L721.4 766.5 L730.2 775.9 L739.3 785.1 L747.7 793.2 L757.3 801.8 L767.0 810.2 L777.0 818.3 L787.3 826.1 L797.7 833.6 L808.2 840.7 L818.4 847.1 L830.4 854.2 L841.4 860.2 L852.1 865.7 L864.8 871.7 L876.2 876.6 L888.6 881.4 L900.8 885.7 L913.1 889.6 L925.5 893.0 L938.2 896.0 L951.8 898.6 L964.5 900.5 L978.5 902.0 L991.4 902.7 L1005.4 902.9 L1019.5 902.3 L1032.3 901.1 L1045.8 899.3 L1058.9 896.8 L1072.5 893.7 L1085.0 890.2 L1097.2 886.3 L1110.5 881.6 L1122.4 876.8 L1134.2 871.6 L1145.8 866.1 L1157.3 860.2 L1168.6 854.1 L1179.7 847.6 L1190.7 840.8 L1201.5 833.8 L1212.1 826.6 L1221.9 819.6 L1232.0 812.1 L1242.2 804.2 L1252.2 796.1 L1261.5 788.3 L1270.9 780.1 L1279.5 772.3 L1289.0 763.5 L1297.4 755.4 L1306.5 746.3 L1314.6 737.8 L1322.6 729.3 L1330.4 720.6 L1338.2 711.8 L1345.9 702.7 L1353.6 693.4 L1361.1 684.0 L1368.5 674.6 L1374.8 666.2 L1381.8 656.8 L1388.6 647.3 L1395.3 637.7 L1401.9 628.0 L1407.8 619.3 L1414.1 609.5 L1419.7 600.5 L1425.8 590.5 L1431.1 581.4 L1436.8 571.2 L1441.7 561.9 L1446.3 552.5 L1454.8 533.2 L1462.4 512.9 L1468.4 492.0 L1331.5 486.0 L1331.5 486.0 L1331.5 486.0 L1331.2 486.6 L1325.7 496.4 L1320.2 506.2 L1315.3 514.9 L1309.8 524.7 L1304.8 533.4 L1299.2 543.1 L1294.1 551.8 L1288.4 561.4 L1283.2 570.0 L1278.0 578.6 L1272.7 587.1 L1267.3 595.5 L1261.1 604.9 L1255.7 613.0 L1250.2 621.0 L1244.6 629.0 L1238.8 636.9 L1232.8 644.9 L1226.6 652.8 L1220.3 660.6 L1213.9 668.3 L1208.1 675.0 L1201.3 682.4 L1195.2 688.8 L1188.1 696.0 L1181.4 702.4 L1174.3 708.8 L1167.6 714.6 L1160.7 720.2 L1153.4 725.7 L1145.5 731.3 L1138.1 736.3 L1130.6 741.0 L1122.9 745.4 L1115.1 749.6 L1107.2 753.5 L1099.1 757.1 L1090.9 760.5 L1082.6 763.6 L1074.2 766.3 L1066.8 768.4 L1058.2 770.6 L1049.5 772.3 L1041.9 773.6 L1033.5 774.6 L1025.5 775.3 L1016.6 775.6 L1008.9 775.5 L1001.3 775.2 L992.5 774.4 L984.8 773.4 L976.1 771.9 L968.5 770.3 L960.0 768.2 L951.5 765.7 L943.1 763.0 L934.8 759.9 L927.0 756.7 L918.5 752.9 L911.6 749.6 L903.0 745.1 L895.0 740.6 L888.3 736.6 L880.1 731.4 L872.6 726.3 L865.4 721.1 L858.4 715.7 L851.6 710.1 L844.8 704.3 L838.3 698.3 L831.1 691.4 L824.8 685.1 L818.8 678.6 L812.1 671.2 L806.4 664.4 L800.6 657.2 L794.7 649.6 L789.5 642.4 L783.7 634.2 L778.8 626.9 L773.3 618.4 L768.1 609.9 L763.6 602.2 L758.7 593.5 L753.9 584.7 L749.3 575.8 L745.3 567.9 L741.0 558.8 L736.7 549.7 L732.6 540.6 L728.7 531.3 L724.8 522.1 L721.1 512.8 L717.4 503.4 L713.9 494.1 L710.1 483.7 L706.6 474.1 L703.3 464.6 L700.1 455.1 L696.7 444.7 L693.5 434.9 L690.5 425.4 L687.6 415.8 L684.4 405.0 L681.6 395.4 L678.9 385.7 L676.3 376.0 L673.5 365.6 L671.0 355.5 L668.6 345.7 L666.3 336.0 L664.2 326.2 L662.1 316.3 L660.1 306.5 L658.2 296.7 L656.4 286.8 L654.5 275.7 L652.9 265.8 L651.5 255.9 L650.1 246.0 L648.9 236.0 L647.7 226.1 L646.6 214.9 L645.5 203.8 L644.6 192.6 L643.9 181.4z" fill="none" stroke="#fff" stroke-opacity="0.18" stroke-width="1"/><ellipse cx="572.5" cy="192.7" rx="26.6" ry="73.1" transform="rotate(81.5 572.5 192.7)" fill="#c6d2d8" /><ellipse cx="573.0" cy="192.2" rx="20.3" ry="61.3" transform="rotate(79.2 573.0 192.2)" fill="url(#tin)" /><ellipse cx="1400.5" cy="492.7" rx="49.8" ry="68.7" transform="rotate(-80.7 1400.5 492.7)" fill="url(#rring)" /><ellipse cx="1399.8" cy="491.5" rx="42.9" ry="55.9" transform="rotate(-88.7 1399.8 491.5)" fill="url(#rin)" /><clipPath id="tic"><ellipse cx="573.0" cy="192.2" rx="20.3" ry="61.3" transform="rotate(79.2 573.0 192.2)" fill="#000" /></clipPath><clipPath id="ric"><ellipse cx="1399.8" cy="491.5" rx="42.9" ry="55.9" transform="rotate(-88.7 1399.8 491.5)" fill="#000" /></clipPath><rect x="460" y="151" width="1059" height="775" fill="url(#mesh)" opacity="0.25" clip-path="url(#tic)"/><rect x="460" y="151" width="1059" height="775" fill="url(#mesh)" opacity="0.25" clip-path="url(#ric)"/></svg>
<div class="a btn" style="left:1538px;top:160.5px;width:260.5px;height:21.0px;"></div>
<div class="a t" style="left:1543px;top:161.5px;font:normal 13.4px 'Liberation Sans',sans-serif;line-height:19px;color:#000;">TFEA report</div>
<svg class="a" style="left:1783.0px;top:168.0px;" width="10" height="6" viewBox="0 0 10 6"><path d="M0.5 0.5h9l-4.5 5z" fill="#3c3c3c"/></svg>
<div class="a btn" style="left:1805px;top:160.5px;width:81.5px;height:21.0px;"></div>
<div class="a t" style="left:1545.7px;width:600px;text-align:center;top:162.5px;font:normal 12.4px 'Liberation Sans',sans-serif;line-height:18px;color:#000;">Save as PDF</div>
<div class="a btn" style="left:1893px;top:160.5px;width:84.5px;height:21.0px;"></div>
<div class="a t" style="left:1635.2px;width:600px;text-align:center;top:162.5px;font:normal 12.4px 'Liberation Sans',sans-serif;line-height:18px;color:#000;">Open as PDF</div>
<div class="a" style="left:1538px;top:188px;width:438px;height:715px;background:#fff"></div>
<div class="a" style="left:1538px;top:188px;width:203px;height:3px;background:#6d7073"></div>
<div class="a" style="left:1742px;top:188px;width:218px;height:3px;background:#252d35"></div>
<div class="a t" style="left:1538.5px;top:222px;font:normal 24px 'Liberation Sans',sans-serif;line-height:34px;color:#555;">General Settings</div>
<div class="a" style="left:1538px;top:279px;width:96px;height:1px;background:#dcdcdc"></div>
<div class="a" style="left:1538px;top:304.5px;width:405.5px;height:75px;background:#f5f5f5"></div>
<div class="a t" style="left:1373px;width:600px;text-align:center;top:316.5px;font:normal 16px 'Liberation Sans',sans-serif;line-height:23px;color:#555;">Fluid-Structure Interaction</div>
<div class="a t" style="left:1373px;width:600px;text-align:center;top:342.5px;font:normal 16px 'Liberation Sans',sans-serif;line-height:23px;color:#555;">Performed</div>
<div class="a t" style="left:1575.5px;width:600px;text-align:center;top:316.5px;font:normal 16px 'Liberation Sans',sans-serif;line-height:23px;color:#555;">yes</div>
<div class="a t" style="left:1373px;width:600px;text-align:center;top:392.5px;font:normal 16px 'Liberation Sans',sans-serif;line-height:23px;color:#555;">Thermal Effects Considered</div>
<div class="a t" style="left:1575.5px;width:600px;text-align:center;top:392.5px;font:normal 16px 'Liberation Sans',sans-serif;line-height:23px;color:#555;">no</div>
<div class="a" style="left:1538px;top:430px;width:405.5px;height:75.5px;background:#f5f5f5"></div>
<div class="a t" style="left:1373px;width:600px;text-align:center;top:442.5px;font:normal 16px 'Liberation Sans',sans-serif;line-height:23px;color:#555;">Source for FSI</div>
<div class="a t" style="left:1575.5px;width:600px;text-align:center;top:442.5px;font:normal 16px 'Liberation Sans',sans-serif;line-height:23px;color:#555;">This TCFD</div>
<div class="a t" style="left:1575.5px;width:600px;text-align:center;top:468.5px;font:normal 16px 'Liberation Sans',sans-serif;line-height:23px;color:#555;">Case</div>
<div class="a t" style="left:1373px;width:600px;text-align:center;top:518.5px;font:normal 16px 'Liberation Sans',sans-serif;line-height:23px;color:#555;">Rotates with CFD frame</div>
<div class="a t" style="left:1575.5px;width:600px;text-align:center;top:518.5px;font:normal 16px 'Liberation Sans',sans-serif;line-height:23px;color:#555;">static</div>
<div class="a t" style="left:1538.5px;top:587px;font:normal 24px 'Liberation Sans',sans-serif;line-height:34px;color:#555;">Material Descrtiption</div>
<div class="a" style="left:1538px;top:644px;width:96px;height:1px;background:#dcdcdc"></div>
<div class="a" style="left:1538px;top:668.5px;width:405.5px;height:50px;background:#f5f5f5"></div>
<div class="a t" style="left:1342.3px;width:600px;text-align:center;top:681.5px;font:normal 16px 'Liberation Sans',sans-serif;line-height:23px;color:#555;">Name</div>
<div class="a t" style="left:1545.3px;width:600px;text-align:center;top:681.5px;font:normal 16px 'Liberation Sans',sans-serif;line-height:23px;color:#555;">Polyethylene (HDPE)</div>
<div class="a t" style="left:1342.3px;width:600px;text-align:center;top:731.5px;font:normal 16px 'Liberation Sans',sans-serif;line-height:23px;color:#555;">Density [ kg/m<sup style="font-size:11px;vertical-align:6px;line-height:0">3</sup> ]</div>
<div class="a t" style="left:1545.3px;width:600px;text-align:center;top:731.5px;font:normal 16px 'Liberation Sans',sans-serif;line-height:23px;color:#555;">960.000</div>
<div class="a" style="left:1538px;top:769.5px;width:405.5px;height:50.5px;background:#f5f5f5"></div>
<div class="a t" style="left:1342.3px;width:600px;text-align:center;top:782.5px;font:normal 16px 'Liberation Sans',sans-serif;line-height:23px;color:#555;">Type</div>
<div class="a t" style="left:1545.3px;width:600px;text-align:center;top:782.5px;font:normal 16px 'Liberation Sans',sans-serif;line-height:23px;color:#555;">isotropic</div>
<div class="a t" style="left:1342.3px;width:600px;text-align:center;top:832.5px;font:normal 16px 'Liberation Sans',sans-serif;line-height:23px;color:#555;">Young Modulus [ MPa ]</div>
<div class="a t" style="left:1545.3px;width:600px;text-align:center;top:832.5px;font:normal 16px 'Liberation Sans',sans-serif;line-height:23px;color:#555;">900.000</div>
<div class="a" style="left:1538px;top:870px;width:438px;height:33px;overflow:hidden">
<div class="a" style="left:0px;top:0px;width:405.5px;height:50px;background:#f5f5f5"></div>
<div class="a t" style="left:-195.7px;width:600px;text-align:center;top:12.5px;font:normal 16px 'Liberation Sans',sans-serif;line-height:23px;color:#555;">Poisson Ratio [ - ]</div>
<div class="a t" style="left:7.300000000000011px;width:600px;text-align:center;top:12.5px;font:normal 16px 'Liberation Sans',sans-serif;line-height:23px;color:#555;">0.460000</div>
</div>
<div class="a" style="left:1976.5px;top:188px;width:13.5px;height:715px;background:#dedbd8;border-left:1px solid #c9c4bf;box-sizing:border-box"></div>
<div class="a" style="left:1977.5px;top:188px;width:12.5px;height:13.5px;background:#f7f6f4"></div>
<svg class="a" style="left:1978px;top:191px;" width="11" height="8" viewBox="0 0 11 8"><path d="M1 6.5l4.5-5 4.5 5z" fill="#4a4a4a"/></svg>
<div class="a" style="left:1977.5px;top:277.5px;width:12.5px;height:73px;background:linear-gradient(90deg,#fdfdfc,#f1efed);border-top:1px solid #c9c4bf;border-bottom:1px solid #c9c4bf;box-sizing:border-box"></div>
<div class="a" style="left:1977.5px;top:889px;width:12.5px;height:14px;background:#f7f6f4"></div>
<svg class="a" style="left:1978px;top:892px;" width="11" height="8" viewBox="0 0 11 8"><path d="M1 1.5l4.5 5 4.5-5z" fill="#4a4a4a"/></svg>
<div class="a" style="left:1538px;top:903px;width:438.5px;height:14px;background:#dedbd8;border-top:1px solid #c9c4bf;box-sizing:border-box"></div>
<div class="a" style="left:1538px;top:904px;width:14px;height:13px;background:#f7f6f4"></div>
<svg class="a" style="left:1541px;top:905px;" width="8" height="11" viewBox="0 0 8 11"><path d="M6.5 1l-5 4.5 5 4.5z" fill="#4a4a4a"/></svg>
<div class="a" style="left:1784px;top:904px;width:179px;height:13px;background:linear-gradient(#fdfdfc,#f1efed);border-left:1px solid #c9c4bf;border-right:1px solid #c9c4bf;box-sizing:border-box"></div>
<div class="a" style="left:1962.5px;top:904px;width:14px;height:13px;background:#f7f6f4"></div>
<svg class="a" style="left:1965px;top:905px;" width="8" height="11" viewBox="0 0 8 11"><path d="M1.5 1l5 4.5-5 4.5z" fill="#4a4a4a"/></svg>
<div class="a" style="left:1522px;top:929px;width:477px;height:1px;background:#bdb8b3"></div>
<div class="a" style="left:455px;top:929px;width:1067px;height:1px;background:#bdb8b3"></div>
<div class="a t" style="left:459.3px;top:937px;font:normal 13.4px 'Liberation Sans',sans-serif;line-height:19px;color:#000;">Output Messages</div>
<svg class="a" style="left:1056px;top:941px;" width="28" height="12" viewBox="0 0 28 12"><rect x="0.5" y="0.5" width="12" height="10.5" rx="2" fill="none" stroke="#8e8a86"/><rect x="5" y="2.5" width="5" height="4" fill="none" stroke="#3c3c3c"/><rect x="3" y="4.5" width="5" height="4" fill="#f2efec" stroke="#3c3c3c"/><rect x="14.5" y="0.5" width="12" height="10.5" rx="2" fill="none" stroke="#8e8a86"/><path d="M17.5 3l6 5.5M23.5 3l-6 5.5" stroke="#3c3c3c" stroke-width="2"/></svg>
<svg class="a" style="left:1222px;top:932px;" width="18" height="2" viewBox="0 0 18 2"><rect x="0" y="0" width="1" height="1" fill="#9a958f"/><rect x="3" y="0" width="1" height="1" fill="#9a958f"/><rect x="6" y="0" width="1" height="1" fill="#9a958f"/><rect x="9" y="0" width="1" height="1" fill="#9a958f"/><rect x="12" y="0" width="1" height="1" fill="#9a958f"/><rect x="15" y="0" width="1" height="1" fill="#9a958f"/></svg>
<div class="a" style="left:464.5px;top:965.5px;width:609px;height:69px;background:#fff;border:1px solid #b9b4af;box-sizing:border-box"></div>
<div class="a" style="left:465.5px;top:980px;width:594px;height:14px;background:#f0eeeb"></div>
<div class="a t" style="left:520px;top:962.3px;font:normal 13.4px 'Liberation Sans',sans-serif;line-height:19px;color:#1e9a1e;">Using CAE Processor library version 20.09v2</div>
<div class="a t" style="left:486.5px;top:976.7px;font:normal 13.4px 'Liberation Sans',sans-serif;line-height:19px;color:#000;">4</div>
<div class="a t" style="left:520px;top:976.7px;font:normal 13.4px 'Liberation Sans',sans-serif;line-height:19px;color:#1e9a1e;">The license is issued as&nbsp; Perpetual</div>
<div class="a t" style="left:540px;top:990.5px;font:normal 13.4px 'Liberation Sans',sans-serif;line-height:19px;color:#1e9a1e;">The license is issued as&nbsp; Perpetual</div>
<div class="a t" style="left:540px;top:1004.5px;font:normal 13.4px 'Liberation Sans',sans-serif;line-height:19px;color:#1e9a1e;">The license is issued for CFD SUPPORT</div>
<div class="a" style="left:465px;top:1020px;width:594px;height:14px;overflow:hidden">
<div class="a t" style="left:75px;top:-1.5px;font:normal 13.4px 'Liberation Sans',sans-serif;line-height:19px;color:#1e9a1e;">The license is issued for Testing License</div>
</div>
<svg class="a" style="left:503px;top:967px;" width="8" height="11" viewBox="0 0 8 11"><path d="M1.5 1l5 4.5-5 4.5z" fill="#333"/></svg>
<svg class="a" style="left:501px;top:983px;" width="11" height="8" viewBox="0 0 11 8"><path d="M1 1.5h9l-4.5 5z" fill="#333"/></svg>
<div class="a" style="left:1059px;top:966.5px;width:13.5px;height:67px;background:#f7f6f4;border-left:1px solid #c9c4bf;box-sizing:border-box"></div>
<div class="a" style="left:1060px;top:979.5px;width:12.5px;height:27px;background:linear-gradient(90deg,#fdfdfc,#f1efed);border-top:1px solid #d3cfca;box-sizing:border-box"></div>
<div class="a" style="left:1060px;top:1007px;width:12.5px;height:13.5px;background:#dedbd8"></div>
<svg class="a" style="left:1061px;top:968px;" width="11" height="8" viewBox="0 0 11 8"><path d="M1 6.5l4.5-5 4.5 5z" fill="#4a4a4a"/></svg>
<svg class="a" style="left:1061px;top:1023px;" width="11" height="8" viewBox="0 0 11 8"><path d="M1 1.5l4.5 5 4.5-5z" fill="#4a4a4a"/></svg>
<div class="a" style="left:464.5px;top:1045px;width:13.5px;height:13.5px;background:#fff;border:1px solid #a9a49f;border-radius:2px;box-sizing:border-box"></div>
<div class="a t" style="left:483.6px;top:1041.3px;font:normal 13.4px 'Liberation Sans',sans-serif;line-height:19px;color:#000;">Show full messages</div>
<div class="a btn" style="left:899px;top:1041.5px;width:88.5px;height:22.0px;"></div>
<div class="a t" style="left:903.2px;top:1041.5px;font:normal 13.4px 'Liberation Sans',sans-serif;line-height:19px;color:#000;">Save to File...</div>
<div class="a btn" style="left:994px;top:1041.5px;width:79.5px;height:22.0px;"></div>
<div class="a t" style="left:733.7px;width:600px;text-align:center;top:1041.5px;font:normal 13.4px 'Liberation Sans',sans-serif;line-height:19px;color:#000;">Clear</div>
<svg class="a" style="left:1086px;top:998px;" width="2" height="17" viewBox="0 0 2 17"><rect x="0" y="0" width="1" height="1" fill="#9a958f"/><rect x="0" y="3" width="1" height="1" fill="#9a958f"/><rect x="0" y="6" width="1" height="1" fill="#9a958f"/><rect x="0" y="9" width="1" height="1" fill="#9a958f"/><rect x="0" y="12" width="1" height="1" fill="#9a958f"/><rect x="0" y="15" width="1" height="1" fill="#9a958f"/></svg>
<div class="a t" style="left:1093.3px;top:937px;font:normal 13.4px 'Liberation Sans',sans-serif;line-height:19px;color:#000;">TCAE Output</div>
<svg class="a" style="left:1977px;top:941px;" width="28" height="12" viewBox="0 0 28 12"><rect x="0.5" y="0.5" width="12" height="10.5" rx="2" fill="none" stroke="#8e8a86"/><rect x="5" y="2.5" width="5" height="4" fill="none" stroke="#3c3c3c"/><rect x="3" y="4.5" width="5" height="4" fill="#f2efec" stroke="#3c3c3c"/><rect x="14.5" y="0.5" width="12" height="10.5" rx="2" fill="none" stroke="#8e8a86"/><path d="M17.5 3l6 5.5M23.5 3l-6 5.5" stroke="#3c3c3c" stroke-width="2"/></svg>
<div class="a btn" style="left:1098.5px;top:965.5px;width:219.5px;height:21.0px;"></div>
<div class="a t" style="left:1103.3px;top:966px;font:normal 13.4px 'Liberation Sans',sans-serif;line-height:19px;color:#000;">pipe.tcae</div>
<svg class="a" style="left:1302.5px;top:973.0px;" width="10" height="6" viewBox="0 0 10 6"><path d="M0.5 0.5h9l-4.5 5z" fill="#3c3c3c"/></svg>
<div class="a btn" style="left:1324.5px;top:965.5px;width:218.5px;height:21.0px;"></div>
<div class="a t" style="left:1329.2px;top:966px;font:normal 13.4px 'Liberation Sans',sans-serif;line-height:19px;color:#000;">Solver output</div>
<svg class="a" style="left:1527.5px;top:973.0px;" width="10" height="6" viewBox="0 0 10 6"><path d="M0.5 0.5h9l-4.5 5z" fill="#3c3c3c"/></svg>
<div class="a btn" style="left:1550.5px;top:965.5px;width:218.0px;height:21.0px;"></div>
<div class="a t" style="left:1359.5px;width:600px;text-align:center;top:966px;font:normal 13.4px 'Liberation Sans',sans-serif;line-height:19px;color:#000;">Save output to file...</div>
<div class="a btn" style="left:1775.5px;top:965.5px;width:219.0px;height:21.0px;"></div>
<div class="a t" style="left:1585px;width:600px;text-align:center;top:966px;font:normal 13.4px 'Liberation Sans',sans-serif;line-height:19px;color:#000;">Clean window</div>
<div class="a" style="left:1098.5px;top:993.5px;width:896px;height:80px;background:#fff;border:1px solid #b9b4af;box-sizing:border-box"></div>
<div class="a t" style="left:1103.3px;top:994.3px;font:normal 12px 'Liberation Mono',monospace;line-height:17px;color:#505050;">pipe-tutorial.vtu</div>
<div class="a t" style="left:1103.3px;top:1009.3px;font:normal 12px 'Liberation Mono',monospace;line-height:17px;color:#505050;">Step 1, time 1.0, Displacement, 3 components, 108438 values</div>
<div class="a t" style="left:1103.3px;top:1024.3px;font:normal 12px 'Liberation Mono',monospace;line-height:17px;color:#505050;">Step 1, time 1.0, Stress, 10 components, 108438 values</div>
<div class="a t" style="left:1103.3px;top:1039.3px;font:normal 12px 'Liberation Mono',monospace;line-height:17px;color:#505050;">END</div>
<div class="a" style="left:1980.5px;top:994.5px;width:13.5px;height:69px;background:#f7f6f4;border-left:1px solid #c9c4bf;box-sizing:border-box"></div>
<div class="a" style="left:1981.5px;top:1007.5px;width:12.5px;height:13.5px;background:#dedbd8"></div>
<svg class="a" style="left:1982px;top:996px;" width="11" height="8" viewBox="0 0 11 8"><path d="M1 6.5l4.5-5 4.5 5z" fill="#4a4a4a"/></svg>
<svg class="a" style="left:1982px;top:1052px;" width="11" height="8" viewBox="0 0 11 8"><path d="M1 1.5l4.5 5 4.5-5z" fill="#4a4a4a"/></svg>
<div class="a" style="left:784px;top:263px;width:610px;height:23px;background:linear-gradient(90deg,#dbe9f7 0.0%,#b3d3f0 3.2%,#5aa9e0 12.0%,#3a8ccf 18.0%,#1c62a8 24.0%,#1a4478 30.0%,#20404f 33.0%,#1f5a35 36.0%,#1f7028 42.0%,#2a8a2a 48.0%,#5aa048 54.0%,#a8c47c 60.0%,#e3d89a 66.0%,#ecc48c 72.0%,#e0a070 78.0%,#c8704e 84.0%,#aa4a34 90.0%,#801c14 96.0%,#6a0000 100.0%)"></div>
<div class="a" style="left:783.1px;top:253.3px;width:1.2px;height:13.4px;background:#f4f4ee"></div>
<div class="a" style="left:856.1px;top:253.3px;width:1.2px;height:13.4px;background:#f4f4ee"></div>
<div class="a" style="left:928.8px;top:253.3px;width:1.2px;height:13.4px;background:#f4f4ee"></div>
<div class="a" style="left:1004.0px;top:253.3px;width:1.2px;height:13.4px;background:#f4f4ee"></div>
<div class="a" style="left:1076.7px;top:253.3px;width:1.2px;height:13.4px;background:#f4f4ee"></div>
<div class="a" style="left:1150.2px;top:253.3px;width:1.2px;height:13.4px;background:#f4f4ee"></div>
<div class="a" style="left:1224.0px;top:253.3px;width:1.2px;height:13.4px;background:#f4f4ee"></div>
<div class="a" style="left:1296.9px;top:253.3px;width:1.2px;height:13.4px;background:#f4f4ee"></div>
<div class="a" style="left:1393.5px;top:253.3px;width:1.2px;height:13.4px;background:#f4f4ee"></div>
<div class="a t" style="left:788px;width:600px;text-align:center;top:194.2px;font:normal 24.8px 'Liberation Sans',sans-serif;line-height:35px;color:#f4f4ee;letter-spacing:0.8px;-webkit-text-stroke:0.7px #f4f4ee">Displacement Magnitude (m)</div>
<div class="a t" style="left:484.5px;width:600px;text-align:center;top:225.9px;font:normal 20px 'Liberation Sans',sans-serif;line-height:28px;color:#f4f4ee;letter-spacing:0.3px;-webkit-text-stroke:0.55px #f4f4ee">0.0e+00</div>
<div class="a t" style="left:556.8px;width:600px;text-align:center;top:225.9px;font:normal 20px 'Liberation Sans',sans-serif;line-height:28px;color:#f4f4ee;letter-spacing:0.3px;-webkit-text-stroke:0.55px #f4f4ee">0.002</div>
<div class="a t" style="left:629.3px;width:600px;text-align:center;top:225.9px;font:normal 20px 'Liberation Sans',sans-serif;line-height:28px;color:#f4f4ee;letter-spacing:0.3px;-webkit-text-stroke:0.55px #f4f4ee">0.004</div>
<div class="a t" style="left:704.5px;width:600px;text-align:center;top:225.9px;font:normal 20px 'Liberation Sans',sans-serif;line-height:28px;color:#f4f4ee;letter-spacing:0.3px;-webkit-text-stroke:0.55px #f4f4ee">0.006</div>
<div class="a t" style="left:777.2px;width:600px;text-align:center;top:225.9px;font:normal 20px 'Liberation Sans',sans-serif;line-height:28px;color:#f4f4ee;letter-spacing:0.3px;-webkit-text-stroke:0.55px #f4f4ee">0.008</div>
<div class="a t" style="left:850.7px;width:600px;text-align:center;top:225.9px;font:normal 20px 'Liberation Sans',sans-serif;line-height:28px;color:#f4f4ee;letter-spacing:0.3px;-webkit-text-stroke:0.55px #f4f4ee">0.01</div>
<div class="a t" style="left:924.5px;width:600px;text-align:center;top:225.9px;font:normal 20px 'Liberation Sans',sans-serif;line-height:28px;color:#f4f4ee;letter-spacing:0.3px;-webkit-text-stroke:0.55px #f4f4ee">0.012</div>
<div class="a t" style="left:997.4000000000001px;width:600px;text-align:center;top:225.9px;font:normal 20px 'Liberation Sans',sans-serif;line-height:28px;color:#f4f4ee;letter-spacing:0.3px;-webkit-text-stroke:0.55px #f4f4ee">0.014</div>
<div class="a t" style="left:1095.7px;width:600px;text-align:center;top:225.9px;font:normal 20px 'Liberation Sans',sans-serif;line-height:28px;color:#f4f4ee;letter-spacing:0.3px;-webkit-text-stroke:0.55px #f4f4ee">1.7e-02</div>
<svg class="a" style="left:15px;top:25px" width="22.0" height="21.0" viewBox="0 0 24 24" preserveAspectRatio="none"><path d="M1 4h6l2 2h6v14H1z" fill="#f0b34e" stroke="#a8884a"/><path d="M4 9h19v13H4z" fill="#f5d86e" stroke="#a8884a"/><path d="M17 1l5 5h-3v5h-4V6h-3z" fill="#2a8ed6"/></svg>
<svg class="a" style="left:47px;top:25px" width="22.0" height="21.0" viewBox="0 0 24 24" preserveAspectRatio="none"><path d="M1 4h6l2 2h6v14H1z" fill="#f0b34e" stroke="#a8884a"/><path d="M4 9h19v13H4z" fill="#f5d86e" stroke="#a8884a"/><path d="M14 1h4v6h3l-5 6-5-6h3z" fill="#8fcf72" stroke="#6f9a5e" stroke-width="0.6"/></svg>
<svg class="a" style="left:85.5px;top:26px" width="21.0" height="22.0" viewBox="0 0 21 22" preserveAspectRatio="none"><path d="M1 4l2.5-2.5h6.5v15l-2.5 2.5H1z" fill="#b7b7af" stroke="#74746c" stroke-width="0.9"/><path d="M5 4h5v15h-5z" fill="#efefee" stroke="#74746c" stroke-width="0.9"/><path d="M6.5 7h2M6.5 9h2" stroke="#9a9a94" stroke-width="0.7"/><path d="M10.5 4l2.5-2.5h6.5v15l-2.5 2.5H10.5z" fill="#b7b7af" stroke="#74746c" stroke-width="0.9"/><path d="M14.5 4h5v15h-5z" fill="#efefee" stroke="#74746c" stroke-width="0.9"/><path d="M16.0 7h2M16.0 9h2" stroke="#9a9a94" stroke-width="0.7"/><path d="M4 20.5h13" stroke="#c8c8c4" stroke-width="1.6"/><circle cx="10.5" cy="20" r="2.4" fill="#8fcf72"/></svg>
<svg class="a" style="left:117.5px;top:26px" width="21.0" height="22.0" viewBox="0 0 21 22" preserveAspectRatio="none"><path d="M1 4l2.5-2.5h6.5v15l-2.5 2.5H1z" fill="#b7b7af" stroke="#74746c" stroke-width="0.9"/><path d="M5 4h5v15h-5z" fill="#efefee" stroke="#74746c" stroke-width="0.9"/><path d="M6.5 7h2M6.5 9h2" stroke="#9a9a94" stroke-width="0.7"/><path d="M10.5 4l2.5-2.5h6.5v15l-2.5 2.5H10.5z" fill="#b7b7af" stroke="#74746c" stroke-width="0.9"/><path d="M14.5 4h5v15h-5z" fill="#efefee" stroke="#74746c" stroke-width="0.9"/><path d="M16.0 7h2M16.0 9h2" stroke="#9a9a94" stroke-width="0.7"/><path d="M4 20.5h13" stroke="#c8c8c4" stroke-width="1.6"/><path d="M8.5 18.5l4 3.5M12.5 18.5l-4 3.5" stroke="#d83a2a" stroke-width="1.6"/></svg>
<svg class="a" style="left:149.5px;top:26px" width="21.0" height="21.0" viewBox="0 0 24 24" preserveAspectRatio="none"><path d="M6 5.5A9.5 9.5 0 1 1 3.2 10" fill="none" stroke="#8fcf72" stroke-width="3.2"/><path d="M1 3l7 1-4 6z" fill="#8fcf72"/><path d="M12 6v7" stroke="#e0b040" stroke-width="2"/><circle cx="12" cy="13" r="1.5" fill="#e0b040"/></svg>
<svg class="a" style="left:188px;top:29px" width="20.5" height="15.5" viewBox="0 0 20.5 15.5" preserveAspectRatio="none"><path d="M0.5 13.5l3-9 6.5 6z" fill="#e41e1e"/><path d="M5.5 8.5C9 3 16 1 18.5 6 20 9.5 17.5 13 14.5 14.5" fill="none" stroke="#e41e1e" stroke-width="3.4" stroke-linecap="round"/></svg>
<svg class="a" style="left:219.5px;top:29px" width="21.0" height="15.5" viewBox="0 0 21 15.5" preserveAspectRatio="none"><path d="M20.5 13.5l-3-9-6.5 6z" fill="#d3d3d0"/><path d="M15.5 8.5C12 3 5 1 2.5 6 1 9.5 3.5 13 6.5 14.5" fill="none" stroke="#d3d3d0" stroke-width="3.4" stroke-linecap="round"/></svg>
<svg class="a" style="left:258px;top:26.5px" width="20.0" height="21.0" viewBox="0 0 20 21" preserveAspectRatio="none"><path d="M1 11l2-1.5h5v10l-2 1.5H1z" fill="#b7b7af" stroke="#74746c" stroke-width="0.9"/><path d="M4 11h4v10H4z" fill="#efefee" stroke="#74746c" stroke-width="0.9"/><path d="M9 13L15.5 6.5l-2.5-1.5L19.5 1l-1 7-2-2L10 12.5z" fill="#a6d890" stroke="#6f9a5e" stroke-width="0.8"/></svg>
<svg class="a" style="left:289px;top:26px" width="22.0" height="21.5" viewBox="0 0 24 24" preserveAspectRatio="none"><rect x="3" y="1" width="10" height="20" fill="#c9cac9" stroke="#7b7b78"/><rect x="3.5" y="9" width="9" height="11.5" fill="url(#cmg)"/><rect x="1" y="9" width="20" height="13" fill="none" stroke="#8a8a86" stroke-dasharray="2 1.5"/><path d="M15 14l7 7M15 14v5M15 14h5" stroke="#55585a" stroke-width="1.8"/><defs><linearGradient id="cmg" x1="0" y1="0" x2="0" y2="1"><stop offset="0" stop-color="#3ab0e0"/><stop offset="0.5" stop-color="#2a70c8"/><stop offset="1" stop-color="#6a4aa0"/></linearGradient></defs></svg>
<svg class="a" style="left:321px;top:26px" width="25.0" height="22.5" viewBox="0 0 24 24" preserveAspectRatio="none"><path d="M11 2C4 2 1 8 2 13c1 5 5 8 7 8 3 0 2-3 4-4 3-1 5 0 6-3 2-6-3-12-8-12z" fill="#f5d9aa" stroke="#a8864e"/><circle cx="6" cy="8" r="2" fill="#3aa0e0"/><circle cx="10.5" cy="5" r="1.8" fill="#5aaa4a"/><circle cx="6" cy="14" r="2" fill="#e03030"/><path d="M9 21l10-16" stroke="#a07a40" stroke-width="2.2"/><path d="M17 7l4-6 1 2-3 5z" fill="#fff" stroke="#777" stroke-width="0.7"/><path d="M18 20h5l-2.5 3z" fill="#222"/></svg>
<svg class="a" style="left:371px;top:29px" width="21.0" height="17.0" viewBox="0 0 24 24" preserveAspectRatio="none"><rect x="1" y="1" width="5" height="22" fill="#a8d890" stroke="#7b9a6c" stroke-width="0.9"/><path d="M23 1v22L8 12z" fill="#a8d890" stroke="#7b9a6c" stroke-width="0.9"/></svg>
<svg class="a" style="left:402.5px;top:29px" width="21.0" height="17.0" viewBox="0 0 24 24" preserveAspectRatio="none"><path d="M14 1v22L1 12z" fill="#a8d890" stroke="#7b9a6c" stroke-width="0.9"/><rect x="17" y="1" width="5" height="22" fill="#a8d890" stroke="#7b9a6c" stroke-width="0.9"/></svg>
<svg class="a" style="left:439.5px;top:29px" width="14.0" height="17.0" viewBox="0 0 24 24" preserveAspectRatio="none"><path d="M2 1v22l20-11z" fill="#a8d890" stroke="#7b9a6c" stroke-width="0.9"/></svg>
<svg class="a" style="left:467px;top:29px" width="21.0" height="17.0" viewBox="0 0 24 24" preserveAspectRatio="none"><rect x="1" y="1" width="5" height="22" fill="#a8d890" stroke="#7b9a6c" stroke-width="0.9"/><path d="M9 1v22l14-11z" fill="#a8d890" stroke="#7b9a6c" stroke-width="0.9"/></svg>
<svg class="a" style="left:499px;top:29px" width="20.0" height="17.0" viewBox="0 0 24 24" preserveAspectRatio="none"><path d="M1 1v22l15-11z" fill="#a8d890" stroke="#7b9a6c" stroke-width="0.9"/><rect x="17" y="1" width="5" height="22" fill="#a8d890" stroke="#7b9a6c" stroke-width="0.9"/></svg>
<svg class="a" style="left:532px;top:27px" width="18.0" height="20.0" viewBox="0 0 24 24" preserveAspectRatio="none"><path d="M2 12V6h12V2l7 5-7 5V9H6v3zM22 12v6H10v4l-7-5 7-5v3h8v-3z" fill="#a8d890" stroke="#7b9a6c" stroke-width="0.9"/></svg>
<svg class="a" style="left:796px;top:28px" width="23.0" height="21.0" viewBox="0 0 24 24" preserveAspectRatio="none"><path d="M2 7h5l1-3h7l1 3h6v12H2z" fill="#c6c6c4" stroke="#8a8a86"/><circle cx="12" cy="13" r="5" fill="#e8f4fb" stroke="#8a8a86" stroke-width="1.5"/><circle cx="12" cy="13" r="3" fill="#9fd2f0"/><path d="M14 15l8 8" stroke="#2a8ed6" stroke-width="3"/><circle cx="14.5" cy="15.5" r="2.5" fill="none" stroke="#2a8ed6" stroke-width="1.8"/></svg>
<svg class="a" style="left:828.5px;top:28px" width="22.0" height="21.0" viewBox="0 0 24 24" preserveAspectRatio="none"><path d="M2 7h5l1-3h7l1 3h6v12H2z" fill="#c6c6c4" stroke="#8a8a86"/><circle cx="12" cy="13" r="5" fill="#e8f4fb" stroke="#8a8a86" stroke-width="1.5"/><circle cx="12" cy="13" r="3" fill="#9fd2f0"/><path d="M18 13v10M13 18h10" stroke="#2a8ed6" stroke-width="3.2"/></svg>
<svg class="a" style="left:879.5px;top:26px" width="17.0" height="22.0" viewBox="0 0 24 24" preserveAspectRatio="none"><rect x="1" y="1" width="22" height="22" rx="3" fill="#cfcfcc" stroke="#6d6d69" stroke-width="1.2"/><rect x="4" y="3.5" width="16" height="4" rx="1" fill="#b9dff5" stroke="#6d8ea8" stroke-width="0.6"/><circle cx="7" cy="11.5" r="1.7" fill="#5a5a3a"/><circle cx="7" cy="15.5" r="1.7" fill="#5a5a3a"/><circle cx="7" cy="19.5" r="1.7" fill="#5a5a3a"/><circle cx="12" cy="11.5" r="1.7" fill="#5a5a3a"/><circle cx="12" cy="15.5" r="1.7" fill="#5a5a3a"/><circle cx="12" cy="19.5" r="1.7" fill="#5a5a3a"/><circle cx="17" cy="11.5" r="1.7" fill="#5a5a3a"/><circle cx="17" cy="15.5" r="1.7" fill="#5a5a3a"/><circle cx="17" cy="19.5" r="1.7" fill="#5a5a3a"/></svg>
<svg class="a" style="left:910px;top:26px" width="22.0" height="22.0" viewBox="0 0 24 24" preserveAspectRatio="none"><ellipse cx="12" cy="12" rx="8" ry="11" transform="rotate(-40 12 12)" fill="#c4c2bf" stroke="#a09e9a"/><ellipse cx="13" cy="13" rx="4" ry="6" transform="rotate(-40 13 13)" fill="none" stroke="#a09e9a"/><ellipse cx="13" cy="13" rx="2" ry="3" transform="rotate(-40 13 13)" fill="none" stroke="#a09e9a"/></svg>
<svg class="a" style="left:943.5px;top:26px" width="21.5" height="22.0" viewBox="0 0 24 24" preserveAspectRatio="none"><path d="M2 5l5-4h15v17l-5 4H2z" fill="none" stroke="#a8a6a2" stroke-width="1.3"/><path d="M2 5h15v17M17 5l5-4" fill="none" stroke="#a8a6a2" stroke-width="1.3"/><path d="M2 5l9 0 1 13H2z" fill="#b6b4b0"/><path d="M6 7h8l-1 11H7z" fill="#d6d4d0" stroke="#a8a6a2"/></svg>
<svg class="a" style="left:977px;top:26px" width="21.5" height="22.0" viewBox="0 0 24 24" preserveAspectRatio="none"><path d="M2 5l5-4h15v17l-5 4H2z" fill="none" stroke="#a8a6a2" stroke-width="1.3"/><path d="M2 5h15v17M17 5l5-4" fill="none" stroke="#a8a6a2" stroke-width="1.3"/><path d="M5 7h9l-1 12H6z" fill="#cfcdc9" stroke="#a8a6a2"/></svg>
<svg class="a" style="left:1009px;top:26px" width="22.0" height="22.0" viewBox="0 0 24 24" preserveAspectRatio="none"><path d="M2 5l5-4h15v17l-5 4H2z" fill="none" stroke="#a8a6a2" stroke-width="1.3"/><path d="M2 5h15v17M17 5l5-4" fill="none" stroke="#a8a6a2" stroke-width="1.3"/><path d="M4 7h5v10H4zM11 4h2v14h-2zM14 8h5v10h-5z" fill="#cfcdc9" stroke="#a8a6a2" stroke-width="0.8"/></svg>
<svg class="a" style="left:1042px;top:26px" width="22.0" height="22.0" viewBox="0 0 24 24" preserveAspectRatio="none"><path d="M2 5l5-4h15v17l-5 4H2z" fill="none" stroke="#a8a6a2" stroke-width="1.3"/><path d="M2 5h15v17M17 5l5-4" fill="none" stroke="#a8a6a2" stroke-width="1.3"/><path d="M6 8l3-2h8v9l-3 2H6z" fill="#c9c7c3" stroke="#a8a6a2"/><path d="M6 8h8v9" fill="none" stroke="#a8a6a2"/></svg>
<svg class="a" style="left:1075px;top:25.5px" width="22.0" height="22.0" viewBox="0 0 24 24" preserveAspectRatio="none"><circle cx="12" cy="12" r="10" fill="none" stroke="#b3b1ad" stroke-width="1.4"/><circle cx="12" cy="12" r="5" fill="none" stroke="#b3b1ad" stroke-width="1.4"/><circle cx="12" cy="2" r="2" fill="#d4d2ce" stroke="#a8a6a2" stroke-width="0.8"/><circle cx="12" cy="22" r="2" fill="#d4d2ce" stroke="#a8a6a2" stroke-width="0.8"/><circle cx="2" cy="12" r="2" fill="#d4d2ce" stroke="#a8a6a2" stroke-width="0.8"/><circle cx="22" cy="12" r="2" fill="#d4d2ce" stroke="#a8a6a2" stroke-width="0.8"/><circle cx="5" cy="5" r="2" fill="#d4d2ce" stroke="#a8a6a2" stroke-width="0.8"/><circle cx="19" cy="5" r="2" fill="#d4d2ce" stroke="#a8a6a2" stroke-width="0.8"/><circle cx="5" cy="19" r="2" fill="#d4d2ce" stroke="#a8a6a2" stroke-width="0.8"/><circle cx="19" cy="19" r="2" fill="#d4d2ce" stroke="#a8a6a2" stroke-width="0.8"/></svg>
<svg class="a" style="left:1110px;top:26px" width="18.0" height="21.0" viewBox="0 0 24 24" preserveAspectRatio="none"><circle cx="7" cy="12" r="5" fill="#c9c7c3" stroke="#b0aeaa"/><path d="M1 4c5-3 10 0 22 0M2 20c6 3 11 0 21 0M14 9h9M14 15h9" fill="none" stroke="#b8b6b2" stroke-width="1.3"/></svg>
<svg class="a" style="left:1141px;top:27px" width="21.0" height="20.0" viewBox="0 0 24 24" preserveAspectRatio="none"><path d="M1 14c5-1 10-4 14-12l8 3-1 18H1z" fill="#cdcbc7" stroke="#a8a6a2"/></svg>
<svg class="a" style="left:1175.5px;top:27px" width="18.5" height="20.0" viewBox="0 0 24 24" preserveAspectRatio="none"><circle cx="12" cy="12" r="10.5" fill="none" stroke="#666" stroke-width="1.2"/><circle cx="7.5" cy="8" r="3" fill="#cfe8f0" stroke="#666" stroke-width="0.8"/><circle cx="14" cy="14" r="5" fill="#9ed47e" stroke="#666" stroke-width="0.8"/><circle cx="6" cy="16" r="2" fill="#9ed47e" stroke="#666" stroke-width="0.6"/></svg>
<svg class="a" style="left:1206.5px;top:25.5px" width="20.5" height="21.5" viewBox="0 0 24 24" preserveAspectRatio="none"><circle cx="13.5" cy="13.5" r="9.5" fill="none" stroke="#b0aeaa" stroke-width="1.2"/><circle cx="4" cy="3.5" r="2.8" fill="none" stroke="#b0aeaa" stroke-width="1"/><circle cx="16.5" cy="14.5" r="4.5" fill="#cfcdc9" stroke="#b0aeaa"/><circle cx="9" cy="17" r="2" fill="#cfcdc9" stroke="#b0aeaa"/></svg>
<svg class="a" style="left:1257px;top:27px" width="19.5" height="19.5" viewBox="0 0 24 24" preserveAspectRatio="none"><path d="M1 1h16v12h-6v10H1z" fill="#cfe3f7" stroke="#555a60" stroke-width="1.4"/><rect x="12" y="14" width="10.5" height="9" fill="#9ed47e" stroke="#666" stroke-width="0.9" stroke-dasharray="1.5 1"/></svg>
<svg class="a" style="left:1290px;top:27px" width="20.0" height="19.5" viewBox="0 0 24 24" preserveAspectRatio="none"><circle cx="6" cy="6" r="4.5" fill="none" stroke="#b4b2ae" stroke-width="1.2"/><path d="M6 3v3l2 2" stroke="#b4b2ae" fill="none"/><rect x="14" y="2" width="8" height="7" fill="none" stroke="#b4b2ae" stroke-dasharray="1.5 1"/><path d="M2 16v6h21M2 19l2-3 2 4 2-4 2 4 2-4 2 4 2-4 2 4 2-4 2 2" fill="none" stroke="#b4b2ae" stroke-width="1.2"/></svg>
<svg class="a" style="left:1323px;top:27px" width="20.5" height="20.0" viewBox="0 0 24 24" preserveAspectRatio="none"><path d="M2 3l14-2 7 6-6 16-13-2z" fill="#c6c4c0" stroke="#a8a6a2"/><path d="M2 20L22 4M5 17l2-4 2 3 2-4 2 3 2-4 2 3" fill="none" stroke="#8d8b87" stroke-width="1.1"/></svg>
<svg class="a" style="left:1355.5px;top:27px" width="20.0" height="19.5" viewBox="0 0 24 24" preserveAspectRatio="none"><circle cx="6" cy="6" r="4.5" fill="none" stroke="#2a7ab8" stroke-width="1.3"/><path d="M6 3v3l2 2" stroke="#2a7ab8" fill="none"/><circle cx="18" cy="6" r="5" fill="#a88a50" stroke="#d4a830" stroke-width="1.5"/><path d="M2 16v6h21M2 19l2-3 2 4 2-4 2 4 2-4 2 4 2-4 2 4 2-4 2 2" fill="none" stroke="#2a7ab8" stroke-width="1.4"/></svg>
<svg class="a" style="left:1388px;top:25px" width="22.0" height="23.0" viewBox="0 0 24 24" preserveAspectRatio="none"><path d="M3 5l9-4 9 4v14l-9 4-9-4z" fill="#eceae7" stroke="#d8d6d2"/><path d="M12 5v16M5 9l14 8M19 9L5 17" stroke="#c8c6c2" stroke-width="1.1"/></svg>
<svg class="a" style="left:20px;top:66px" width="12.0" height="19.5" viewBox="0 0 24 24" preserveAspectRatio="none"><rect x="1" y="1" width="22" height="22" rx="2" fill="url(#gb)"/><defs><linearGradient id="gb" x1="0" y1="0" x2="0" y2="1"><stop offset="0" stop-color="#c9c7c4"/><stop offset="0.3" stop-color="#dcdad7"/><stop offset="0.5" stop-color="#b4b2ae"/><stop offset="1" stop-color="#a6a4a0"/></linearGradient></defs></svg>
<svg class="a" style="left:48px;top:65px" width="20.0" height="20.0" viewBox="0 0 24 24" preserveAspectRatio="none"><rect x="8" y="9" width="15" height="14" fill="#c5c3bf" stroke="#b2b0ac"/><path d="M8 16h15M15 9v14" stroke="#d8d6d2"/><circle cx="8.5" cy="7.5" r="7" fill="#d2d0cc" stroke="#b8b6b2"/></svg>
<svg class="a" style="left:80px;top:65px" width="20.0" height="20.0" viewBox="0 0 24 24" preserveAspectRatio="none"><rect x="2" y="9" width="21" height="14" fill="#c5c3bf" stroke="#b2b0ac"/><path d="M9 16h14" stroke="#d8d6d2"/><path d="M5 17c-4-3 0-9 3-6M13 4c3-4 9 0 5 5l-3 3" fill="none" stroke="#777573" stroke-width="2.4"/><path d="M3 4l2 2M7 1v3M16 13l2 2M19 11h3" stroke="#8a8884" stroke-width="0.9"/></svg>
<svg class="a" style="left:111px;top:67px" width="22.0" height="19.0" viewBox="0 0 24 24" preserveAspectRatio="none"><path d="M1 7l6-6v3h10V1l6 6-6 6v-3H7v3z" fill="#d2d0cc" stroke="#b8b6b2"/><path d="M1 15v8M1 19h22M7 16v6M13 16v6M23 15v8" stroke="#b4b2ae" stroke-width="1.1"/><path d="M19 16v6" stroke="#b4b2ae" stroke-width="1.1"/></svg>
<svg class="a" style="left:143px;top:67px" width="22.0" height="19.0" viewBox="0 0 24 24" preserveAspectRatio="none"><path d="M1 7l6-6v3h10V1l6 6-6 6v-3H7v3z" fill="#d2d0cc" stroke="#b8b6b2"/><path d="M1 15v8M1 19h22M7 16v6M13 16v6M23 15v8" stroke="#b4b2ae" stroke-width="1.1"/><text x="15" y="23" font-family="Liberation Sans" font-weight="bold" font-size="11" fill="#8a8884">c</text></svg>
<svg class="a" style="left:175px;top:67px" width="22.0" height="19.0" viewBox="0 0 24 24" preserveAspectRatio="none"><path d="M1 7l6-6v3h10V1l6 6-6 6v-3H7v3z" fill="#d2d0cc" stroke="#b8b6b2"/><path d="M1 15v8M1 19h22M7 16v6M13 16v6M23 15v8" stroke="#b4b2ae" stroke-width="1.1"/><text x="16" y="23" font-family="Liberation Sans" font-weight="bold" font-size="12" fill="#8a8884">t</text></svg>
<svg class="a" style="left:206.5px;top:67px" width="22.0" height="19.0" viewBox="0 0 24 24" preserveAspectRatio="none"><path d="M1 7l6-6v3h10V1l6 6-6 6v-3H7v3z" fill="#d2d0cc" stroke="#b8b6b2"/><path d="M1 15v8M1 19h22M7 16v6M13 16v6M23 15v8" stroke="#b4b2ae" stroke-width="1.1"/><ellipse cx="17" cy="19" rx="5" ry="3" fill="#9a9894"/><circle cx="17" cy="19" r="2" fill="#555"/></svg>
<svg class="a" style="left:654.5px;top:63.5px" width="25.0" height="24.5" viewBox="0 0 24 24" preserveAspectRatio="none"><path d="M5 5l14 14M19 5L5 19" stroke="#6d6d55" stroke-width="1.8"/><path d="M1 1l10 3-7 7z" fill="#a8d890" stroke="#7b9a6c" stroke-width="0.8"/><path d="M23 1l-3 10-7-7z" fill="#a8d890" stroke="#7b9a6c" stroke-width="0.8"/><path d="M1 23l3-10 7 7z" fill="#a8d890" stroke="#7b9a6c" stroke-width="0.8"/><path d="M23 23l-10-3 7-7z" fill="#a8d890" stroke="#7b9a6c" stroke-width="0.8"/></svg>
<svg class="a" style="left:687.5px;top:64px" width="23.0" height="23.5" viewBox="0 0 24 24" preserveAspectRatio="none"><circle cx="12" cy="12" r="3.3" fill="#2a86d0"/><path d="M3 3l6 6" stroke="#6d6d55" stroke-width="1.4"/><path d="M21 3l-6 6M3 21l6-6M21 21l-6-6" stroke="#6d6d55" stroke-width="1.4"/><path d="M9 9L2 7l5-5z" fill="#a8d890" stroke="#7b9a6c" stroke-width="0.8"/><path d="M15 9l7-2-5-5z" fill="#a8d890" stroke="#7b9a6c" stroke-width="0.8"/><path d="M9 15l-7 2 5 5z" fill="#a8d890" stroke="#7b9a6c" stroke-width="0.8"/><path d="M15 15l7 2-5 5z" fill="#a8d890" stroke="#7b9a6c" stroke-width="0.8"/></svg>
<svg class="a" style="left:719px;top:64px" width="24.0" height="24.0" viewBox="0 0 24 24" preserveAspectRatio="none"><path d="M1 10V1h9M1 14v2" fill="none" stroke="#777" stroke-dasharray="2 1.5" stroke-width="1.1"/><path d="M14 1h8v3" fill="none" stroke="#777" stroke-dasharray="2 1.5"/><circle cx="12" cy="13" r="6.5" fill="#d6ecfa" stroke="#8a8a86" stroke-width="2"/><path d="M17 18l5 5" stroke="#8a8a86" stroke-width="2.6"/></svg>
<svg class="a" style="left:751.5px;top:64px" width="24.0" height="24.0" viewBox="0 0 24 24" preserveAspectRatio="none"><path d="M1 20l5-4v2.5h8v3H6V24z" fill="#f0c020" stroke="#8a7a50" stroke-width="0.6"/><rect x="14" y="15" width="8" height="8" fill="#e04030" stroke="#6f6a55" stroke-width="0.6"/><path d="M18 1l-4 5h2.5v9h3V6H22z" fill="#a8d890" stroke="#6f8a5e" stroke-width="0.6"/><text x="1" y="10" font-family="Liberation Sans" font-weight="bold" font-size="9" fill="#6d6b67">+X</text></svg>
<svg class="a" style="left:783px;top:64px" width="24.0" height="24.0" viewBox="0 0 24 24" preserveAspectRatio="none"><path d="M23 20l-5-4v2.5h-8v3h8V24z" fill="#f0c020" stroke="#8a7a50" stroke-width="0.6"/><rect x="2" y="15" width="8" height="8" fill="#e04030" stroke="#6f6a55" stroke-width="0.6"/><path d="M6 1l-4 5h2.5v9h3V6H10z" fill="#a8d890" stroke="#6f8a5e" stroke-width="0.6"/><text x="12" y="10" font-family="Liberation Sans" font-weight="bold" font-size="9" fill="#6d6b67">-X</text></svg>
<svg class="a" style="left:814.5px;top:64px" width="24.5" height="24.0" viewBox="0 0 24 24" preserveAspectRatio="none"><path d="M23 20l-5-4v2.5h-8v3h8V24z" fill="#e04030" stroke="#8a7a50" stroke-width="0.6"/><rect x="2" y="15" width="8" height="8" fill="#f0c020" stroke="#6f6a55" stroke-width="0.6"/><path d="M6 1l-4 5h2.5v9h3V6H10z" fill="#a8d890" stroke="#6f8a5e" stroke-width="0.6"/><text x="12" y="10" font-family="Liberation Sans" font-weight="bold" font-size="9" fill="#6d6b67">+Y</text></svg>
<svg class="a" style="left:847px;top:64px" width="24.5" height="24.0" viewBox="0 0 24 24" preserveAspectRatio="none"><path d="M1 20l5-4v2.5h8v3H6V24z" fill="#e04030" stroke="#8a7a50" stroke-width="0.6"/><rect x="14" y="15" width="8" height="8" fill="#f0c020" stroke="#6f6a55" stroke-width="0.6"/><path d="M18 1l-4 5h2.5v9h3V6H22z" fill="#a8d890" stroke="#6f8a5e" stroke-width="0.6"/><text x="1" y="10" font-family="Liberation Sans" font-weight="bold" font-size="9" fill="#6d6b67">-Y</text></svg>
<svg class="a" style="left:879.5px;top:64px" width="23.5" height="24.0" viewBox="0 0 24 24" preserveAspectRatio="none"><path d="M1 20l5-4v2.5h8v3H6V24z" fill="#e04030" stroke="#8a7a50" stroke-width="0.6"/><rect x="14" y="15" width="8" height="8" fill="#a8d890" stroke="#6f6a55" stroke-width="0.6"/><path d="M18 1l-4 5h2.5v9h3V6H22z" fill="#f0c020" stroke="#6f8a5e" stroke-width="0.6"/><text x="1" y="10" font-family="Liberation Sans" font-weight="bold" font-size="9" fill="#6d6b67">+Z</text></svg>
<svg class="a" style="left:911px;top:64px" width="24.5" height="24.0" viewBox="0 0 24 24" preserveAspectRatio="none"><path d="M23 20l-5-4v2.5h-8v3h8V24z" fill="#e04030" stroke="#8a7a50" stroke-width="0.6"/><rect x="2" y="15" width="8" height="8" fill="#a8d890" stroke="#6f6a55" stroke-width="0.6"/><path d="M6 1l-4 5h2.5v9h3V6H10z" fill="#f0c020" stroke="#6f8a5e" stroke-width="0.6"/><text x="12" y="10" font-family="Liberation Sans" font-weight="bold" font-size="9" fill="#6d6b67">-Z</text></svg>
<svg class="a" style="left:942.5px;top:64px" width="24.5" height="25.0" viewBox="0 0 24 24" preserveAspectRatio="none"><path d="M16 5A7.5 7.5 0 1 0 12 17" fill="none" stroke="#a8d890" stroke-width="2.8"/><path d="M20 2l-1 8-6-5z" fill="#a8d890"/><text x="10" y="24" font-family="Liberation Sans" font-weight="bold" font-size="8.5" fill="#6d6b67">+90</text></svg>
<svg class="a" style="left:975px;top:64px" width="23.5" height="25.0" viewBox="0 0 24 24" preserveAspectRatio="none"><path d="M8 5A7.5 7.5 0 1 1 12 17" fill="none" stroke="#a8d890" stroke-width="2.8"/><path d="M4 2l1 8 6-5z" fill="#a8d890"/><text x="0" y="24" font-family="Liberation Sans" font-weight="bold" font-size="8.5" fill="#6d6b67">-90</text></svg>
<svg class="a" style="left:1024px;top:64px" width="24.0" height="24.0" viewBox="0 0 24 24" preserveAspectRatio="none"><path d="M7 14V3" stroke="#f0c020" stroke-width="3"/><path d="M7 0l-4 5h8z" fill="#f0c020"/><path d="M7 14h11" stroke="#e04030" stroke-width="3"/><path d="M23 14l-5-4v8z" fill="#e04030"/><path d="M7 14L2 21" stroke="#a8d890" stroke-width="3"/><path d="M0 24l1-7 5 4z" fill="#a8d890"/><ellipse cx="18" cy="5" rx="5" ry="3" fill="#777"/><circle cx="18" cy="5" r="1.8" fill="#222"/></svg>
<svg class="a" style="left:1056px;top:64px" width="24.0" height="24.0" viewBox="0 0 24 24" preserveAspectRatio="none"><path d="M19 6A9.5 9.5 0 1 0 21.5 12" fill="none" stroke="#a8d890" stroke-width="3" /><path d="M22 1v9h-8z" fill="#a8d890"/><circle cx="12" cy="12" r="3.3" fill="#f0c020"/></svg>
<svg class="a" style="left:1088px;top:64px" width="24.0" height="24.0" viewBox="0 0 24 24" preserveAspectRatio="none"><path d="M19 6A9.5 9.5 0 1 0 21.5 12" fill="none" stroke="#d0cecb" stroke-width="3"/><path d="M22 1v9h-8z" fill="#d0cecb"/><circle cx="12" cy="12" r="3.3" fill="none" stroke="#b8b6b2" stroke-width="1.5"/><path d="M12 6v12M6 12h12" stroke="#b8b6b2" stroke-width="1.3"/></svg>
<svg class="a" style="left:1120px;top:64px" width="24.0" height="24.0" viewBox="0 0 24 24" preserveAspectRatio="none"><path d="M19 6A9.5 9.5 0 1 0 21.5 12" fill="none" stroke="#a8d890" stroke-width="3"/><path d="M22 1v9h-8z" fill="#a8d890"/><path d="M15 14l2 9 2-3 3 3 1-1-3-3 3-2z" fill="#111"/></svg>
<svg class="a" style="left:1189.5px;top:65px" width="19.0" height="22.0" viewBox="0 0 24 24" preserveAspectRatio="none"><path d="M2 3h13l4 4v16H2z" fill="#fff" stroke="#555"/><circle cx="10.5" cy="14" r="5.5" fill="none" stroke="#e87050" stroke-width="1"/><circle cx="10.5" cy="14" r="3.5" fill="none" stroke="#5a9ae0" stroke-width="1"/><circle cx="10.5" cy="14" r="1.5" fill="none" stroke="#60c060"/><path d="M19 0v9M14.5 4.5h9" stroke="#3aa83a" stroke-width="2.6"/></svg>
<svg class="a" style="left:1234px;top:65px" width="25.0" height="23.0" viewBox="0 0 24 24" preserveAspectRatio="none"><path d="M2 7c0-4 20-4 20 0v10c0 5-20 5-20 0z" fill="#dcdad6" stroke="#ecebe8"/><path d="M12 8c5 0 10 2 10 5v5c-3 3-7 2-10 0z" fill="#9c9a96"/></svg>
<svg class="a" style="left:1268px;top:65px" width="24.0" height="23.0" viewBox="0 0 24 24" preserveAspectRatio="none"><path d="M1 4l5-3 6 3 5-3 6 2v17l-5 3-6-3-5 3-6-3z" fill="#8d8b88"/><path d="M6 1v20M12 4v19M17 1v20" stroke="#b4b2ae"/></svg>
<svg class="a" style="left:1318px;top:65px" width="22.5" height="22.0" viewBox="0 0 24 24" preserveAspectRatio="none"><path d="M1 17L17 1l6 6L7 23z" fill="#f0c020" stroke="#8a6a20"/><path d="M5.0 13.0l2 2" stroke="#6a5010" stroke-width="0.8"/><path d="M7.7 10.3l2 2" stroke="#6a5010" stroke-width="0.8"/><path d="M10.4 7.6l2 2" stroke="#6a5010" stroke-width="0.8"/><path d="M13.100000000000001 4.899999999999999l2 2" stroke="#6a5010" stroke-width="0.8"/><path d="M15.8 2.1999999999999993l2 2" stroke="#6a5010" stroke-width="0.8"/></svg>
<svg class="a" style="left:1369.5px;top:65px" width="17.0" height="22.0" viewBox="0 0 24 24" preserveAspectRatio="none"><path d="M6 1h11l5 4v15H6z" fill="#fff" stroke="#777"/><path d="M2 3h13l4 4v16H2z" fill="#fff" stroke="#555"/><circle cx="10.5" cy="14" r="5.5" fill="none" stroke="#e87050" stroke-width="1"/><circle cx="10.5" cy="14" r="3.5" fill="none" stroke="#5a9ae0" stroke-width="1"/><circle cx="10.5" cy="14" r="1.5" fill="none" stroke="#60c060"/></svg>
<div class="a" style="left:26px;top:122px;width:3px;height:14px;background:#fff"></div>
<svg class="a" style="left:23px;top:122px" width="8.0" height="14.0" viewBox="0 0 24 24" preserveAspectRatio="none"><rect x="1" y="1" width="22" height="22" fill="url(#srvg)" stroke="#111" stroke-width="2"/><rect x="5" y="3.5" width="14" height="3" fill="#111"/><circle cx="17" cy="9" r="1.2" fill="#111"/><defs><linearGradient id="srvg" x1="0" y1="0" x2="0" y2="1"><stop offset="0" stop-color="#eee"/><stop offset="1" stop-color="#888"/></linearGradient></defs></svg>
<svg class="a" style="left:37px;top:143px" width="16.0" height="16.0" viewBox="0 0 24 24" preserveAspectRatio="none"><circle cx="12" cy="12" r="10" fill="none" stroke="#e07a40" stroke-width="1" stroke-dasharray="2 2"/><path d="M4 6A10 10 0 0 1 20 6" fill="none" stroke="#c03030" stroke-dasharray="2 1.5"/><path d="M20 6A10 10 0 0 1 20 18" fill="none" stroke="#40b040" stroke-dasharray="2 1.5"/><path d="M20 18A10 10 0 0 1 4 18" fill="none" stroke="#3a80e0" stroke-dasharray="2 1.5"/><circle cx="12" cy="5" r="1.4" fill="#c03030"/><circle cx="6" cy="9" r="1.4" fill="#e07a30"/><circle cx="6" cy="15" r="1.4" fill="#e07a30"/><circle cx="18" cy="9" r="1.4" fill="#40b040"/><circle cx="18" cy="15" r="1.4" fill="#40b040"/><circle cx="12" cy="19" r="1.4" fill="#3a80e0"/><circle cx="12" cy="12" r="2.2" fill="#ddd" stroke="#888" stroke-width="0.6"/></svg>
<svg class="a" style="left:55px;top:164px" width="16.0" height="16.0" viewBox="0 0 24 24" preserveAspectRatio="none"><circle cx="4" cy="4" r="3" fill="none" stroke="#e03030" stroke-width="1.3"/><circle cx="12" cy="4" r="3" fill="none" stroke="#e03030" stroke-width="1.3"/><circle cx="20" cy="4" r="3" fill="none" stroke="#e03030" stroke-width="1.3"/><circle cx="6" cy="12" r="3" fill="none" stroke="#f08040" stroke-width="1.3"/><circle cx="14" cy="12" r="3" fill="none" stroke="#50b050" stroke-width="1.3"/><circle cx="18" cy="12" r="3" fill="none" stroke="#50b050" stroke-width="1.3"/><circle cx="4" cy="20" r="3" fill="none" stroke="#4a8ae8" stroke-width="1.3"/><circle cx="12" cy="20" r="3" fill="none" stroke="#4a8ae8" stroke-width="1.3"/><circle cx="20" cy="20" r="3" fill="none" stroke="#4a8ae8" stroke-width="1.3"/></svg>
<svg class="a" style="left:55px;top:186px" width="16.0" height="16.0" viewBox="0 0 24 24" preserveAspectRatio="none"><path d="M3 16A10 10 0 0 1 12 2" fill="none" stroke="#f07a40" stroke-width="1.4"/><path d="M12 2A10 10 0 0 1 21 8" fill="none" stroke="#e03030" stroke-width="1.4"/><path d="M21 8A10 10 0 0 1 18 20" fill="none" stroke="#40b040" stroke-width="1.4"/><path d="M18 20A10 10 0 0 1 3 16" fill="none" stroke="#4a8ae8" stroke-width="1.4"/><circle cx="12" cy="12" r="6.5" fill="none" stroke="#f08a50" stroke-width="1.1"/><path d="M12 18.5A6.5 6.5 0 0 0 18.5 12" fill="none" stroke="#4a8ae8" stroke-width="1.1"/><circle cx="12" cy="12" r="3.5" fill="none" stroke="#f09060"/><circle cx="12" cy="12" r="1.3" fill="#555"/></svg>
<svg class="a" style="left:55px;top:208px" width="16.0" height="16.0" viewBox="0 0 24 24" preserveAspectRatio="none"><path d="M12 3L20 8V16L12 21L4 16V8z M12 3V21M4 8L20 16M20 8L4 16" fill="none" stroke="#b8b8b8" stroke-width="0.7"/><circle cx="12" cy="3" r="2" fill="#d02020"/><circle cx="4" cy="8" r="2" fill="#f08030"/><circle cx="20" cy="8" r="2" fill="#40b040"/><circle cx="4" cy="16" r="2" fill="#f08030"/><circle cx="20" cy="16" r="2" fill="#40b040"/><circle cx="12" cy="21" r="2" fill="#3a80e0"/><circle cx="12" cy="12" r="2.3" fill="#fff" stroke="#333" stroke-width="0.9"/></svg>
<svg class="a" style="left:37px;top:230px" width="16.0" height="16.0" viewBox="0 0 24 24" preserveAspectRatio="none"><path d="M1 6l6-4h16v15l-6 5H1z" fill="#6fae4e" stroke="#4a6e38" stroke-width="1.2"/><path d="M1 6h16v16" fill="none" stroke="#4a6e38" stroke-width="1.2"/><path d="M17 6l6-4" stroke="#4a6e38" stroke-width="1.2"/><rect x="3" y="8" width="12" height="12" fill="#8fd060"/><path d="M17 7l5-4v14l-5 4z" fill="#5a9a3e"/><path d="M2 5.5l5.5-3.5h14l-5 3.5z" fill="#9ed47e"/></svg>
<svg class="a" style="left:37px;top:296px" width="16.0" height="16.0" viewBox="0 0 24 24" preserveAspectRatio="none"><path d="M1 6l6-4h16v15l-6 5H1z" fill="#6fae4e" stroke="#4a6e38" stroke-width="1.2"/><path d="M1 6h16v16" fill="none" stroke="#4a6e38" stroke-width="1.2"/><path d="M17 6l6-4" stroke="#4a6e38" stroke-width="1.2"/><rect x="3" y="8" width="12" height="12" fill="#8fd060"/><path d="M17 7l5-4v14l-5 4z" fill="#5a9a3e"/><path d="M2 5.5l5.5-3.5h14l-5 3.5z" fill="#9ed47e"/></svg>
<svg class="a" style="left:55px;top:252px" width="16.0" height="16.0" viewBox="0 0 24 24" preserveAspectRatio="none"><path d="M1 6l6-4h16v15l-6 5H1z" fill="#6fae4e" stroke="#4a6e38" stroke-width="1.2"/><path d="M1 6h16v16" fill="none" stroke="#4a6e38" stroke-width="1.2"/><path d="M17 6l6-4" stroke="#4a6e38" stroke-width="1.2"/><rect x="3" y="8" width="12" height="12" fill="#8fd060"/><path d="M17 7l5-4v14l-5 4z" fill="#5a9a3e"/><path d="M2 5.5l5.5-3.5h14l-5 3.5z" fill="#9ed47e"/></svg>
<svg class="a" style="left:55px;top:274px" width="16.0" height="16.0" viewBox="0 0 24 24" preserveAspectRatio="none"><path d="M1 6l6-4h16v15l-6 5H1z" fill="#6fae4e" stroke="#4a6e38" stroke-width="1.2"/><path d="M1 6h16v16" fill="none" stroke="#4a6e38" stroke-width="1.2"/><path d="M17 6l6-4" stroke="#4a6e38" stroke-width="1.2"/><rect x="3" y="8" width="12" height="12" fill="#8fd060"/><path d="M17 7l5-4v14l-5 4z" fill="#5a9a3e"/><path d="M2 5.5l5.5-3.5h14l-5 3.5z" fill="#9ed47e"/></svg>
<svg class="a" style="left:55px;top:318px" width="16.0" height="16.0" viewBox="0 0 24 24" preserveAspectRatio="none"><path d="M1 6l6-4h16v15l-6 5H1z" fill="#6fae4e" stroke="#4a6e38" stroke-width="1.2"/><path d="M1 6h16v16" fill="none" stroke="#4a6e38" stroke-width="1.2"/><path d="M17 6l6-4" stroke="#4a6e38" stroke-width="1.2"/><rect x="3" y="8" width="12" height="12" fill="#8fd060"/><path d="M17 7l5-4v14l-5 4z" fill="#5a9a3e"/><path d="M2 5.5l5.5-3.5h14l-5 3.5z" fill="#9ed47e"/></svg>
<div class="a" style="left:0px;top:335px;width:434px;height:10px;overflow:hidden">
<svg class="a" style="left:55px;top:5px" width="16.0" height="16.0" viewBox="0 0 24 24" preserveAspectRatio="none"><path d="M1 6l6-4h16v15l-6 5H1z" fill="#6fae4e" stroke="#4a6e38" stroke-width="1.2"/><path d="M1 6h16v16" fill="none" stroke="#4a6e38" stroke-width="1.2"/><path d="M17 6l6-4" stroke="#4a6e38" stroke-width="1.2"/><rect x="3" y="8" width="12" height="12" fill="#8fd060"/><path d="M17 7l5-4v14l-5 4z" fill="#5a9a3e"/><path d="M2 5.5l5.5-3.5h14l-5 3.5z" fill="#9ed47e"/></svg>
<div class="a t" style="left:74.4px;top:3.5px;font:normal 13.4px 'Liberation Sans',sans-serif;line-height:19px;color:#000;">Clip3</div>
<svg class="a" style="left:2px;top:6px" width="15.0" height="14.0" viewBox="0 0 24 24" preserveAspectRatio="none"><path d="M2 10c6-6 14-6 20 0" fill="none" stroke="#d0d0d0" stroke-width="0.8"/></svg>
</div>
<div class="a" style="left:0px;top:344px;width:434px;height:1px;background:#b6b1ac"></div>
<svg class="a" style="left:2px;top:231px" width="15.0" height="14.0" viewBox="0 0 24 24" preserveAspectRatio="none"><path d="M1 12c6-9 16-9 22 0-6 9-16 9-22 0z" fill="#fff" stroke="#4a8ad0" stroke-width="1.5"/><circle cx="12" cy="12" r="5" fill="#1a6ac0"/><circle cx="12" cy="12" r="2.6" fill="#000"/><circle cx="10" cy="10" r="1" fill="#fff"/></svg>
<svg class="a" style="left:2px;top:253px" width="15.0" height="14.0" viewBox="0 0 24 24" preserveAspectRatio="none"><path d="M2 10c6 6 14 6 20 0" fill="none" stroke="#b0b0b0" stroke-width="1.2"/><path d="M2 10c6-6 14-6 20 0" fill="none" stroke="#d0d0d0" stroke-width="0.8"/><path d="M5 13l-1 3M9 15l-0.5 3M15 15l0.5 3M19 13l1 3" stroke="#b0b0b0" stroke-width="1"/></svg>
<svg class="a" style="left:2px;top:275px" width="15.0" height="14.0" viewBox="0 0 24 24" preserveAspectRatio="none"><path d="M2 10c6 6 14 6 20 0" fill="none" stroke="#b0b0b0" stroke-width="1.2"/><path d="M2 10c6-6 14-6 20 0" fill="none" stroke="#d0d0d0" stroke-width="0.8"/><path d="M5 13l-1 3M9 15l-0.5 3M15 15l0.5 3M19 13l1 3" stroke="#b0b0b0" stroke-width="1"/></svg>
<svg class="a" style="left:2px;top:297px" width="15.0" height="14.0" viewBox="0 0 24 24" preserveAspectRatio="none"><path d="M2 10c6 6 14 6 20 0" fill="none" stroke="#b0b0b0" stroke-width="1.2"/><path d="M2 10c6-6 14-6 20 0" fill="none" stroke="#d0d0d0" stroke-width="0.8"/><path d="M5 13l-1 3M9 15l-0.5 3M15 15l0.5 3M19 13l1 3" stroke="#b0b0b0" stroke-width="1"/></svg>
<svg class="a" style="left:2px;top:319px" width="15.0" height="14.0" viewBox="0 0 24 24" preserveAspectRatio="none"><path d="M2 10c6 6 14 6 20 0" fill="none" stroke="#b0b0b0" stroke-width="1.2"/><path d="M2 10c6-6 14-6 20 0" fill="none" stroke="#d0d0d0" stroke-width="0.8"/><path d="M5 13l-1 3M9 15l-0.5 3M15 15l0.5 3M19 13l1 3" stroke="#b0b0b0" stroke-width="1"/></svg>
<svg class="a" style="left:33px;top:414px" width="12.0" height="12.0" viewBox="0 0 24 24" preserveAspectRatio="none"><path d="M2 9l5-3h6v13l-5 3H2z" fill="#cfcfcc" stroke="#a9a9a5"/><path d="M8 9l10-7 2 3 3-4v9l-3-2-9 6z" fill="#b8b6b3"/></svg>
<svg class="a" style="left:143px;top:411px" width="14.0" height="14.0" viewBox="0 0 24 24" preserveAspectRatio="none"><circle cx="12" cy="12" r="9.5" fill="none" stroke="#9d9b97" stroke-width="3.2"/><path d="M6 18L18 6" stroke="#9d9b97" stroke-width="3.2"/></svg>
<svg class="a" style="left:250.5px;top:413px" width="11.5" height="11.0" viewBox="0 0 24 24" preserveAspectRatio="none"><path d="M3 3l18 18M21 3L3 21" stroke="#9d9b97" stroke-width="6" stroke-linecap="round"/></svg>
<svg class="a" style="left:380px;top:411px" width="11.0" height="16.0" viewBox="0 0 24 24" preserveAspectRatio="none"><path d="M4 8c0-8 16-8 16 0 0 5-7 6-7 11" fill="none" stroke="#8fcf6a" stroke-width="4"/><circle cx="13" cy="23" r="2.2" fill="#8fcf6a"/></svg>
<svg class="a" style="left:419px;top:440px" width="18.0" height="15.0" viewBox="0 0 24 24" preserveAspectRatio="none"><circle cx="12" cy="12" r="6" fill="none" stroke="#9b9994" stroke-width="3"/><rect x="10" y="0.5" width="4" height="5" fill="#9b9994" transform="rotate(0 12 12)"/><rect x="10" y="0.5" width="4" height="5" fill="#9b9994" transform="rotate(45 12 12)"/><rect x="10" y="0.5" width="4" height="5" fill="#9b9994" transform="rotate(90 12 12)"/><rect x="10" y="0.5" width="4" height="5" fill="#9b9994" transform="rotate(135 12 12)"/><rect x="10" y="0.5" width="4" height="5" fill="#9b9994" transform="rotate(180 12 12)"/><rect x="10" y="0.5" width="4" height="5" fill="#9b9994" transform="rotate(225 12 12)"/><rect x="10" y="0.5" width="4" height="5" fill="#9b9994" transform="rotate(270 12 12)"/><rect x="10" y="0.5" width="4" height="5" fill="#9b9994" transform="rotate(315 12 12)"/><circle cx="12" cy="12" r="3" fill="#dcd8d4"/></svg>
<svg class="a" style="left:64px;top:468px" width="15.0" height="18.0" viewBox="0 0 24 24" preserveAspectRatio="none"><path d="M7 2h10l4 4v13H7z" fill="#d8d8d6" stroke="#9a9a96"/><path d="M2 6h10l3 3v14H2z" fill="#e6e6e4" stroke="#9a9a96"/><path d="M4 12h9M4 15h9M4 18h9" stroke="#8a8a86"/></svg>
<svg class="a" style="left:160px;top:468px" width="14.0" height="18.0" viewBox="0 0 24 24" preserveAspectRatio="none"><rect x="5" y="3" width="16" height="19" fill="#d0d0ce" stroke="#ababa7"/><rect x="9" y="1" width="8" height="4" fill="#c0c0be"/><path d="M1 8h11v15H1z" fill="#e8e8e6" stroke="#ababa7"/><path d="M3 13h7M3 16h7M3 19h7" stroke="#b0b0ac"/></svg>
<svg class="a" style="left:252px;top:469px" width="20.0" height="18.0" viewBox="0 0 24 24" preserveAspectRatio="none"><path d="M4 11A8 8 0 0 1 19 7" fill="none" stroke="#2a8ed0" stroke-width="3.5"/><path d="M23 2v9h-9z" fill="#2a8ed0"/><path d="M20 13A8 8 0 0 1 5 17" fill="none" stroke="#2a8ed0" stroke-width="3.5"/><path d="M1 22v-9h9z" fill="#2a8ed0"/></svg>
<svg class="a" style="left:348px;top:468px" width="18.0" height="18.0" viewBox="0 0 24 24" preserveAspectRatio="none"><path d="M1 1h19l3 3v19H1z" fill="#3a6ec0" stroke="#1e3e78"/><rect x="5" y="2" width="13" height="9" fill="#fff"/><rect x="6" y="15" width="11" height="8" fill="#d8d8d8"/><rect x="8" y="17" width="3" height="4" fill="#222"/></svg>
<svg class="a" style="left:172px;top:526px" width="14.0" height="15.0" viewBox="0 0 24 24" preserveAspectRatio="none"><path d="M4 18A9 9 0 0 0 20 8" fill="none" stroke="#f2f2f0" stroke-width="4"/></svg>
<svg class="a" style="left:267px;top:526px" width="16.0" height="14.0" viewBox="0 0 24 24" preserveAspectRatio="none"><path d="M2 10c4-8 14-8 17 2" fill="none" stroke="#8e8c88" stroke-width="3"/><path d="M14 10h9l-4 8z" fill="#8e8c88"/></svg>
<svg class="a" style="left:69.5px;top:576.5px" width="32.5" height="34.0" viewBox="0 0 24 24" preserveAspectRatio="none"><path d="M3 16A10 10 0 0 1 12 2" fill="none" stroke="#f07a40" stroke-width="1.4"/><path d="M12 2A10 10 0 0 1 21 8" fill="none" stroke="#e03030" stroke-width="1.4"/><path d="M21 8A10 10 0 0 1 18 20" fill="none" stroke="#40b040" stroke-width="1.4"/><path d="M18 20A10 10 0 0 1 3 16" fill="none" stroke="#4a8ae8" stroke-width="1.4"/><circle cx="12" cy="12" r="6.5" fill="none" stroke="#f08a50" stroke-width="1.1"/><path d="M12 18.5A6.5 6.5 0 0 0 18.5 12" fill="none" stroke="#4a8ae8" stroke-width="1.1"/><circle cx="12" cy="12" r="3.5" fill="none" stroke="#f09060"/><circle cx="12" cy="12" r="1.3" fill="#555"/></svg>
<svg class="a" style="left:283px;top:577px" width="29.0" height="33.0" viewBox="0 0 24 24" preserveAspectRatio="none"><path d="M12 3L20 8V16L12 21L4 16V8z M12 3V21M4 8L20 16M20 8L4 16" fill="none" stroke="#b8b8b8" stroke-width="0.7"/><circle cx="12" cy="3" r="2" fill="#d02020"/><circle cx="4" cy="8" r="2" fill="#f08030"/><circle cx="20" cy="8" r="2" fill="#40b040"/><circle cx="4" cy="16" r="2" fill="#f08030"/><circle cx="20" cy="16" r="2" fill="#40b040"/><circle cx="12" cy="21" r="2" fill="#3a80e0"/><circle cx="12" cy="12" r="2.3" fill="#fff" stroke="#333" stroke-width="0.9"/></svg>
<svg class="a" style="left:180.5px;top:674px" width="24.5" height="17.0" viewBox="0 0 24 24" preserveAspectRatio="none"><rect x="1" y="1" width="3.5" height="22" rx="1.5" fill="#34c034"/><rect x="19.5" y="1" width="3.5" height="22" rx="1.5" fill="#34c034"/><path d="M6 2v20l12-10z" fill="#34c034"/></svg>
<svg class="a" style="left:176px;top:702px" width="23.5" height="17.5" viewBox="0 0 24 24" preserveAspectRatio="none"><rect x="1" y="1" width="3.5" height="22" rx="1.5" fill="#e02828"/><rect x="19.5" y="1" width="3.5" height="22" rx="1.5" fill="#e02828"/><path d="M6 3l12 18M18 3L6 21" stroke="#e02828" stroke-width="4"/></svg>
<svg class="a" style="left:153px;top:845px" width="14.5" height="16.0" viewBox="0 0 24 24" preserveAspectRatio="none"><path d="M2 1v22l20-11z" fill="#34c034"/></svg>
<svg class="a" style="left:181px;top:929px" width="12.5" height="16.0" viewBox="0 0 24 24" preserveAspectRatio="none"><path d="M2 1h14l6 6v16H2z" fill="#111"/><path d="M16 1v6h6" fill="#fff" stroke="#111"/><rect x="5" y="13" width="3" height="8" fill="#fff"/><rect x="10" y="9" width="3" height="12" fill="#fff"/><rect x="15" y="15" width="3" height="6" fill="#fff"/><rect x="4" y="3" width="2" height="2" fill="#e02020"/><rect x="8" y="5" width="2" height="2" fill="#30a030"/></svg>
<svg class="a" style="left:155px;top:1035px" width="24.0" height="15.0" viewBox="0 0 24 24" preserveAspectRatio="none"><path d="M1 12c6-12 16-12 22 0-6 12-16 12-22 0z" fill="#fff" stroke="#000" stroke-width="2"/><circle cx="12" cy="12" r="6" fill="#000"/><circle cx="9.5" cy="9.5" r="1.6" fill="#fff"/></svg>
<svg class="a" style="left:462px;top:126px" width="16.0" height="16.5" viewBox="0 0 24 24" preserveAspectRatio="none"><path d="M1 6h5l1.5-3h9L18 6h5v13H1z" fill="#c8c8c6" stroke="#8e8e8a"/><circle cx="12" cy="12.5" r="5" fill="#ddeefa" stroke="#8e8e8a" stroke-width="1.4"/><circle cx="12" cy="12.5" r="2.8" fill="#9fd2f0"/><circle cx="4" cy="8.5" r="0.9" fill="#e04040"/><path d="M3 23c-1-6 4-9 9-6l1-3 3 7-7 1 2-2c-3-2-6 0-5 3z" fill="#e41e1e"/></svg>
<svg class="a" style="left:488px;top:126px" width="16.0" height="16.5" viewBox="0 0 24 24" preserveAspectRatio="none"><g opacity="0.45"><path d="M1 6h5l1.5-3h9L18 6h5v13H1z" fill="#c8c8c6" stroke="#8e8e8a"/><circle cx="12" cy="12.5" r="5" fill="#ddeefa" stroke="#8e8e8a" stroke-width="1.4"/><circle cx="12" cy="12.5" r="2.8" fill="#ccc"/><circle cx="4" cy="8.5" r="0.9" fill="#ccc"/><path d="M21 23c1-6-4-9-9-6l-1-3-3 7 7 1-2-2c3-2 6 0 5 3z" fill="#888"/></g></svg>
<div class="a" style="left:512.5px;top:127px;width:1px;height:15px;background:#d6d2cd"></div>
<svg class="a" style="left:519px;top:125.5px" width="18.0" height="17.0" viewBox="0 0 24 24" preserveAspectRatio="none"><path d="M1 6V1h5M18 1h5v5M23 18v5h-5M6 23H1v-5" fill="none" stroke="#8e8e8a" stroke-dasharray="2 1"/><g transform="translate(2.5 2.5) scale(0.8)"><path d="M1 6h5l1.5-3h9L18 6h5v13H1z" fill="#c8c8c6" stroke="#8e8e8a"/><circle cx="12" cy="12.5" r="5" fill="#ddeefa" stroke="#8e8e8a" stroke-width="1.4"/><circle cx="12" cy="12.5" r="2.8" fill="#9fd2f0"/><circle cx="4" cy="8.5" r="0.9" fill="#e04040"/></g></svg>
<div class="a" style="left:544.5px;top:127px;width:1px;height:15px;background:#d6d2cd"></div>
<div class="a t" style="left:553.5px;top:124.80000000000001px;font:bold 12.5px 'Liberation Sans',sans-serif;line-height:18px;color:#787560;">3D</div>
<svg class="a" style="left:578px;top:126px" width="16.5" height="16.5" viewBox="0 0 24 24" preserveAspectRatio="none"><path d="M1 6h5l1.5-3h9L18 6h5v13H1z" fill="#c8c8c6" stroke="#8e8e8a"/><circle cx="12" cy="12.5" r="5" fill="#ddeefa" stroke="#8e8e8a" stroke-width="1.4"/><circle cx="12" cy="12.5" r="2.8" fill="#9fd2f0"/><circle cx="4" cy="8.5" r="0.9" fill="#e04040"/><path d="M12 12l9 10" stroke="#d8a830" stroke-width="3.4"/><path d="M20 21l2 2" stroke="#fff" stroke-width="1.5"/></svg>
<div class="a" style="left:602.5px;top:127px;width:1px;height:15px;background:#d6d2cd"></div>
<svg class="a" style="left:610px;top:126px" width="16.0" height="16.0" viewBox="0 0 24 24" preserveAspectRatio="none"><rect x="1" y="1" width="22" height="22" fill="none" stroke="#6e6e6a" stroke-dasharray="2.2 1.8" stroke-width="1.1"/><path d="M12 5v14M5 12h14" stroke="#6ec050" stroke-width="4"/></svg>
<svg class="a" style="left:636px;top:126px" width="16.0" height="16.0" viewBox="0 0 24 24" preserveAspectRatio="none"><rect x="1" y="1" width="22" height="22" fill="none" stroke="#6e6e6a" stroke-dasharray="2.2 1.8" stroke-width="1.1"/><path d="M5 12h14" stroke="#e02020" stroke-width="4"/></svg>
<svg class="a" style="left:662px;top:126px" width="16.0" height="16.0" viewBox="0 0 24 24" preserveAspectRatio="none"><rect x="1" y="1" width="22" height="22" fill="none" stroke="#6e6e6a" stroke-dasharray="2.2 1.8" stroke-width="1.1"/><path d="M11 3v9M6.5 7.5h9" stroke="#6ec050" stroke-width="3.4"/><path d="M5 16h10" stroke="#e02020" stroke-width="3.4"/><path d="M15 15l2 8 1.8-2.6 3 3 1.2-1.2-3-3L22.6 17z" fill="#555"/></svg>
<div class="a" style="left:686.5px;top:127px;width:1px;height:15px;background:#d6d2cd"></div>
<svg class="a" style="left:694px;top:126px" width="16.0" height="16.0" viewBox="0 0 24 24" preserveAspectRatio="none"><rect x="1" y="1" width="22" height="22" fill="none" stroke="#6e6e6a" stroke-dasharray="2.2 1.8" stroke-width="1.1"/><path d="M11 4L3 19h16z" fill="#9ed47e" stroke="#6a9a50" stroke-width="0.8"/><path d="M15 15l2 8 1.8-2.6 3 3 1.2-1.2-3-3L22.6 17z" fill="#555"/></svg>
<svg class="a" style="left:720px;top:126px" width="16.0" height="16.0" viewBox="0 0 24 24" preserveAspectRatio="none"><rect x="1" y="1" width="22" height="22" fill="none" stroke="#6e6e6a" stroke-dasharray="2.2 1.8" stroke-width="1.1"/><path d="M11 4L3 19h16z" fill="none" stroke="#aaa" stroke-width="0.8"/><circle cx="11" cy="4" r="1.8" fill="#c83a2a"/><circle cx="3" cy="19" r="1.8" fill="#c83a2a"/><path d="M15 15l2 8 1.8-2.6 3 3 1.2-1.2-3-3L22.6 17z" fill="#555"/></svg>
<svg class="a" style="left:745.5px;top:125px" width="16.5" height="18.0" viewBox="0 0 24 24" preserveAspectRatio="none"><rect x="1" y="5" width="19" height="13" fill="none" stroke="#777" stroke-dasharray="2 1.5"/><path d="M3 9l6-5h12v8l-6 5H3z" fill="#9ed47e" stroke="#5a8a40"/><path d="M3 9h12v8M15 9l6-5" fill="none" stroke="#5a8a40"/><path d="M15 15l2 8 1.8-2.6 3 3 1.2-1.2-3-3L22.6 17z" fill="#555"/></svg>
<svg class="a" style="left:771.5px;top:126px" width="17.5" height="16.0" viewBox="0 0 24 24" preserveAspectRatio="none"><path d="M2 6l5-4h15v13l-5 4H2z" fill="none" stroke="#a0a0a0" stroke-dasharray="1.5 1.5"/><circle cx="2" cy="6" r="1.4" fill="#d04030"/><circle cx="7" cy="2" r="1.4" fill="#d04030"/><circle cx="22" cy="2" r="1.4" fill="#d04030"/><circle cx="17" cy="6" r="1.4" fill="#d04030"/><circle cx="2" cy="19" r="1.4" fill="#d04030"/><circle cx="17" cy="19" r="1.4" fill="#d04030"/><circle cx="22" cy="15" r="1.4" fill="#d04030"/><path d="M15 15l2 8 1.8-2.6 3 3 1.2-1.2-3-3L22.6 17z" fill="#555"/></svg>
<svg class="a" style="left:797px;top:126px" width="17.5" height="16.0" viewBox="0 0 24 24" preserveAspectRatio="none"><path d="M1 3h22l-3 18H4z" fill="none" stroke="#a0a0a0" stroke-dasharray="1.5 1.5"/><path d="M6 14l11-8v13z" fill="#9ed47e" stroke="#6a9a50" stroke-width="0.8"/></svg>
<svg class="a" style="left:822.5px;top:126px" width="17.5" height="16.0" viewBox="0 0 24 24" preserveAspectRatio="none"><path d="M1 2h20l2 18H3z" fill="none" stroke="#a0a0a0" stroke-dasharray="1.5 1.5"/><circle cx="6" cy="6" r="1.8" fill="#c04a3a"/><circle cx="12" cy="5" r="1.8" fill="#c04a3a"/><circle cx="9" cy="10" r="1.8" fill="#c04a3a"/><circle cx="15" cy="11" r="1.8" fill="#c04a3a"/><circle cx="7" cy="15" r="1.8" fill="#c04a3a"/><circle cx="13" cy="17" r="1.8" fill="#c04a3a"/><circle cx="18" cy="17" r="1.8" fill="#c04a3a"/></svg>
<svg class="a" style="left:850px;top:126px" width="16.0" height="16.0" viewBox="0 0 24 24" preserveAspectRatio="none"><rect x="1" y="1" width="22" height="22" fill="none" stroke="#6e6e6a" stroke-dasharray="2.2 1.8" stroke-width="1.1"/><circle cx="6.5" cy="6.5" r="3" fill="#2a86d0"/><circle cx="6.5" cy="16.5" r="3" fill="#2a86d0"/><circle cx="15" cy="13" r="4" fill="#9ed47e" stroke="#555" stroke-width="0.8"/><path d="M17.5 16l5 5" stroke="#555" stroke-width="2.2"/></svg>
<svg class="a" style="left:880.5px;top:127px" width="12.0" height="15.0" viewBox="0 0 24 24" preserveAspectRatio="none"><circle cx="6" cy="6" r="4.5" fill="#d8d8d8" stroke="#b4b4b4"/><path d="M12 12l2 9 2-3 3 3 2-2-3-3 3-2z" fill="#999"/></svg>
<svg class="a" style="left:902.5px;top:126px" width="16.0" height="16.0" viewBox="0 0 24 24" preserveAspectRatio="none"><path d="M2 7l5-5h12v14l-5 5H2z" fill="#dadada" stroke="#a8a8a8"/><path d="M2 7h12v14M14 7l5-5" fill="none" stroke="#a8a8a8"/><path d="M15 15l2 8 1.8-2.6 3 3 1.2-1.2-3-3L22.6 17z" fill="#999"/></svg>
<svg class="a" style="left:930.5px;top:126px" width="14.0" height="16.0" viewBox="0 0 24 24" preserveAspectRatio="none"><path d="M8 3L1 17h14z" fill="#9ed47e" stroke="#6a9a50" stroke-width="0.8"/><path d="M15 15l2 8 1.8-2.6 3 3 1.2-1.2-3-3L22.6 17z" fill="#555"/></svg>
<svg class="a" style="left:955px;top:126px" width="15.0" height="16.0" viewBox="0 0 24 24" preserveAspectRatio="none"><path d="M8 3L1 17h14z" fill="none" stroke="#aaa" stroke-width="0.9"/><circle cx="8" cy="3" r="1.8" fill="#c83a2a"/><circle cx="1.5" cy="17" r="1.8" fill="#c83a2a"/><path d="M15 15l2 8 1.8-2.6 3 3 1.2-1.2-3-3L22.6 17z" fill="#555"/></svg>
<svg class="a" style="left:981.5px;top:126px" width="14.0" height="16.0" viewBox="0 0 24 24" preserveAspectRatio="none"><circle cx="5" cy="19" r="4" fill="#e02020"/><text x="9" y="17" font-family="Liberation Sans" font-size="20" fill="#444">?</text></svg>
<svg class="a" style="left:1005.5px;top:126px" width="16.0" height="16.0" viewBox="0 0 24 24" preserveAspectRatio="none"><path d="M7 10L1 22h12z" fill="#9ed47e" stroke="#6a9a50" stroke-width="0.8"/><text x="11" y="16" font-family="Liberation Sans" font-size="19" fill="#444">?</text></svg>
<svg class="a" style="left:1032.5px;top:126px" width="15.0" height="16.0" viewBox="0 0 24 24" preserveAspectRatio="none"><path d="M12 2v20M2 12h20" stroke="#bdbbb8" stroke-width="7"/></svg>
<svg class="a" style="left:1058.5px;top:126px" width="15.0" height="16.0" viewBox="0 0 24 24" preserveAspectRatio="none"><path d="M2 12h20" stroke="#bdbbb8" stroke-width="6"/></svg>
<svg class="a" style="left:1083.5px;top:126px" width="16.5" height="16.0" viewBox="0 0 24 24" preserveAspectRatio="none"><circle cx="12" cy="12" r="10" fill="none" stroke="#a9a7a4" stroke-width="3"/><circle cx="12" cy="12" r="6.5" fill="#d8d6d3"/><path d="M8.5 8.5l7 7M15.5 8.5l-7 7" stroke="#a9a7a4" stroke-width="2.4"/></svg>

</body></html>
